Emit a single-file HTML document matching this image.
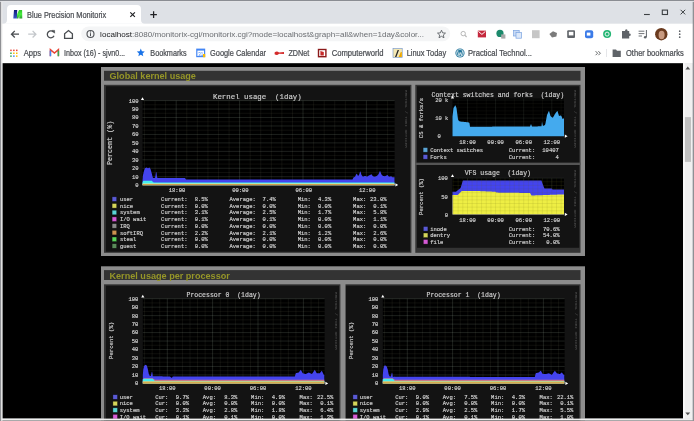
<!DOCTYPE html>
<html><head><meta charset="utf-8"><title>Blue Precision Monitorix</title>
<style>html,body{margin:0;padding:0;width:694px;height:421px;overflow:hidden;background:#8f9094;}
svg text{white-space:pre;} svg{filter:blur(0.35px);}</style></head>
<body>
<svg width="694" height="421" viewBox="0 0 694 421" style="position:absolute;left:0;top:0">
<rect x="0.00" y="0.00" width="694.00" height="421.00" fill="#dee1e6" />
<path d="M3,23.8 Q7,23.8 7,19.8 L7,9 Q7,5 11,5 L137,5 Q141,5 141,9 L141,19.8 Q141,23.8 145,23.8 Z" fill="#ffffff"/>
<rect x="0.00" y="23.70" width="694.00" height="39.50" fill="#ffffff" />
<defs><linearGradient id="fb" x1="0" y1="0" x2="0" y2="1"><stop offset="0" stop-color="#101c7a"/><stop offset="1" stop-color="#3a58c8"/></linearGradient><linearGradient id="fg" x1="0" y1="0" x2="0" y2="1"><stop offset="0" stop-color="#2ec02a"/><stop offset="0.5" stop-color="#48f040"/><stop offset="1" stop-color="#2a9a30"/></linearGradient></defs>
<path d="M13.3,18.6 L14,9.9 L17.2,9.9 L16.9,18.6 Z" fill="url(#fb)"/>
<path d="M17.1,14.2 L19.0,9.9 L22.1,9.9 L22.3,18.6 L19.3,18.6 L19.2,15.2 L18.4,18.6 L16.9,18.6 Z" fill="url(#fg)"/>
<text x="27.10" y="17.80" font-family="Liberation Sans" font-size="8.2" fill="#4a4d52" textLength="79.10" lengthAdjust="spacingAndGlyphs" stroke="#4a4d52" stroke-width="0.22">Blue Precision Monitorix</text>
<path d="M130.3,12.3 L134.9,16.9 M134.9,12.3 L130.3,16.9" stroke="#202124" stroke-width="1.15"/>
<path d="M153.6,11.3 L153.6,17.9 M150.3,14.6 L156.9,14.6" stroke="#202124" stroke-width="1.25"/>
<path d="M644,14.5 L649.8,14.5" stroke="#3c4043" stroke-width="1.1"/>
<rect x="662.3" y="10.1" width="5.2" height="4.4" fill="none" stroke="#3c4043" stroke-width="1.1"/>
<path d="M680.6,9.8 L685.2,14.4 M685.2,9.8 L680.6,14.4" stroke="#3c4043" stroke-width="1"/>
<path d="M19,34.2 L11.6,34.2 M14.8,30.9 L11.5,34.2 L14.8,37.5" stroke="#4a4d51" stroke-width="1.3" fill="none"/>
<path d="M28.2,34.2 L35.8,34.2 M32.6,30.9 L35.9,34.2 L32.6,37.5" stroke="#c4c7cb" stroke-width="1.3" fill="none"/>
<path d="M53.6,32.2 A3.5,3.5 0 1 0 54,35.8" stroke="#4a4d51" stroke-width="1.3" fill="none"/><path d="M51.8,30.4 L54.6,30.4 L54.6,33.2 Z" fill="#4a4d51" stroke="#4a4d51" stroke-width="0.6"/>
<path d="M64.6,38.3 L64.6,33.8 L68.5,30.5 L72.4,33.8 L72.4,38.3 Z" stroke="#4a4d51" stroke-width="1.3" fill="none"/>
<rect x="81.2" y="26.4" width="369" height="14.8" rx="7.4" fill="#f4f5f6"/>
<circle cx="90.5" cy="34" r="3.5" fill="none" stroke="#505357" stroke-width="1.1"/><path d="M90.5,33.2 L90.5,36.2" stroke="#505357" stroke-width="1"/><circle cx="90.5" cy="31.9" r="0.6" fill="#505357"/>
<text x="100.1" y="37.1" font-family="Liberation Sans" font-size="7.95" fill="#6b6e72" textLength="324" lengthAdjust="spacingAndGlyphs"><tspan fill="#202124">localhost</tspan>:8080/monitorix-cgi/monitorix.cgi?mode=localhost&amp;graph=all&amp;when=1day&amp;color...</text>
<polygon points="441.50,30.20 442.61,32.87 445.49,33.10 443.30,34.98 443.97,37.80 441.50,36.29 439.03,37.80 439.70,34.98 437.51,33.10 440.39,32.87" fill="none" stroke="#5f6368" stroke-width="0.9"/>
<circle cx="463.2" cy="33.6" r="2.2" fill="none" stroke="#b8b8b8" stroke-width="1"/><path d="M464.8,35.2 L466.6,37" stroke="#b8b8b8" stroke-width="1.2"/>
<rect x="477.8" y="30.6" width="8.2" height="6.8" fill="#c5283d"/><path d="M478.4,31.4 L481.9,34.4 L485.4,31.4" stroke="#fff" stroke-width="1" fill="none"/>
<circle cx="500" cy="33.4" r="3.6" fill="#1d8a6c"/><rect x="501.2" y="34.4" width="4.2" height="4.2" fill="#a8a8a8"/>
<rect x="513.6" y="30.4" width="5.6" height="5.6" fill="#c8daf5" stroke="#7aa3e0" stroke-width="0.7"/><rect x="516" y="32.6" width="5.6" height="5.6" fill="#dce8f9" stroke="#7aa3e0" stroke-width="0.7"/>
<rect x="532" y="30.2" width="7.6" height="8" fill="#c6c6c6"/>
<path d="M549.4,34 L553,31.2 L557,33 L556.4,36.6 L552,37.6 Z" fill="#7b7b7b"/>
<rect x="567.2" y="30.2" width="7.8" height="7.8" rx="1" fill="#5f6368"/><rect x="568.8" y="31.8" width="4.6" height="3.6" fill="#fff"/>
<rect x="585" y="30.2" width="8.2" height="8" rx="2" fill="#3b7be8"/><rect x="586.8" y="32.6" width="3.6" height="3" fill="#fff"/>
<circle cx="607.1" cy="34.1" r="4" fill="#22b573"/><circle cx="607.1" cy="34.1" r="2" fill="none" stroke="#fff" stroke-width="0.9"/>
<path d="M622,31 L625,31 Q625,29.2 626.3,29.2 Q627.6,29.2 627.6,31 L629.2,31 L629.2,33.4 Q630.8,33.4 630.8,34.7 Q630.8,36 629.2,36 L629.2,38.4 L622,38.4 Z" fill="#5f6368"/>
<path d="M638.6,31.2 L644.4,31.2 M638.6,33.6 L644.4,33.6 M638.6,36 L642,36" stroke="#5f6368" stroke-width="0.9"/><path d="M646.4,30 L646.4,37" stroke="#5f6368" stroke-width="1"/><circle cx="645.2" cy="37.2" r="1.3" fill="#5f6368"/>
<circle cx="661.3" cy="34.2" r="6.2" fill="#6a3a1e"/><ellipse cx="661.6" cy="35" rx="3" ry="4.2" fill="#c89a80"/>
<circle cx="679.7" cy="31.200000000000003" r="0.85" fill="#5f6368"/>
<circle cx="679.7" cy="34.2" r="0.85" fill="#5f6368"/>
<circle cx="679.7" cy="37.2" r="0.85" fill="#5f6368"/>
<rect x="10.20" y="49.60" width="1.5" height="1.5" fill="#ea4335"/>
<rect x="13.10" y="49.60" width="1.5" height="1.5" fill="#ea4335"/>
<rect x="16.00" y="49.60" width="1.5" height="1.5" fill="#ea4335"/>
<rect x="10.20" y="52.50" width="1.5" height="1.5" fill="#34a853"/>
<rect x="13.10" y="52.50" width="1.5" height="1.5" fill="#fbbc05"/>
<rect x="16.00" y="52.50" width="1.5" height="1.5" fill="#fbbc05"/>
<rect x="10.20" y="55.40" width="1.5" height="1.5" fill="#34a853"/>
<rect x="13.10" y="55.40" width="1.5" height="1.5" fill="#4285f4"/>
<rect x="16.00" y="55.40" width="1.5" height="1.5" fill="#fbbc05"/>
<text x="23.70" y="56.10" font-family="Liberation Sans" font-size="8.2" fill="#4a4d52" textLength="17.30" lengthAdjust="spacingAndGlyphs" stroke="#4a4d52" stroke-width="0.22">Apps</text>
<path d="M50.4,56.2 L50.4,49.6 L54.4,53 L58.4,49.6 L58.4,56.2" stroke="#ea4335" stroke-width="1.5" fill="none"/><path d="M50.4,56.2 L50.4,50.6" stroke="#4285f4" stroke-width="1.5"/><path d="M58.4,56.2 L58.4,50.6" stroke="#34a853" stroke-width="1.5"/>
<text x="64.00" y="56.10" font-family="Liberation Sans" font-size="8.2" fill="#4a4d52" textLength="61.10" lengthAdjust="spacingAndGlyphs" stroke="#4a4d52" stroke-width="0.22">Inbox (16) - sjvn0...</text>
<polygon points="140.80,48.60 141.91,51.27 144.79,51.50 142.60,53.38 143.27,56.20 140.80,54.69 138.33,56.20 139.00,53.38 136.81,51.50 139.69,51.27" fill="#1a73e8"/>
<text x="150.30" y="56.10" font-family="Liberation Sans" font-size="8.2" fill="#4a4d52" textLength="36.30" lengthAdjust="spacingAndGlyphs" stroke="#4a4d52" stroke-width="0.22">Bookmarks</text>
<rect x="196.2" y="48.6" width="9" height="8.6" fill="#4285f4"/><rect x="197.4" y="50.6" width="6.6" height="5.4" fill="#fff"/><rect x="203" y="54" width="2.2" height="3.2" fill="#fbbc05"/><text x="198.2" y="55.6" font-family="Liberation Sans" font-size="4.5" fill="#4285f4">31</text>
<text x="210.00" y="56.10" font-family="Liberation Sans" font-size="8.2" fill="#4a4d52" textLength="56.00" lengthAdjust="spacingAndGlyphs" stroke="#4a4d52" stroke-width="0.22">Google Calendar</text>
<path d="M274.6,52.4 Q277,50.6 279,52.4 L284,52 L284,54 L279,53.8 Q277,56 274.6,54.2 Z" fill="#d42a2a"/>
<text x="288.40" y="56.10" font-family="Liberation Sans" font-size="8.2" fill="#4a4d52" textLength="20.80" lengthAdjust="spacingAndGlyphs" stroke="#4a4d52" stroke-width="0.22">ZDNet</text>
<rect x="317.8" y="48.8" width="8.8" height="8.6" fill="#8b1a1a"/><rect x="319.2" y="50.2" width="6" height="5.8" fill="#fff"/><path d="M320.4,51 L320.4,55.4 L323.8,55.4 L323.8,52 Z" fill="#c62828"/>
<text x="331.70" y="56.10" font-family="Liberation Sans" font-size="8.2" fill="#4a4d52" textLength="51.70" lengthAdjust="spacingAndGlyphs" stroke="#4a4d52" stroke-width="0.22">Computerworld</text>
<rect x="393" y="48.6" width="9.2" height="8.8" fill="#f3e7b3" stroke="#6b8fc8" stroke-width="0.6"/><path d="M395,57 L397.6,50 L399,50 L396.4,57 Z" fill="#222"/><path d="M398.6,57 L400.8,52 L401.8,52 L401.8,57 Z" fill="#f0a800"/>
<text x="406.70" y="56.10" font-family="Liberation Sans" font-size="8.2" fill="#4a4d52" textLength="39.50" lengthAdjust="spacingAndGlyphs" stroke="#4a4d52" stroke-width="0.22">Linux Today</text>
<circle cx="460" cy="53" r="4.6" fill="#21759b"/><circle cx="460" cy="53" r="3.6" fill="none" stroke="#fff" stroke-width="0.6"/><path d="M457.6,51 L459,55.6 L460.2,52.4 L461.4,55.6 L462.6,51" stroke="#fff" stroke-width="0.7" fill="none"/>
<text x="468.00" y="56.10" font-family="Liberation Sans" font-size="8.2" fill="#4a4d52" textLength="64.00" lengthAdjust="spacingAndGlyphs" stroke="#4a4d52" stroke-width="0.22">Practical Technol...</text>
<path d="M595.6,51.2 L597.6,53.2 L595.6,55.2 M598.4,51.2 L600.4,53.2 L598.4,55.2" stroke="#3c4043" stroke-width="0.8" fill="none"/>
<rect x="606.20" y="49.00" width="0.70" height="8.00" fill="#dadce0" />
<path d="M612.6,49.6 L616,49.6 L617,50.8 L620.8,50.8 L620.8,57 L612.6,57 Z" fill="#5f6368"/>
<text x="626.00" y="56.10" font-family="Liberation Sans" font-size="8.2" fill="#4a4d52" textLength="57.70" lengthAdjust="spacingAndGlyphs" stroke="#4a4d52" stroke-width="0.22">Other bookmarks</text>
<rect x="2.40" y="63.20" width="680.60" height="355.40" fill="#000000" />
<rect x="683.00" y="63.20" width="9.70" height="355.40" fill="#f0f0f0" />
<rect x="683.20" y="63.20" width="1.60" height="355.40" fill="#fbfbfb" />
<rect x="684.90" y="117.10" width="6.10" height="44.80" fill="#c1c1c1" />
<path d="M685.4,69.4 L690.2,69.4 L687.8,66.6 Z" fill="#505050"/>
<path d="M685.4,412.4 L690.2,412.4 L687.8,415.2 Z" fill="#505050"/>
<rect x="101.00" y="67.00" width="484.00" height="189.00" fill="#8c8c8c" />
<rect x="104.00" y="70.80" width="476.50" height="9.90" fill="#333333" />
<text x="109.50" y="79.40" font-family="Liberation Sans" font-size="9.1" fill="#969628" text-anchor="start" font-weight="bold" >Global kernel usage</text>
<rect x="104.00" y="84.80" width="307.40" height="168.00" fill="#333333" />
<rect x="415.30" y="84.80" width="165.20" height="168.00" fill="#333333" />
<rect x="105.90" y="86.20" width="304.10" height="165.50" fill="#131313" />
<rect x="142.50" y="100.60" width="252.10" height="84.60" fill="#000" />
<path d="M144.49,100.60V185.20 M155.06,100.60V185.20 M165.63,100.60V185.20 M186.77,100.60V185.20 M197.34,100.60V185.20 M207.91,100.60V185.20 M218.48,100.60V185.20 M229.05,100.60V185.20 M250.19,100.60V185.20 M260.76,100.60V185.20 M271.33,100.60V185.20 M281.90,100.60V185.20 M292.47,100.60V185.20 M313.61,100.60V185.20 M324.18,100.60V185.20 M334.75,100.60V185.20 M345.32,100.60V185.20 M355.89,100.60V185.20 M377.03,100.60V185.20 M387.60,100.60V185.20 M142.50,180.97H394.60 M142.50,172.51H394.60 M142.50,164.05H394.60 M142.50,155.59H394.60 M142.50,147.13H394.60 M142.50,138.67H394.60 M142.50,130.21H394.60 M142.50,121.75H394.60 M142.50,113.29H394.60 M142.50,104.83H394.60" stroke="#b0b090" stroke-opacity="0.150" stroke-width="0.6" fill="none"/>
<path d="M176.20,100.60V185.20 M239.60,100.60V185.20 M303.00,100.60V185.20 M366.40,100.60V185.20 M142.50,176.74H394.60 M142.50,168.28H394.60 M142.50,159.82H394.60 M142.50,151.36H394.60 M142.50,142.90H394.60 M142.50,134.44H394.60 M142.50,125.98H394.60 M142.50,117.52H394.60 M142.50,109.06H394.60 M142.50,100.60H394.60" stroke="#b0c0b0" stroke-opacity="0.240" stroke-width="0.7" fill="none"/>
<path d="M142.50,185.20 L142.50,180.12 L143.00,175.05 L143.50,172.93 L144.00,170.82 L144.50,169.55 L145.00,168.28 L145.50,168.02 L146.00,167.75 L146.50,167.49 L147.00,167.72 L147.50,168.07 L148.00,168.17 L148.50,167.91 L149.00,167.65 L149.50,167.57 L150.00,168.28 L150.50,168.98 L151.00,170.63 L151.50,172.51 L152.00,174.62 L152.50,176.47 L153.00,177.92 L153.50,177.92 L154.00,177.92 L154.50,177.92 L155.00,177.92 L155.50,175.52 L156.00,172.09 L156.50,172.51 L157.00,177.02 L157.50,177.92 L158.00,177.92 L158.50,177.92 L159.00,177.92 L159.50,177.92 L160.00,177.92 L160.50,177.92 L161.00,177.92 L161.50,177.92 L162.00,177.92 L162.50,177.92 L163.00,177.92 L163.50,177.92 L164.00,177.92 L164.50,177.92 L165.00,177.92 L165.50,177.92 L166.00,177.92 L166.50,177.92 L167.00,177.92 L167.50,177.92 L168.00,177.92 L168.50,177.92 L169.00,177.92 L169.50,177.92 L170.00,177.92 L170.50,177.92 L171.00,177.92 L171.50,177.92 L172.00,177.92 L172.50,177.92 L173.00,177.92 L173.50,177.92 L174.00,177.92 L174.50,177.92 L175.00,177.92 L175.50,177.92 L176.00,177.92 L176.50,177.92 L177.00,177.92 L177.50,177.92 L178.00,177.92 L178.50,177.92 L179.00,177.92 L179.50,177.92 L180.00,177.92 L180.50,177.92 L181.00,177.92 L181.50,177.92 L182.00,177.92 L182.50,177.92 L183.00,177.92 L183.50,177.92 L184.00,177.92 L184.50,177.92 L185.00,177.92 L185.50,178.77 L186.00,179.62 L186.50,179.62 L187.00,179.62 L187.50,179.62 L188.00,179.62 L188.50,179.62 L189.00,179.62 L189.50,179.62 L190.00,179.62 L190.50,179.62 L191.00,179.62 L191.50,179.62 L192.00,179.62 L192.50,179.62 L193.00,179.62 L193.50,179.62 L194.00,179.62 L194.50,179.62 L195.00,179.62 L195.50,179.62 L196.00,179.62 L196.50,179.62 L197.00,179.62 L197.50,179.62 L198.00,179.62 L198.50,179.62 L199.00,179.62 L199.50,179.62 L200.00,179.62 L200.50,179.62 L201.00,179.62 L201.50,179.62 L202.00,179.62 L202.50,179.62 L203.00,179.62 L203.50,179.62 L204.00,179.62 L204.50,179.62 L205.00,179.62 L205.50,179.62 L206.00,179.62 L206.50,179.62 L207.00,179.62 L207.50,179.62 L208.00,179.62 L208.50,179.62 L209.00,179.62 L209.50,179.62 L210.00,179.62 L210.50,179.62 L211.00,179.62 L211.50,179.62 L212.00,179.62 L212.50,179.62 L213.00,179.62 L213.50,179.62 L214.00,179.62 L214.50,179.62 L215.00,179.62 L215.50,179.62 L216.00,179.62 L216.50,179.62 L217.00,179.62 L217.50,179.62 L218.00,179.62 L218.50,179.62 L219.00,179.62 L219.50,179.62 L220.00,179.62 L220.50,179.62 L221.00,179.62 L221.50,179.62 L222.00,179.62 L222.50,179.62 L223.00,179.62 L223.50,179.62 L224.00,179.62 L224.50,179.62 L225.00,179.62 L225.50,179.62 L226.00,179.62 L226.50,179.62 L227.00,179.62 L227.50,179.62 L228.00,179.62 L228.50,179.62 L229.00,179.62 L229.50,179.62 L230.00,179.62 L230.50,179.62 L231.00,179.62 L231.50,179.62 L232.00,179.62 L232.50,179.62 L233.00,179.62 L233.50,179.62 L234.00,179.62 L234.50,179.62 L235.00,179.62 L235.50,179.62 L236.00,179.62 L236.50,179.62 L237.00,179.62 L237.50,179.62 L238.00,179.62 L238.50,179.62 L239.00,179.62 L239.50,179.62 L240.00,179.62 L240.50,179.62 L241.00,179.62 L241.50,179.62 L242.00,179.62 L242.50,179.62 L243.00,179.62 L243.50,179.62 L244.00,179.62 L244.50,179.62 L245.00,179.62 L245.50,179.62 L246.00,179.62 L246.50,179.62 L247.00,179.62 L247.50,179.62 L248.00,179.62 L248.50,179.62 L249.00,179.62 L249.50,179.62 L250.00,179.62 L250.50,179.62 L251.00,179.62 L251.50,179.62 L252.00,179.62 L252.50,179.62 L253.00,179.62 L253.50,179.62 L254.00,179.62 L254.50,179.62 L255.00,179.62 L255.50,179.62 L256.00,179.62 L256.50,179.62 L257.00,179.62 L257.50,179.62 L258.00,179.62 L258.50,179.62 L259.00,179.62 L259.50,179.62 L260.00,179.62 L260.50,179.62 L261.00,179.62 L261.50,179.62 L262.00,179.62 L262.50,179.62 L263.00,179.62 L263.50,179.62 L264.00,179.62 L264.50,179.62 L265.00,179.62 L265.50,179.62 L266.00,179.62 L266.50,179.62 L267.00,179.62 L267.50,179.62 L268.00,179.62 L268.50,179.62 L269.00,179.62 L269.50,179.62 L270.00,179.62 L270.50,179.62 L271.00,179.62 L271.50,179.62 L272.00,179.62 L272.50,179.62 L273.00,179.62 L273.50,179.62 L274.00,179.62 L274.50,179.62 L275.00,179.62 L275.50,179.62 L276.00,179.62 L276.50,179.62 L277.00,179.62 L277.50,179.62 L278.00,179.62 L278.50,179.62 L279.00,179.62 L279.50,179.62 L280.00,179.62 L280.50,179.62 L281.00,179.62 L281.50,179.62 L282.00,179.62 L282.50,179.62 L283.00,179.62 L283.50,179.62 L284.00,179.62 L284.50,179.62 L285.00,179.62 L285.50,179.62 L286.00,179.62 L286.50,179.62 L287.00,179.62 L287.50,179.62 L288.00,179.62 L288.50,179.62 L289.00,179.62 L289.50,179.62 L290.00,179.62 L290.50,179.62 L291.00,179.62 L291.50,179.62 L292.00,179.62 L292.50,179.62 L293.00,179.62 L293.50,179.62 L294.00,179.62 L294.50,179.62 L295.00,179.62 L295.50,179.62 L296.00,179.62 L296.50,179.62 L297.00,179.62 L297.50,179.62 L298.00,179.62 L298.50,179.62 L299.00,179.62 L299.50,179.62 L300.00,179.62 L300.50,179.62 L301.00,179.62 L301.50,179.62 L302.00,179.62 L302.50,179.62 L303.00,179.62 L303.50,179.62 L304.00,179.62 L304.50,179.62 L305.00,179.62 L305.50,179.62 L306.00,179.62 L306.50,179.62 L307.00,179.62 L307.50,179.62 L308.00,179.62 L308.50,179.62 L309.00,179.62 L309.50,179.62 L310.00,179.62 L310.50,179.62 L311.00,179.62 L311.50,179.62 L312.00,179.62 L312.50,179.62 L313.00,179.62 L313.50,179.62 L314.00,179.62 L314.50,179.62 L315.00,179.62 L315.50,179.62 L316.00,179.62 L316.50,179.62 L317.00,179.62 L317.50,179.62 L318.00,179.62 L318.50,179.62 L319.00,179.62 L319.50,179.62 L320.00,179.62 L320.50,179.62 L321.00,179.62 L321.50,179.62 L322.00,179.62 L322.50,179.62 L323.00,179.62 L323.50,179.62 L324.00,179.62 L324.50,179.62 L325.00,179.62 L325.50,179.62 L326.00,179.62 L326.50,179.62 L327.00,179.62 L327.50,179.62 L328.00,179.62 L328.50,179.62 L329.00,179.62 L329.50,179.62 L330.00,179.62 L330.50,179.62 L331.00,179.62 L331.50,179.62 L332.00,179.62 L332.50,179.62 L333.00,179.62 L333.50,179.62 L334.00,179.62 L334.50,179.62 L335.00,179.62 L335.50,179.62 L336.00,179.62 L336.50,179.62 L337.00,179.62 L337.50,179.62 L338.00,179.62 L338.50,179.62 L339.00,179.62 L339.50,179.62 L340.00,179.62 L340.50,179.62 L341.00,179.62 L341.50,179.62 L342.00,179.62 L342.50,179.62 L343.00,179.62 L343.50,179.62 L344.00,179.62 L344.50,179.62 L345.00,179.62 L345.50,179.62 L346.00,179.62 L346.50,179.62 L347.00,179.62 L347.50,179.62 L348.00,179.62 L348.50,179.62 L349.00,179.62 L349.50,179.62 L350.00,179.62 L350.50,179.62 L351.00,179.62 L351.50,179.62 L352.00,179.62 L352.50,179.62 L353.00,178.60 L353.50,177.59 L354.00,177.30 L354.50,177.02 L355.00,176.74 L355.50,175.74 L356.00,174.75 L356.50,173.75 L357.00,173.94 L357.50,174.92 L358.00,175.89 L358.50,175.47 L359.00,175.05 L359.50,173.42 L360.00,171.79 L360.50,171.52 L361.00,173.29 L361.50,175.05 L362.00,175.61 L362.50,176.18 L363.00,176.74 L363.50,176.53 L364.00,176.32 L364.50,176.11 L365.00,175.89 L365.50,176.11 L366.00,176.32 L366.50,176.53 L367.00,176.74 L367.50,176.42 L368.00,176.11 L368.50,175.79 L369.00,175.47 L369.50,175.21 L370.00,174.94 L370.50,174.68 L371.00,174.41 L371.50,174.33 L372.00,175.00 L372.50,175.66 L373.00,176.32 L373.50,176.42 L374.00,176.53 L374.50,176.63 L375.00,176.74 L375.50,176.53 L376.00,176.32 L376.50,176.11 L377.00,175.89 L377.50,175.33 L378.00,174.77 L378.50,174.20 L379.00,173.07 L379.50,171.95 L380.00,170.82 L380.50,172.09 L381.00,173.36 L381.50,174.62 L382.00,175.05 L382.50,175.47 L383.00,175.89 L383.50,176.00 L384.00,176.11 L384.50,176.21 L385.00,176.32 L385.50,176.06 L386.00,175.81 L386.50,175.56 L387.00,175.30 L387.50,175.05 L388.00,175.61 L388.50,176.18 L389.00,176.74 L389.50,176.63 L390.00,176.53 L390.50,176.42 L391.00,176.32 L391.50,176.60 L392.00,176.88 L392.50,177.16 L393.00,177.16 L393.50,177.16 L394.00,177.16 L394.50,177.16 L394.50,185.20 Z" fill="#4444ee"/>
<path d="M142.50,185.20 L142.50,182.24 L143.00,181.35 L143.50,180.63 L144.00,180.64 L144.50,180.64 L145.00,180.65 L145.50,180.65 L146.00,180.66 L146.50,180.66 L147.00,180.67 L147.50,180.67 L148.00,180.68 L148.50,180.68 L149.00,180.69 L149.50,180.69 L150.00,180.70 L150.50,180.70 L151.00,180.71 L151.50,180.71 L152.00,180.72 L152.50,181.52 L153.00,182.32 L153.50,182.36 L154.00,182.39 L154.50,182.42 L155.00,182.45 L155.50,182.48 L156.00,182.51 L156.50,182.55 L157.00,182.58 L157.50,182.58 L158.00,182.58 L158.50,182.58 L159.00,182.58 L159.50,182.58 L160.00,182.58 L160.50,182.58 L161.00,182.58 L161.50,182.58 L162.00,182.58 L162.50,182.58 L163.00,182.58 L163.50,182.58 L164.00,182.58 L164.50,182.58 L165.00,182.58 L165.50,182.58 L166.00,182.58 L166.50,182.58 L167.00,182.58 L167.50,182.58 L168.00,182.58 L168.50,182.58 L169.00,182.58 L169.50,182.58 L170.00,182.58 L170.50,182.58 L171.00,182.58 L171.50,182.58 L172.00,182.58 L172.50,182.58 L173.00,182.58 L173.50,182.58 L174.00,182.58 L174.50,182.58 L175.00,182.58 L175.50,182.58 L176.00,182.58 L176.50,182.58 L177.00,182.58 L177.50,182.58 L178.00,182.58 L178.50,182.58 L179.00,182.58 L179.50,182.58 L180.00,182.58 L180.50,182.58 L181.00,182.58 L181.50,182.58 L182.00,182.58 L182.50,182.58 L183.00,182.58 L183.50,182.58 L184.00,182.58 L184.50,182.58 L185.00,182.58 L185.50,182.58 L186.00,182.58 L186.50,182.58 L187.00,182.58 L187.50,182.58 L188.00,182.58 L188.50,182.58 L189.00,182.58 L189.50,182.58 L190.00,182.58 L190.50,182.58 L191.00,182.58 L191.50,182.58 L192.00,182.58 L192.50,182.58 L193.00,182.58 L193.50,182.58 L194.00,182.58 L194.50,182.58 L195.00,182.58 L195.50,182.58 L196.00,182.58 L196.50,182.58 L197.00,182.58 L197.50,182.58 L198.00,182.58 L198.50,182.58 L199.00,182.58 L199.50,182.58 L200.00,182.58 L200.50,182.58 L201.00,182.58 L201.50,182.58 L202.00,182.58 L202.50,182.58 L203.00,182.58 L203.50,182.58 L204.00,182.58 L204.50,182.58 L205.00,182.58 L205.50,182.58 L206.00,182.58 L206.50,182.58 L207.00,182.58 L207.50,182.58 L208.00,182.58 L208.50,182.58 L209.00,182.58 L209.50,182.58 L210.00,182.58 L210.50,182.58 L211.00,182.58 L211.50,182.58 L212.00,182.58 L212.50,182.58 L213.00,182.58 L213.50,182.58 L214.00,182.58 L214.50,182.58 L215.00,182.58 L215.50,182.58 L216.00,182.58 L216.50,182.58 L217.00,182.58 L217.50,182.58 L218.00,182.58 L218.50,182.58 L219.00,182.58 L219.50,182.58 L220.00,182.58 L220.50,182.58 L221.00,182.58 L221.50,182.58 L222.00,182.58 L222.50,182.58 L223.00,182.58 L223.50,182.58 L224.00,182.58 L224.50,182.58 L225.00,182.58 L225.50,182.58 L226.00,182.58 L226.50,182.58 L227.00,182.58 L227.50,182.58 L228.00,182.58 L228.50,182.58 L229.00,182.58 L229.50,182.58 L230.00,182.58 L230.50,182.58 L231.00,182.58 L231.50,182.58 L232.00,182.58 L232.50,182.58 L233.00,182.58 L233.50,182.58 L234.00,182.58 L234.50,182.58 L235.00,182.58 L235.50,182.58 L236.00,182.58 L236.50,182.58 L237.00,182.58 L237.50,182.58 L238.00,182.58 L238.50,182.58 L239.00,182.58 L239.50,182.58 L240.00,182.58 L240.50,182.58 L241.00,182.58 L241.50,182.58 L242.00,182.58 L242.50,182.58 L243.00,182.58 L243.50,182.58 L244.00,182.58 L244.50,182.58 L245.00,182.58 L245.50,182.58 L246.00,182.58 L246.50,182.58 L247.00,182.58 L247.50,182.58 L248.00,182.58 L248.50,182.58 L249.00,182.58 L249.50,182.58 L250.00,182.58 L250.50,182.58 L251.00,182.58 L251.50,182.58 L252.00,182.58 L252.50,182.58 L253.00,182.58 L253.50,182.58 L254.00,182.58 L254.50,182.58 L255.00,182.58 L255.50,182.58 L256.00,182.58 L256.50,182.58 L257.00,182.58 L257.50,182.58 L258.00,182.58 L258.50,182.58 L259.00,182.58 L259.50,182.58 L260.00,182.58 L260.50,182.58 L261.00,182.58 L261.50,182.58 L262.00,182.58 L262.50,182.58 L263.00,182.58 L263.50,182.58 L264.00,182.58 L264.50,182.58 L265.00,182.58 L265.50,182.58 L266.00,182.58 L266.50,182.58 L267.00,182.58 L267.50,182.58 L268.00,182.58 L268.50,182.58 L269.00,182.58 L269.50,182.58 L270.00,182.58 L270.50,182.58 L271.00,182.58 L271.50,182.58 L272.00,182.58 L272.50,182.58 L273.00,182.58 L273.50,182.58 L274.00,182.58 L274.50,182.58 L275.00,182.58 L275.50,182.58 L276.00,182.58 L276.50,182.58 L277.00,182.58 L277.50,182.58 L278.00,182.58 L278.50,182.58 L279.00,182.58 L279.50,182.58 L280.00,182.58 L280.50,182.58 L281.00,182.58 L281.50,182.58 L282.00,182.58 L282.50,182.58 L283.00,182.58 L283.50,182.58 L284.00,182.58 L284.50,182.58 L285.00,182.58 L285.50,182.58 L286.00,182.58 L286.50,182.58 L287.00,182.58 L287.50,182.58 L288.00,182.58 L288.50,182.58 L289.00,182.58 L289.50,182.58 L290.00,182.58 L290.50,182.58 L291.00,182.58 L291.50,182.58 L292.00,182.58 L292.50,182.58 L293.00,182.58 L293.50,182.58 L294.00,182.58 L294.50,182.58 L295.00,182.58 L295.50,182.58 L296.00,182.58 L296.50,182.58 L297.00,182.58 L297.50,182.58 L298.00,182.58 L298.50,182.58 L299.00,182.58 L299.50,182.58 L300.00,182.58 L300.50,182.58 L301.00,182.58 L301.50,182.58 L302.00,182.58 L302.50,182.58 L303.00,182.58 L303.50,182.58 L304.00,182.58 L304.50,182.58 L305.00,182.58 L305.50,182.58 L306.00,182.58 L306.50,182.58 L307.00,182.58 L307.50,182.58 L308.00,182.58 L308.50,182.58 L309.00,182.58 L309.50,182.58 L310.00,182.58 L310.50,182.58 L311.00,182.58 L311.50,182.58 L312.00,182.58 L312.50,182.58 L313.00,182.58 L313.50,182.58 L314.00,182.58 L314.50,182.58 L315.00,182.58 L315.50,182.58 L316.00,182.58 L316.50,182.58 L317.00,182.58 L317.50,182.58 L318.00,182.58 L318.50,182.58 L319.00,182.58 L319.50,182.58 L320.00,182.58 L320.50,182.58 L321.00,182.58 L321.50,182.58 L322.00,182.58 L322.50,182.58 L323.00,182.58 L323.50,182.58 L324.00,182.58 L324.50,182.58 L325.00,182.58 L325.50,182.58 L326.00,182.58 L326.50,182.58 L327.00,182.58 L327.50,182.58 L328.00,182.58 L328.50,182.58 L329.00,182.58 L329.50,182.58 L330.00,182.58 L330.50,182.58 L331.00,182.58 L331.50,182.58 L332.00,182.58 L332.50,182.58 L333.00,182.58 L333.50,182.58 L334.00,182.58 L334.50,182.58 L335.00,182.58 L335.50,182.58 L336.00,182.58 L336.50,182.58 L337.00,182.58 L337.50,182.58 L338.00,182.58 L338.50,182.58 L339.00,182.58 L339.50,182.58 L340.00,182.58 L340.50,182.58 L341.00,182.58 L341.50,182.58 L342.00,182.58 L342.50,182.58 L343.00,182.58 L343.50,182.58 L344.00,182.58 L344.50,182.58 L345.00,182.58 L345.50,182.58 L346.00,182.58 L346.50,182.58 L347.00,182.58 L347.50,182.58 L348.00,182.58 L348.50,182.58 L349.00,182.58 L349.50,182.58 L350.00,182.58 L350.50,182.58 L351.00,182.58 L351.50,182.58 L352.00,182.58 L352.50,182.58 L353.00,182.58 L353.50,182.58 L354.00,182.58 L354.50,182.58 L355.00,182.58 L355.50,182.58 L356.00,182.58 L356.50,182.58 L357.00,182.58 L357.50,182.58 L358.00,182.58 L358.50,182.58 L359.00,182.58 L359.50,182.58 L360.00,182.58 L360.50,182.58 L361.00,182.58 L361.50,182.58 L362.00,182.58 L362.50,182.58 L363.00,182.58 L363.50,182.58 L364.00,182.58 L364.50,182.58 L365.00,182.58 L365.50,182.58 L366.00,182.58 L366.50,182.58 L367.00,182.58 L367.50,182.58 L368.00,182.58 L368.50,182.58 L369.00,182.58 L369.50,182.58 L370.00,182.58 L370.50,182.58 L371.00,182.58 L371.50,182.58 L372.00,182.58 L372.50,182.58 L373.00,182.58 L373.50,182.58 L374.00,182.58 L374.50,182.58 L375.00,182.58 L375.50,182.58 L376.00,182.58 L376.50,182.58 L377.00,182.58 L377.50,182.58 L378.00,182.58 L378.50,182.58 L379.00,182.58 L379.50,182.58 L380.00,182.58 L380.50,182.58 L381.00,182.58 L381.50,182.58 L382.00,182.58 L382.50,182.58 L383.00,182.58 L383.50,182.58 L384.00,182.58 L384.50,182.58 L385.00,182.58 L385.50,182.58 L386.00,182.58 L386.50,182.58 L387.00,182.58 L387.50,182.58 L388.00,182.58 L388.50,182.58 L389.00,182.58 L389.50,182.58 L390.00,182.58 L390.50,182.58 L391.00,182.58 L391.50,182.58 L392.00,182.58 L392.50,182.58 L393.00,182.58 L393.50,182.58 L394.00,182.58 L394.50,182.58 L394.50,185.20 Z" fill="#44eeee"/>
<path d="M142.50,185.20 L142.50,183.51 L143.00,183.51 L143.50,183.51 L144.00,183.51 L144.50,183.51 L145.00,183.51 L145.50,183.51 L146.00,183.51 L146.50,183.51 L147.00,183.51 L147.50,183.51 L148.00,183.51 L148.50,183.51 L149.00,183.51 L149.50,183.51 L150.00,183.51 L150.50,183.51 L151.00,183.51 L151.50,183.51 L152.00,183.51 L152.50,183.51 L153.00,183.51 L153.50,183.51 L154.00,183.51 L154.50,183.51 L155.00,183.51 L155.50,183.51 L156.00,183.51 L156.50,183.51 L157.00,183.51 L157.50,183.51 L158.00,183.51 L158.50,183.51 L159.00,183.51 L159.50,183.51 L160.00,183.51 L160.50,183.51 L161.00,183.51 L161.50,183.51 L162.00,183.51 L162.50,183.51 L163.00,183.51 L163.50,183.51 L164.00,183.51 L164.50,183.51 L165.00,183.51 L165.50,183.51 L166.00,183.51 L166.50,183.51 L167.00,183.51 L167.50,183.51 L168.00,183.51 L168.50,183.51 L169.00,183.51 L169.50,183.51 L170.00,183.51 L170.50,183.51 L171.00,183.51 L171.50,183.51 L172.00,183.51 L172.50,183.51 L173.00,183.51 L173.50,183.51 L174.00,183.51 L174.50,183.51 L175.00,183.51 L175.50,183.51 L176.00,183.51 L176.50,183.51 L177.00,183.51 L177.50,183.51 L178.00,183.51 L178.50,183.51 L179.00,183.51 L179.50,183.51 L180.00,183.51 L180.50,183.51 L181.00,183.51 L181.50,183.51 L182.00,183.51 L182.50,183.51 L183.00,183.51 L183.50,183.51 L184.00,183.51 L184.50,183.51 L185.00,183.51 L185.50,183.51 L186.00,183.51 L186.50,183.51 L187.00,183.51 L187.50,183.51 L188.00,183.51 L188.50,183.51 L189.00,183.51 L189.50,183.51 L190.00,183.51 L190.50,183.51 L191.00,183.51 L191.50,183.51 L192.00,183.51 L192.50,183.51 L193.00,183.51 L193.50,183.51 L194.00,183.51 L194.50,183.51 L195.00,183.51 L195.50,183.51 L196.00,183.51 L196.50,183.51 L197.00,183.51 L197.50,183.51 L198.00,183.51 L198.50,183.51 L199.00,183.51 L199.50,183.51 L200.00,183.51 L200.50,183.51 L201.00,183.51 L201.50,183.51 L202.00,183.51 L202.50,183.51 L203.00,183.51 L203.50,183.51 L204.00,183.51 L204.50,183.51 L205.00,183.51 L205.50,183.51 L206.00,183.51 L206.50,183.51 L207.00,183.51 L207.50,183.51 L208.00,183.51 L208.50,183.51 L209.00,183.51 L209.50,183.51 L210.00,183.51 L210.50,183.51 L211.00,183.51 L211.50,183.51 L212.00,183.51 L212.50,183.51 L213.00,183.51 L213.50,183.51 L214.00,183.51 L214.50,183.51 L215.00,183.51 L215.50,183.51 L216.00,183.51 L216.50,183.51 L217.00,183.51 L217.50,183.51 L218.00,183.51 L218.50,183.51 L219.00,183.51 L219.50,183.51 L220.00,183.51 L220.50,183.51 L221.00,183.51 L221.50,183.51 L222.00,183.51 L222.50,183.51 L223.00,183.51 L223.50,183.51 L224.00,183.51 L224.50,183.51 L225.00,183.51 L225.50,183.51 L226.00,183.51 L226.50,183.51 L227.00,183.51 L227.50,183.51 L228.00,183.51 L228.50,183.51 L229.00,183.51 L229.50,183.51 L230.00,183.51 L230.50,183.51 L231.00,183.51 L231.50,183.51 L232.00,183.51 L232.50,183.51 L233.00,183.51 L233.50,183.51 L234.00,183.51 L234.50,183.51 L235.00,183.51 L235.50,183.51 L236.00,183.51 L236.50,183.51 L237.00,183.51 L237.50,183.51 L238.00,183.51 L238.50,183.51 L239.00,183.51 L239.50,183.51 L240.00,183.51 L240.50,183.51 L241.00,183.51 L241.50,183.51 L242.00,183.51 L242.50,183.51 L243.00,183.51 L243.50,183.51 L244.00,183.51 L244.50,183.51 L245.00,183.51 L245.50,183.51 L246.00,183.51 L246.50,183.51 L247.00,183.51 L247.50,183.51 L248.00,183.51 L248.50,183.51 L249.00,183.51 L249.50,183.51 L250.00,183.51 L250.50,183.51 L251.00,183.51 L251.50,183.51 L252.00,183.51 L252.50,183.51 L253.00,183.51 L253.50,183.51 L254.00,183.51 L254.50,183.51 L255.00,183.51 L255.50,183.51 L256.00,183.51 L256.50,183.51 L257.00,183.51 L257.50,183.51 L258.00,183.51 L258.50,183.51 L259.00,183.51 L259.50,183.51 L260.00,183.51 L260.50,183.51 L261.00,183.51 L261.50,183.51 L262.00,183.51 L262.50,183.51 L263.00,183.51 L263.50,183.51 L264.00,183.51 L264.50,183.51 L265.00,183.51 L265.50,183.51 L266.00,183.51 L266.50,183.51 L267.00,183.51 L267.50,183.51 L268.00,183.51 L268.50,183.51 L269.00,183.51 L269.50,183.51 L270.00,183.51 L270.50,183.51 L271.00,183.51 L271.50,183.51 L272.00,183.51 L272.50,183.51 L273.00,183.51 L273.50,183.51 L274.00,183.51 L274.50,183.51 L275.00,183.51 L275.50,183.51 L276.00,183.51 L276.50,183.51 L277.00,183.51 L277.50,183.51 L278.00,183.51 L278.50,183.51 L279.00,183.51 L279.50,183.51 L280.00,183.51 L280.50,183.51 L281.00,183.51 L281.50,183.51 L282.00,183.51 L282.50,183.51 L283.00,183.51 L283.50,183.51 L284.00,183.51 L284.50,183.51 L285.00,183.51 L285.50,183.51 L286.00,183.51 L286.50,183.51 L287.00,183.51 L287.50,183.51 L288.00,183.51 L288.50,183.51 L289.00,183.51 L289.50,183.51 L290.00,183.51 L290.50,183.51 L291.00,183.51 L291.50,183.51 L292.00,183.51 L292.50,183.51 L293.00,183.51 L293.50,183.51 L294.00,183.51 L294.50,183.51 L295.00,183.51 L295.50,183.51 L296.00,183.51 L296.50,183.51 L297.00,183.51 L297.50,183.51 L298.00,183.51 L298.50,183.51 L299.00,183.51 L299.50,183.51 L300.00,183.51 L300.50,183.51 L301.00,183.51 L301.50,183.51 L302.00,183.51 L302.50,183.51 L303.00,183.51 L303.50,183.51 L304.00,183.51 L304.50,183.51 L305.00,183.51 L305.50,183.51 L306.00,183.51 L306.50,183.51 L307.00,183.51 L307.50,183.51 L308.00,183.51 L308.50,183.51 L309.00,183.51 L309.50,183.51 L310.00,183.51 L310.50,183.51 L311.00,183.51 L311.50,183.51 L312.00,183.51 L312.50,183.51 L313.00,183.51 L313.50,183.51 L314.00,183.51 L314.50,183.51 L315.00,183.51 L315.50,183.51 L316.00,183.51 L316.50,183.51 L317.00,183.51 L317.50,183.51 L318.00,183.51 L318.50,183.51 L319.00,183.51 L319.50,183.51 L320.00,183.51 L320.50,183.51 L321.00,183.51 L321.50,183.51 L322.00,183.51 L322.50,183.51 L323.00,183.51 L323.50,183.51 L324.00,183.51 L324.50,183.51 L325.00,183.51 L325.50,183.51 L326.00,183.51 L326.50,183.51 L327.00,183.51 L327.50,183.51 L328.00,183.51 L328.50,183.51 L329.00,183.51 L329.50,183.51 L330.00,183.51 L330.50,183.51 L331.00,183.51 L331.50,183.51 L332.00,183.51 L332.50,183.51 L333.00,183.51 L333.50,183.51 L334.00,183.51 L334.50,183.51 L335.00,183.51 L335.50,183.51 L336.00,183.51 L336.50,183.51 L337.00,183.51 L337.50,183.51 L338.00,183.51 L338.50,183.51 L339.00,183.51 L339.50,183.51 L340.00,183.51 L340.50,183.51 L341.00,183.51 L341.50,183.51 L342.00,183.51 L342.50,183.51 L343.00,183.51 L343.50,183.51 L344.00,183.51 L344.50,183.51 L345.00,183.51 L345.50,183.51 L346.00,183.51 L346.50,183.51 L347.00,183.51 L347.50,183.51 L348.00,183.51 L348.50,183.51 L349.00,183.51 L349.50,183.51 L350.00,183.51 L350.50,183.51 L351.00,183.51 L351.50,183.51 L352.00,183.51 L352.50,183.51 L353.00,183.51 L353.50,183.51 L354.00,183.51 L354.50,183.51 L355.00,183.51 L355.50,183.51 L356.00,183.51 L356.50,183.51 L357.00,183.51 L357.50,183.51 L358.00,183.51 L358.50,183.51 L359.00,183.51 L359.50,183.51 L360.00,183.51 L360.50,183.51 L361.00,183.51 L361.50,183.51 L362.00,183.51 L362.50,183.51 L363.00,183.51 L363.50,183.51 L364.00,183.51 L364.50,183.51 L365.00,183.51 L365.50,183.51 L366.00,183.51 L366.50,183.51 L367.00,183.51 L367.50,183.51 L368.00,183.51 L368.50,183.51 L369.00,183.51 L369.50,183.51 L370.00,183.51 L370.50,183.51 L371.00,183.51 L371.50,183.51 L372.00,183.51 L372.50,183.51 L373.00,183.51 L373.50,183.51 L374.00,183.51 L374.50,183.51 L375.00,183.51 L375.50,183.51 L376.00,183.51 L376.50,183.51 L377.00,183.51 L377.50,183.51 L378.00,183.51 L378.50,183.51 L379.00,183.51 L379.50,183.51 L380.00,183.51 L380.50,183.51 L381.00,183.51 L381.50,183.51 L382.00,183.51 L382.50,183.51 L383.00,183.51 L383.50,183.51 L384.00,183.51 L384.50,183.51 L385.00,183.51 L385.50,183.51 L386.00,183.51 L386.50,183.51 L387.00,183.51 L387.50,183.51 L388.00,183.51 L388.50,183.51 L389.00,183.51 L389.50,183.51 L390.00,183.51 L390.50,183.51 L391.00,183.51 L391.50,183.51 L392.00,183.51 L392.50,183.51 L393.00,183.51 L393.50,183.51 L394.00,183.51 L394.50,183.51 L394.50,185.20 Z" fill="#eeee99"/>
<path d="M142.50,185.20 L142.50,184.35 L143.00,184.35 L143.50,184.35 L144.00,184.35 L144.50,184.35 L145.00,184.35 L145.50,184.35 L146.00,184.35 L146.50,184.35 L147.00,184.35 L147.50,184.35 L148.00,184.35 L148.50,184.35 L149.00,184.35 L149.50,184.35 L150.00,184.35 L150.50,184.35 L151.00,184.35 L151.50,184.35 L152.00,184.35 L152.50,184.35 L153.00,184.35 L153.50,184.35 L154.00,184.35 L154.50,184.35 L155.00,184.35 L155.50,184.35 L156.00,184.35 L156.50,184.35 L157.00,184.35 L157.50,184.35 L158.00,184.35 L158.50,184.35 L159.00,184.35 L159.50,184.35 L160.00,184.35 L160.50,184.35 L161.00,184.35 L161.50,184.35 L162.00,184.35 L162.50,184.35 L163.00,184.35 L163.50,184.35 L164.00,184.35 L164.50,184.35 L165.00,184.35 L165.50,184.35 L166.00,184.35 L166.50,184.35 L167.00,184.35 L167.50,184.35 L168.00,184.35 L168.50,184.35 L169.00,184.35 L169.50,184.35 L170.00,184.35 L170.50,184.35 L171.00,184.35 L171.50,184.35 L172.00,184.35 L172.50,184.35 L173.00,184.35 L173.50,184.35 L174.00,184.35 L174.50,184.35 L175.00,184.35 L175.50,184.35 L176.00,184.35 L176.50,184.35 L177.00,184.35 L177.50,184.35 L178.00,184.35 L178.50,184.35 L179.00,184.35 L179.50,184.35 L180.00,184.35 L180.50,184.35 L181.00,184.35 L181.50,184.35 L182.00,184.35 L182.50,184.35 L183.00,184.35 L183.50,184.35 L184.00,184.35 L184.50,184.35 L185.00,184.35 L185.50,184.35 L186.00,184.35 L186.50,184.35 L187.00,184.35 L187.50,184.35 L188.00,184.35 L188.50,184.35 L189.00,184.35 L189.50,184.35 L190.00,184.35 L190.50,184.35 L191.00,184.35 L191.50,184.35 L192.00,184.35 L192.50,184.35 L193.00,184.35 L193.50,184.35 L194.00,184.35 L194.50,184.35 L195.00,184.35 L195.50,184.35 L196.00,184.35 L196.50,184.35 L197.00,184.35 L197.50,184.35 L198.00,184.35 L198.50,184.35 L199.00,184.35 L199.50,184.35 L200.00,184.35 L200.50,184.35 L201.00,184.35 L201.50,184.35 L202.00,184.35 L202.50,184.35 L203.00,184.35 L203.50,184.35 L204.00,184.35 L204.50,184.35 L205.00,184.35 L205.50,184.35 L206.00,184.35 L206.50,184.35 L207.00,184.35 L207.50,184.35 L208.00,184.35 L208.50,184.35 L209.00,184.35 L209.50,184.35 L210.00,184.35 L210.50,184.35 L211.00,184.35 L211.50,184.35 L212.00,184.35 L212.50,184.35 L213.00,184.35 L213.50,184.35 L214.00,184.35 L214.50,184.35 L215.00,184.35 L215.50,184.35 L216.00,184.35 L216.50,184.35 L217.00,184.35 L217.50,184.35 L218.00,184.35 L218.50,184.35 L219.00,184.35 L219.50,184.35 L220.00,184.35 L220.50,184.35 L221.00,184.35 L221.50,184.35 L222.00,184.35 L222.50,184.35 L223.00,184.35 L223.50,184.35 L224.00,184.35 L224.50,184.35 L225.00,184.35 L225.50,184.35 L226.00,184.35 L226.50,184.35 L227.00,184.35 L227.50,184.35 L228.00,184.35 L228.50,184.35 L229.00,184.35 L229.50,184.35 L230.00,184.35 L230.50,184.35 L231.00,184.35 L231.50,184.35 L232.00,184.35 L232.50,184.35 L233.00,184.35 L233.50,184.35 L234.00,184.35 L234.50,184.35 L235.00,184.35 L235.50,184.35 L236.00,184.35 L236.50,184.35 L237.00,184.35 L237.50,184.35 L238.00,184.35 L238.50,184.35 L239.00,184.35 L239.50,184.35 L240.00,184.35 L240.50,184.35 L241.00,184.35 L241.50,184.35 L242.00,184.35 L242.50,184.35 L243.00,184.35 L243.50,184.35 L244.00,184.35 L244.50,184.35 L245.00,184.35 L245.50,184.35 L246.00,184.35 L246.50,184.35 L247.00,184.35 L247.50,184.35 L248.00,184.35 L248.50,184.35 L249.00,184.35 L249.50,184.35 L250.00,184.35 L250.50,184.35 L251.00,184.35 L251.50,184.35 L252.00,184.35 L252.50,184.35 L253.00,184.35 L253.50,184.35 L254.00,184.35 L254.50,184.35 L255.00,184.35 L255.50,184.35 L256.00,184.35 L256.50,184.35 L257.00,184.35 L257.50,184.35 L258.00,184.35 L258.50,184.35 L259.00,184.35 L259.50,184.35 L260.00,184.35 L260.50,184.35 L261.00,184.35 L261.50,184.35 L262.00,184.35 L262.50,184.35 L263.00,184.35 L263.50,184.35 L264.00,184.35 L264.50,184.35 L265.00,184.35 L265.50,184.35 L266.00,184.35 L266.50,184.35 L267.00,184.35 L267.50,184.35 L268.00,184.35 L268.50,184.35 L269.00,184.35 L269.50,184.35 L270.00,184.35 L270.50,184.35 L271.00,184.35 L271.50,184.35 L272.00,184.35 L272.50,184.35 L273.00,184.35 L273.50,184.35 L274.00,184.35 L274.50,184.35 L275.00,184.35 L275.50,184.35 L276.00,184.35 L276.50,184.35 L277.00,184.35 L277.50,184.35 L278.00,184.35 L278.50,184.35 L279.00,184.35 L279.50,184.35 L280.00,184.35 L280.50,184.35 L281.00,184.35 L281.50,184.35 L282.00,184.35 L282.50,184.35 L283.00,184.35 L283.50,184.35 L284.00,184.35 L284.50,184.35 L285.00,184.35 L285.50,184.35 L286.00,184.35 L286.50,184.35 L287.00,184.35 L287.50,184.35 L288.00,184.35 L288.50,184.35 L289.00,184.35 L289.50,184.35 L290.00,184.35 L290.50,184.35 L291.00,184.35 L291.50,184.35 L292.00,184.35 L292.50,184.35 L293.00,184.35 L293.50,184.35 L294.00,184.35 L294.50,184.35 L295.00,184.35 L295.50,184.35 L296.00,184.35 L296.50,184.35 L297.00,184.35 L297.50,184.35 L298.00,184.35 L298.50,184.35 L299.00,184.35 L299.50,184.35 L300.00,184.35 L300.50,184.35 L301.00,184.35 L301.50,184.35 L302.00,184.35 L302.50,184.35 L303.00,184.35 L303.50,184.35 L304.00,184.35 L304.50,184.35 L305.00,184.35 L305.50,184.35 L306.00,184.35 L306.50,184.35 L307.00,184.35 L307.50,184.35 L308.00,184.35 L308.50,184.35 L309.00,184.35 L309.50,184.35 L310.00,184.35 L310.50,184.35 L311.00,184.35 L311.50,184.35 L312.00,184.35 L312.50,184.35 L313.00,184.35 L313.50,184.35 L314.00,184.35 L314.50,184.35 L315.00,184.35 L315.50,184.35 L316.00,184.35 L316.50,184.35 L317.00,184.35 L317.50,184.35 L318.00,184.35 L318.50,184.35 L319.00,184.35 L319.50,184.35 L320.00,184.35 L320.50,184.35 L321.00,184.35 L321.50,184.35 L322.00,184.35 L322.50,184.35 L323.00,184.35 L323.50,184.35 L324.00,184.35 L324.50,184.35 L325.00,184.35 L325.50,184.35 L326.00,184.35 L326.50,184.35 L327.00,184.35 L327.50,184.35 L328.00,184.35 L328.50,184.35 L329.00,184.35 L329.50,184.35 L330.00,184.35 L330.50,184.35 L331.00,184.35 L331.50,184.35 L332.00,184.35 L332.50,184.35 L333.00,184.35 L333.50,184.35 L334.00,184.35 L334.50,184.35 L335.00,184.35 L335.50,184.35 L336.00,184.35 L336.50,184.35 L337.00,184.35 L337.50,184.35 L338.00,184.35 L338.50,184.35 L339.00,184.35 L339.50,184.35 L340.00,184.35 L340.50,184.35 L341.00,184.35 L341.50,184.35 L342.00,184.35 L342.50,184.35 L343.00,184.35 L343.50,184.35 L344.00,184.35 L344.50,184.35 L345.00,184.35 L345.50,184.35 L346.00,184.35 L346.50,184.35 L347.00,184.35 L347.50,184.35 L348.00,184.35 L348.50,184.35 L349.00,184.35 L349.50,184.35 L350.00,184.35 L350.50,184.35 L351.00,184.35 L351.50,184.35 L352.00,184.35 L352.50,184.35 L353.00,184.35 L353.50,184.35 L354.00,184.35 L354.50,184.35 L355.00,184.35 L355.50,184.35 L356.00,184.35 L356.50,184.35 L357.00,184.35 L357.50,184.35 L358.00,184.35 L358.50,184.35 L359.00,184.35 L359.50,184.35 L360.00,184.35 L360.50,184.35 L361.00,184.35 L361.50,184.35 L362.00,184.35 L362.50,184.35 L363.00,184.35 L363.50,184.35 L364.00,184.35 L364.50,184.35 L365.00,184.35 L365.50,184.35 L366.00,184.35 L366.50,184.35 L367.00,184.35 L367.50,184.35 L368.00,184.35 L368.50,184.35 L369.00,184.35 L369.50,184.35 L370.00,184.35 L370.50,184.35 L371.00,184.35 L371.50,184.35 L372.00,184.35 L372.50,184.35 L373.00,184.35 L373.50,184.35 L374.00,184.35 L374.50,184.35 L375.00,184.35 L375.50,184.35 L376.00,184.35 L376.50,184.35 L377.00,184.35 L377.50,184.35 L378.00,184.35 L378.50,184.35 L379.00,184.35 L379.50,184.35 L380.00,184.35 L380.50,184.35 L381.00,184.35 L381.50,184.35 L382.00,184.35 L382.50,184.35 L383.00,184.35 L383.50,184.35 L384.00,184.35 L384.50,184.35 L385.00,184.35 L385.50,184.35 L386.00,184.35 L386.50,184.35 L387.00,184.35 L387.50,184.35 L388.00,184.35 L388.50,184.35 L389.00,184.35 L389.50,184.35 L390.00,184.35 L390.50,184.35 L391.00,184.35 L391.50,184.35 L392.00,184.35 L392.50,184.35 L393.00,184.35 L393.50,184.35 L394.00,184.35 L394.50,184.35 L394.50,185.20 Z" fill="#c8802e"/>
<path d="M140.90,100.00 L144.10,100.00 L142.50,97.20 Z" fill="#fff"/>
<path d="M395.40,183.30 L395.40,186.50 L398.20,184.90 Z" fill="#fff"/>
<text x="213.00" y="99.20" font-family="Liberation Mono" font-size="7.4" fill="#cdcdcd" text-anchor="start" font-weight="normal" stroke="#cdcdcd" stroke-width="0.18" >Kernel usage  (1day)</text>
<text x="138.60" y="187.10" font-family="Liberation Mono" font-size="5.5" fill="#cdcdcd" text-anchor="end" font-weight="normal" stroke="#cdcdcd" stroke-width="0.18" >0</text>
<text x="138.60" y="178.64" font-family="Liberation Mono" font-size="5.5" fill="#cdcdcd" text-anchor="end" font-weight="normal" stroke="#cdcdcd" stroke-width="0.18" >10</text>
<text x="138.60" y="170.18" font-family="Liberation Mono" font-size="5.5" fill="#cdcdcd" text-anchor="end" font-weight="normal" stroke="#cdcdcd" stroke-width="0.18" >20</text>
<text x="138.60" y="161.72" font-family="Liberation Mono" font-size="5.5" fill="#cdcdcd" text-anchor="end" font-weight="normal" stroke="#cdcdcd" stroke-width="0.18" >30</text>
<text x="138.60" y="153.26" font-family="Liberation Mono" font-size="5.5" fill="#cdcdcd" text-anchor="end" font-weight="normal" stroke="#cdcdcd" stroke-width="0.18" >40</text>
<text x="138.60" y="144.80" font-family="Liberation Mono" font-size="5.5" fill="#cdcdcd" text-anchor="end" font-weight="normal" stroke="#cdcdcd" stroke-width="0.18" >50</text>
<text x="138.60" y="136.34" font-family="Liberation Mono" font-size="5.5" fill="#cdcdcd" text-anchor="end" font-weight="normal" stroke="#cdcdcd" stroke-width="0.18" >60</text>
<text x="138.60" y="127.88" font-family="Liberation Mono" font-size="5.5" fill="#cdcdcd" text-anchor="end" font-weight="normal" stroke="#cdcdcd" stroke-width="0.18" >70</text>
<text x="138.60" y="119.42" font-family="Liberation Mono" font-size="5.5" fill="#cdcdcd" text-anchor="end" font-weight="normal" stroke="#cdcdcd" stroke-width="0.18" >80</text>
<text x="138.60" y="110.96" font-family="Liberation Mono" font-size="5.5" fill="#cdcdcd" text-anchor="end" font-weight="normal" stroke="#cdcdcd" stroke-width="0.18" >90</text>
<text x="138.60" y="102.50" font-family="Liberation Mono" font-size="5.5" fill="#cdcdcd" text-anchor="end" font-weight="normal" stroke="#cdcdcd" stroke-width="0.18" >100</text>
<text x="110.40" y="142.90" font-family="Liberation Mono" font-size="6.7" fill="#cdcdcd" text-anchor="middle" dominant-baseline="central" stroke="#cdcdcd" stroke-width="0.18" transform="rotate(-90 110.40 142.90)">Percent (%)</text>
<text x="177.00" y="192.40" font-family="Liberation Mono" font-size="5.5" fill="#cdcdcd" text-anchor="middle" font-weight="normal" stroke="#cdcdcd" stroke-width="0.18" >18:00</text>
<text x="240.40" y="192.40" font-family="Liberation Mono" font-size="5.5" fill="#cdcdcd" text-anchor="middle" font-weight="normal" stroke="#cdcdcd" stroke-width="0.18" >00:00</text>
<text x="303.80" y="192.40" font-family="Liberation Mono" font-size="5.5" fill="#cdcdcd" text-anchor="middle" font-weight="normal" stroke="#cdcdcd" stroke-width="0.18" >06:00</text>
<text x="367.20" y="192.40" font-family="Liberation Mono" font-size="5.5" fill="#cdcdcd" text-anchor="middle" font-weight="normal" stroke="#cdcdcd" stroke-width="0.18" >12:00</text>
<text x="405.70" y="119.00" font-family="Liberation Mono" font-size="4.4" fill="#c0c0c0" fill-opacity="0.3" text-anchor="middle" transform="rotate(90 405.70 119.00)" dominant-baseline="middle">RRDTOOL / TOBI OETIKER</text>
<rect x="112.10" y="196.80" width="4.6" height="4.6" fill="#5a5ad5" stroke="#000" stroke-opacity="0.55" stroke-width="0.6"/>
<text x="119.90" y="201.00" font-family="Liberation Mono" font-size="5.5" fill="#cdcdcd" text-anchor="start" font-weight="normal" stroke="#cdcdcd" stroke-width="0.18" >user</text>
<text x="161.10" y="201.00" font-family="Liberation Mono" font-size="5.5" fill="#cdcdcd" text-anchor="start" font-weight="normal" stroke="#cdcdcd" stroke-width="0.18" >Current:</text>
<text x="207.90" y="201.00" font-family="Liberation Mono" font-size="5.5" fill="#cdcdcd" text-anchor="end" font-weight="normal" stroke="#cdcdcd" stroke-width="0.18" >8.5%</text>
<text x="229.50" y="201.00" font-family="Liberation Mono" font-size="5.5" fill="#cdcdcd" text-anchor="start" font-weight="normal" stroke="#cdcdcd" stroke-width="0.18" >Average:</text>
<text x="275.80" y="201.00" font-family="Liberation Mono" font-size="5.5" fill="#cdcdcd" text-anchor="end" font-weight="normal" stroke="#cdcdcd" stroke-width="0.18" >7.4%</text>
<text x="297.70" y="201.00" font-family="Liberation Mono" font-size="5.5" fill="#cdcdcd" text-anchor="start" font-weight="normal" stroke="#cdcdcd" stroke-width="0.18" >Min:</text>
<text x="331.20" y="201.00" font-family="Liberation Mono" font-size="5.5" fill="#cdcdcd" text-anchor="end" font-weight="normal" stroke="#cdcdcd" stroke-width="0.18" >4.3%</text>
<text x="353.10" y="201.00" font-family="Liberation Mono" font-size="5.5" fill="#cdcdcd" text-anchor="start" font-weight="normal" stroke="#cdcdcd" stroke-width="0.18" >Max:</text>
<text x="386.50" y="201.00" font-family="Liberation Mono" font-size="5.5" fill="#cdcdcd" text-anchor="end" font-weight="normal" stroke="#cdcdcd" stroke-width="0.18" >23.0%</text>
<rect x="112.10" y="203.50" width="4.6" height="4.6" fill="#d5d55a" stroke="#000" stroke-opacity="0.55" stroke-width="0.6"/>
<text x="119.90" y="207.70" font-family="Liberation Mono" font-size="5.5" fill="#cdcdcd" text-anchor="start" font-weight="normal" stroke="#cdcdcd" stroke-width="0.18" >nice</text>
<text x="161.10" y="207.70" font-family="Liberation Mono" font-size="5.5" fill="#cdcdcd" text-anchor="start" font-weight="normal" stroke="#cdcdcd" stroke-width="0.18" >Current:</text>
<text x="207.90" y="207.70" font-family="Liberation Mono" font-size="5.5" fill="#cdcdcd" text-anchor="end" font-weight="normal" stroke="#cdcdcd" stroke-width="0.18" >0.0%</text>
<text x="229.50" y="207.70" font-family="Liberation Mono" font-size="5.5" fill="#cdcdcd" text-anchor="start" font-weight="normal" stroke="#cdcdcd" stroke-width="0.18" >Average:</text>
<text x="275.80" y="207.70" font-family="Liberation Mono" font-size="5.5" fill="#cdcdcd" text-anchor="end" font-weight="normal" stroke="#cdcdcd" stroke-width="0.18" >0.0%</text>
<text x="297.70" y="207.70" font-family="Liberation Mono" font-size="5.5" fill="#cdcdcd" text-anchor="start" font-weight="normal" stroke="#cdcdcd" stroke-width="0.18" >Min:</text>
<text x="331.20" y="207.70" font-family="Liberation Mono" font-size="5.5" fill="#cdcdcd" text-anchor="end" font-weight="normal" stroke="#cdcdcd" stroke-width="0.18" >0.0%</text>
<text x="353.10" y="207.70" font-family="Liberation Mono" font-size="5.5" fill="#cdcdcd" text-anchor="start" font-weight="normal" stroke="#cdcdcd" stroke-width="0.18" >Max:</text>
<text x="386.50" y="207.70" font-family="Liberation Mono" font-size="5.5" fill="#cdcdcd" text-anchor="end" font-weight="normal" stroke="#cdcdcd" stroke-width="0.18" >0.1%</text>
<rect x="112.10" y="210.20" width="4.6" height="4.6" fill="#5ad5d5" stroke="#000" stroke-opacity="0.55" stroke-width="0.6"/>
<text x="119.90" y="214.40" font-family="Liberation Mono" font-size="5.5" fill="#cdcdcd" text-anchor="start" font-weight="normal" stroke="#cdcdcd" stroke-width="0.18" >system</text>
<text x="161.10" y="214.40" font-family="Liberation Mono" font-size="5.5" fill="#cdcdcd" text-anchor="start" font-weight="normal" stroke="#cdcdcd" stroke-width="0.18" >Current:</text>
<text x="207.90" y="214.40" font-family="Liberation Mono" font-size="5.5" fill="#cdcdcd" text-anchor="end" font-weight="normal" stroke="#cdcdcd" stroke-width="0.18" >3.1%</text>
<text x="229.50" y="214.40" font-family="Liberation Mono" font-size="5.5" fill="#cdcdcd" text-anchor="start" font-weight="normal" stroke="#cdcdcd" stroke-width="0.18" >Average:</text>
<text x="275.80" y="214.40" font-family="Liberation Mono" font-size="5.5" fill="#cdcdcd" text-anchor="end" font-weight="normal" stroke="#cdcdcd" stroke-width="0.18" >2.5%</text>
<text x="297.70" y="214.40" font-family="Liberation Mono" font-size="5.5" fill="#cdcdcd" text-anchor="start" font-weight="normal" stroke="#cdcdcd" stroke-width="0.18" >Min:</text>
<text x="331.20" y="214.40" font-family="Liberation Mono" font-size="5.5" fill="#cdcdcd" text-anchor="end" font-weight="normal" stroke="#cdcdcd" stroke-width="0.18" >1.7%</text>
<text x="353.10" y="214.40" font-family="Liberation Mono" font-size="5.5" fill="#cdcdcd" text-anchor="start" font-weight="normal" stroke="#cdcdcd" stroke-width="0.18" >Max:</text>
<text x="386.50" y="214.40" font-family="Liberation Mono" font-size="5.5" fill="#cdcdcd" text-anchor="end" font-weight="normal" stroke="#cdcdcd" stroke-width="0.18" >5.8%</text>
<rect x="112.10" y="216.90" width="4.6" height="4.6" fill="#d55ad5" stroke="#000" stroke-opacity="0.55" stroke-width="0.6"/>
<text x="119.90" y="221.10" font-family="Liberation Mono" font-size="5.5" fill="#cdcdcd" text-anchor="start" font-weight="normal" stroke="#cdcdcd" stroke-width="0.18" >I/O wait</text>
<text x="161.10" y="221.10" font-family="Liberation Mono" font-size="5.5" fill="#cdcdcd" text-anchor="start" font-weight="normal" stroke="#cdcdcd" stroke-width="0.18" >Current:</text>
<text x="207.90" y="221.10" font-family="Liberation Mono" font-size="5.5" fill="#cdcdcd" text-anchor="end" font-weight="normal" stroke="#cdcdcd" stroke-width="0.18" >0.1%</text>
<text x="229.50" y="221.10" font-family="Liberation Mono" font-size="5.5" fill="#cdcdcd" text-anchor="start" font-weight="normal" stroke="#cdcdcd" stroke-width="0.18" >Average:</text>
<text x="275.80" y="221.10" font-family="Liberation Mono" font-size="5.5" fill="#cdcdcd" text-anchor="end" font-weight="normal" stroke="#cdcdcd" stroke-width="0.18" >0.1%</text>
<text x="297.70" y="221.10" font-family="Liberation Mono" font-size="5.5" fill="#cdcdcd" text-anchor="start" font-weight="normal" stroke="#cdcdcd" stroke-width="0.18" >Min:</text>
<text x="331.20" y="221.10" font-family="Liberation Mono" font-size="5.5" fill="#cdcdcd" text-anchor="end" font-weight="normal" stroke="#cdcdcd" stroke-width="0.18" >0.0%</text>
<text x="353.10" y="221.10" font-family="Liberation Mono" font-size="5.5" fill="#cdcdcd" text-anchor="start" font-weight="normal" stroke="#cdcdcd" stroke-width="0.18" >Max:</text>
<text x="386.50" y="221.10" font-family="Liberation Mono" font-size="5.5" fill="#cdcdcd" text-anchor="end" font-weight="normal" stroke="#cdcdcd" stroke-width="0.18" >1.1%</text>
<rect x="112.10" y="223.60" width="4.6" height="4.6" fill="#8b8b8b" stroke="#000" stroke-opacity="0.55" stroke-width="0.6"/>
<text x="119.90" y="227.80" font-family="Liberation Mono" font-size="5.5" fill="#cdcdcd" text-anchor="start" font-weight="normal" stroke="#cdcdcd" stroke-width="0.18" >IRQ</text>
<text x="161.10" y="227.80" font-family="Liberation Mono" font-size="5.5" fill="#cdcdcd" text-anchor="start" font-weight="normal" stroke="#cdcdcd" stroke-width="0.18" >Current:</text>
<text x="207.90" y="227.80" font-family="Liberation Mono" font-size="5.5" fill="#cdcdcd" text-anchor="end" font-weight="normal" stroke="#cdcdcd" stroke-width="0.18" >0.0%</text>
<text x="229.50" y="227.80" font-family="Liberation Mono" font-size="5.5" fill="#cdcdcd" text-anchor="start" font-weight="normal" stroke="#cdcdcd" stroke-width="0.18" >Average:</text>
<text x="275.80" y="227.80" font-family="Liberation Mono" font-size="5.5" fill="#cdcdcd" text-anchor="end" font-weight="normal" stroke="#cdcdcd" stroke-width="0.18" >0.0%</text>
<text x="297.70" y="227.80" font-family="Liberation Mono" font-size="5.5" fill="#cdcdcd" text-anchor="start" font-weight="normal" stroke="#cdcdcd" stroke-width="0.18" >Min:</text>
<text x="331.20" y="227.80" font-family="Liberation Mono" font-size="5.5" fill="#cdcdcd" text-anchor="end" font-weight="normal" stroke="#cdcdcd" stroke-width="0.18" >0.0%</text>
<text x="353.10" y="227.80" font-family="Liberation Mono" font-size="5.5" fill="#cdcdcd" text-anchor="start" font-weight="normal" stroke="#cdcdcd" stroke-width="0.18" >Max:</text>
<text x="386.50" y="227.80" font-family="Liberation Mono" font-size="5.5" fill="#cdcdcd" text-anchor="end" font-weight="normal" stroke="#cdcdcd" stroke-width="0.18" >0.0%</text>
<rect x="112.10" y="230.30" width="4.6" height="4.6" fill="#cc9250" stroke="#000" stroke-opacity="0.55" stroke-width="0.6"/>
<text x="119.90" y="234.50" font-family="Liberation Mono" font-size="5.5" fill="#cdcdcd" text-anchor="start" font-weight="normal" stroke="#cdcdcd" stroke-width="0.18" >softIRQ</text>
<text x="161.10" y="234.50" font-family="Liberation Mono" font-size="5.5" fill="#cdcdcd" text-anchor="start" font-weight="normal" stroke="#cdcdcd" stroke-width="0.18" >Current:</text>
<text x="207.90" y="234.50" font-family="Liberation Mono" font-size="5.5" fill="#cdcdcd" text-anchor="end" font-weight="normal" stroke="#cdcdcd" stroke-width="0.18" >2.2%</text>
<text x="229.50" y="234.50" font-family="Liberation Mono" font-size="5.5" fill="#cdcdcd" text-anchor="start" font-weight="normal" stroke="#cdcdcd" stroke-width="0.18" >Average:</text>
<text x="275.80" y="234.50" font-family="Liberation Mono" font-size="5.5" fill="#cdcdcd" text-anchor="end" font-weight="normal" stroke="#cdcdcd" stroke-width="0.18" >2.1%</text>
<text x="297.70" y="234.50" font-family="Liberation Mono" font-size="5.5" fill="#cdcdcd" text-anchor="start" font-weight="normal" stroke="#cdcdcd" stroke-width="0.18" >Min:</text>
<text x="331.20" y="234.50" font-family="Liberation Mono" font-size="5.5" fill="#cdcdcd" text-anchor="end" font-weight="normal" stroke="#cdcdcd" stroke-width="0.18" >1.2%</text>
<text x="353.10" y="234.50" font-family="Liberation Mono" font-size="5.5" fill="#cdcdcd" text-anchor="start" font-weight="normal" stroke="#cdcdcd" stroke-width="0.18" >Max:</text>
<text x="386.50" y="234.50" font-family="Liberation Mono" font-size="5.5" fill="#cdcdcd" text-anchor="end" font-weight="normal" stroke="#cdcdcd" stroke-width="0.18" >2.6%</text>
<rect x="112.10" y="237.00" width="4.6" height="4.6" fill="#5ad55a" stroke="#000" stroke-opacity="0.55" stroke-width="0.6"/>
<text x="119.90" y="241.20" font-family="Liberation Mono" font-size="5.5" fill="#cdcdcd" text-anchor="start" font-weight="normal" stroke="#cdcdcd" stroke-width="0.18" >steal</text>
<text x="161.10" y="241.20" font-family="Liberation Mono" font-size="5.5" fill="#cdcdcd" text-anchor="start" font-weight="normal" stroke="#cdcdcd" stroke-width="0.18" >Current:</text>
<text x="207.90" y="241.20" font-family="Liberation Mono" font-size="5.5" fill="#cdcdcd" text-anchor="end" font-weight="normal" stroke="#cdcdcd" stroke-width="0.18" >0.0%</text>
<text x="229.50" y="241.20" font-family="Liberation Mono" font-size="5.5" fill="#cdcdcd" text-anchor="start" font-weight="normal" stroke="#cdcdcd" stroke-width="0.18" >Average:</text>
<text x="275.80" y="241.20" font-family="Liberation Mono" font-size="5.5" fill="#cdcdcd" text-anchor="end" font-weight="normal" stroke="#cdcdcd" stroke-width="0.18" >0.0%</text>
<text x="297.70" y="241.20" font-family="Liberation Mono" font-size="5.5" fill="#cdcdcd" text-anchor="start" font-weight="normal" stroke="#cdcdcd" stroke-width="0.18" >Min:</text>
<text x="331.20" y="241.20" font-family="Liberation Mono" font-size="5.5" fill="#cdcdcd" text-anchor="end" font-weight="normal" stroke="#cdcdcd" stroke-width="0.18" >0.0%</text>
<text x="353.10" y="241.20" font-family="Liberation Mono" font-size="5.5" fill="#cdcdcd" text-anchor="start" font-weight="normal" stroke="#cdcdcd" stroke-width="0.18" >Max:</text>
<text x="386.50" y="241.20" font-family="Liberation Mono" font-size="5.5" fill="#cdcdcd" text-anchor="end" font-weight="normal" stroke="#cdcdcd" stroke-width="0.18" >0.0%</text>
<rect x="112.10" y="243.70" width="4.6" height="4.6" fill="#5a8b5a" stroke="#000" stroke-opacity="0.55" stroke-width="0.6"/>
<text x="119.90" y="247.90" font-family="Liberation Mono" font-size="5.5" fill="#cdcdcd" text-anchor="start" font-weight="normal" stroke="#cdcdcd" stroke-width="0.18" >guest</text>
<text x="161.10" y="247.90" font-family="Liberation Mono" font-size="5.5" fill="#cdcdcd" text-anchor="start" font-weight="normal" stroke="#cdcdcd" stroke-width="0.18" >Current:</text>
<text x="207.90" y="247.90" font-family="Liberation Mono" font-size="5.5" fill="#cdcdcd" text-anchor="end" font-weight="normal" stroke="#cdcdcd" stroke-width="0.18" >0.0%</text>
<text x="229.50" y="247.90" font-family="Liberation Mono" font-size="5.5" fill="#cdcdcd" text-anchor="start" font-weight="normal" stroke="#cdcdcd" stroke-width="0.18" >Average:</text>
<text x="275.80" y="247.90" font-family="Liberation Mono" font-size="5.5" fill="#cdcdcd" text-anchor="end" font-weight="normal" stroke="#cdcdcd" stroke-width="0.18" >0.0%</text>
<text x="297.70" y="247.90" font-family="Liberation Mono" font-size="5.5" fill="#cdcdcd" text-anchor="start" font-weight="normal" stroke="#cdcdcd" stroke-width="0.18" >Min:</text>
<text x="331.20" y="247.90" font-family="Liberation Mono" font-size="5.5" fill="#cdcdcd" text-anchor="end" font-weight="normal" stroke="#cdcdcd" stroke-width="0.18" >0.0%</text>
<text x="353.10" y="247.90" font-family="Liberation Mono" font-size="5.5" fill="#cdcdcd" text-anchor="start" font-weight="normal" stroke="#cdcdcd" stroke-width="0.18" >Max:</text>
<text x="386.50" y="247.90" font-family="Liberation Mono" font-size="5.5" fill="#cdcdcd" text-anchor="end" font-weight="normal" stroke="#cdcdcd" stroke-width="0.18" >0.0%</text>
<rect x="417.00" y="86.20" width="162.20" height="76.60" fill="#131313" />
<rect x="452.50" y="98.60" width="111.50" height="37.60" fill="#000" />
<path d="M458.13,98.60V136.20 M476.87,98.60V136.20 M486.23,98.60V136.20 M504.97,98.60V136.20 M514.33,98.60V136.20 M533.07,98.60V136.20 M542.43,98.60V136.20 M561.17,98.60V136.20 M452.50,132.58H564.00 M452.50,128.96H564.00 M452.50,125.34H564.00 M452.50,121.72H564.00 M452.50,114.48H564.00 M452.50,110.86H564.00 M452.50,107.24H564.00 M452.50,103.62H564.00" stroke="#b0b090" stroke-opacity="0.090" stroke-width="0.6" fill="none"/>
<path d="M467.50,98.60V136.20 M495.60,98.60V136.20 M523.70,98.60V136.20 M551.80,98.60V136.20 M452.50,118.10H564.00 M452.50,100.00H564.00" stroke="#b0c0b0" stroke-opacity="0.144" stroke-width="0.7" fill="none"/>
<path d="M452.50,136.20 L452.50,116.40 L453.00,112.20 L453.50,108.00 L454.00,107.19 L454.50,106.39 L455.00,105.58 L455.50,105.58 L456.00,106.79 L456.50,108.00 L457.00,111.75 L457.50,115.52 L458.00,119.34 L458.50,120.39 L459.00,120.76 L459.50,121.13 L460.00,121.50 L460.50,121.55 L461.00,121.60 L461.50,121.65 L462.00,121.70 L462.50,121.75 L463.00,121.80 L463.50,121.85 L464.00,121.90 L464.50,121.95 L465.00,122.00 L465.50,122.06 L466.00,122.11 L466.50,122.17 L467.00,122.23 L467.50,122.28 L468.00,122.34 L468.50,122.40 L469.00,122.45 L469.50,123.20 L470.00,126.70 L470.50,126.70 L471.00,126.70 L471.50,126.70 L472.00,126.69 L472.50,126.69 L473.00,126.69 L473.50,126.69 L474.00,126.69 L474.50,126.69 L475.00,126.68 L475.50,126.68 L476.00,126.68 L476.50,126.68 L477.00,126.68 L477.50,126.67 L478.00,126.67 L478.50,126.67 L479.00,126.67 L479.50,126.67 L480.00,126.67 L480.50,126.67 L481.00,126.66 L481.50,126.66 L482.00,126.66 L482.50,126.66 L483.00,126.66 L483.50,126.66 L484.00,126.65 L484.50,126.65 L485.00,126.65 L485.50,126.65 L486.00,126.65 L486.50,126.64 L487.00,126.64 L487.50,126.64 L488.00,126.64 L488.50,126.64 L489.00,126.64 L489.50,126.64 L490.00,126.63 L490.50,126.63 L491.00,126.63 L491.50,126.63 L492.00,126.63 L492.50,126.62 L493.00,126.62 L493.50,126.62 L494.00,126.62 L494.50,126.62 L495.00,126.62 L495.50,126.61 L496.00,126.61 L496.50,126.61 L497.00,126.61 L497.50,126.61 L498.00,126.61 L498.50,126.61 L499.00,126.60 L499.50,126.60 L500.00,126.60 L500.50,126.60 L501.00,126.60 L501.50,126.59 L502.00,126.59 L502.50,126.59 L503.00,126.59 L503.50,126.59 L504.00,126.59 L504.50,126.59 L505.00,126.58 L505.50,126.58 L506.00,126.58 L506.50,126.58 L507.00,126.58 L507.50,126.58 L508.00,126.57 L508.50,126.57 L509.00,126.57 L509.50,126.57 L510.00,126.57 L510.50,126.56 L511.00,126.56 L511.50,126.56 L512.00,126.56 L512.50,126.56 L513.00,126.56 L513.50,126.56 L514.00,126.55 L514.50,126.55 L515.00,126.55 L515.50,126.55 L516.00,126.55 L516.50,126.55 L517.00,126.54 L517.50,126.54 L518.00,126.54 L518.50,126.54 L519.00,126.54 L519.50,126.53 L520.00,126.53 L520.50,126.53 L521.00,126.53 L521.50,126.53 L522.00,126.53 L522.50,126.53 L523.00,126.52 L523.50,126.52 L524.00,126.52 L524.50,126.52 L525.00,126.52 L525.50,126.52 L526.00,126.51 L526.50,126.51 L527.00,126.51 L527.50,126.51 L528.00,126.51 L528.50,126.50 L529.00,126.50 L529.50,126.50 L530.00,126.50 L530.50,125.25 L531.00,124.00 L531.50,125.25 L532.00,126.50 L532.50,126.49 L533.00,126.48 L533.50,126.47 L534.00,126.46 L534.50,126.45 L535.00,126.44 L535.50,126.43 L536.00,126.42 L536.50,126.41 L537.00,126.39 L537.50,126.38 L538.00,126.37 L538.50,126.36 L539.00,126.35 L539.50,126.34 L540.00,126.33 L540.50,126.32 L541.00,126.31 L541.50,126.30 L542.00,121.50 L542.50,124.31 L543.00,125.92 L543.50,125.71 L544.00,125.50 L544.50,125.29 L545.00,125.08 L545.50,123.33 L546.00,120.56 L546.50,117.78 L547.00,115.00 L547.50,113.92 L548.00,112.85 L548.50,111.78 L549.00,110.70 L549.50,112.47 L550.00,114.23 L550.50,116.00 L551.00,116.45 L551.50,116.91 L552.00,117.36 L552.50,117.82 L553.00,117.48 L553.50,116.61 L554.00,115.74 L554.50,114.87 L555.00,114.00 L555.50,113.31 L556.00,112.62 L556.50,111.94 L557.00,111.25 L557.50,111.03 L558.00,112.69 L558.50,114.34 L559.00,116.00 L559.50,115.86 L560.00,115.73 L560.50,115.59 L561.00,115.45 L561.50,116.23 L562.00,117.62 L562.50,119.00 L563.00,118.73 L563.50,118.47 L564.00,118.20 L564.00,136.20 Z" fill="#44aaee"/>
<path d="M450.90,98.40 L454.10,98.40 L452.50,95.60 Z" fill="#fff"/>
<path d="M564.80,134.60 L564.80,137.80 L567.60,136.20 Z" fill="#fff"/>
<text x="448.40" y="102.10" font-family="Liberation Mono" font-size="5.5" fill="#cdcdcd" text-anchor="end" font-weight="normal" stroke="#cdcdcd" stroke-width="0.18" >20 k</text>
<text x="448.40" y="120.20" font-family="Liberation Mono" font-size="5.5" fill="#cdcdcd" text-anchor="end" font-weight="normal" stroke="#cdcdcd" stroke-width="0.18" >10 k</text>
<text x="439.20" y="138.30" font-family="Liberation Mono" font-size="5.5" fill="#cdcdcd" text-anchor="middle" font-weight="normal" stroke="#cdcdcd" stroke-width="0.18" >0</text>
<text x="431.50" y="96.90" font-family="Liberation Mono" font-size="6.5" fill="#cdcdcd" text-anchor="start" font-weight="normal" stroke="#cdcdcd" stroke-width="0.18" >Context switches and forks  (1day)</text>
<text x="421.20" y="118.00" font-family="Liberation Mono" font-size="5.6" fill="#cdcdcd" text-anchor="middle" dominant-baseline="central" stroke="#cdcdcd" stroke-width="0.18" transform="rotate(-90 421.20 118.00)">CS &amp; forks/s</text>
<text x="467.50" y="144.00" font-family="Liberation Mono" font-size="5.5" fill="#cdcdcd" text-anchor="middle" font-weight="normal" stroke="#cdcdcd" stroke-width="0.18" >18:00</text>
<text x="495.60" y="144.00" font-family="Liberation Mono" font-size="5.5" fill="#cdcdcd" text-anchor="middle" font-weight="normal" stroke="#cdcdcd" stroke-width="0.18" >00:00</text>
<text x="523.70" y="144.00" font-family="Liberation Mono" font-size="5.5" fill="#cdcdcd" text-anchor="middle" font-weight="normal" stroke="#cdcdcd" stroke-width="0.18" >06:00</text>
<text x="551.80" y="144.00" font-family="Liberation Mono" font-size="5.5" fill="#cdcdcd" text-anchor="middle" font-weight="normal" stroke="#cdcdcd" stroke-width="0.18" >12:00</text>
<text x="575.60" y="119.00" font-family="Liberation Mono" font-size="4.4" fill="#c0c0c0" fill-opacity="0.3" text-anchor="middle" transform="rotate(90 575.60 119.00)" dominant-baseline="middle">RRDTOOL / TOBI OETIKER</text>
<rect x="423.10" y="147.60" width="4.6" height="4.6" fill="#5aa4d5" stroke="#000" stroke-opacity="0.55" stroke-width="0.6"/>
<text x="430.20" y="151.80" font-family="Liberation Mono" font-size="5.5" fill="#cdcdcd" text-anchor="start" font-weight="normal" stroke="#cdcdcd" stroke-width="0.18" >Context switches</text>
<text x="508.80" y="151.80" font-family="Liberation Mono" font-size="5.5" fill="#cdcdcd" text-anchor="start" font-weight="normal" stroke="#cdcdcd" stroke-width="0.18" >Current:</text>
<text x="558.80" y="151.80" font-family="Liberation Mono" font-size="5.5" fill="#cdcdcd" text-anchor="end" font-weight="normal" stroke="#cdcdcd" stroke-width="0.18" >10407</text>
<rect x="423.10" y="154.60" width="4.6" height="4.6" fill="#5a5ad5" stroke="#000" stroke-opacity="0.55" stroke-width="0.6"/>
<text x="430.20" y="158.80" font-family="Liberation Mono" font-size="5.5" fill="#cdcdcd" text-anchor="start" font-weight="normal" stroke="#cdcdcd" stroke-width="0.18" >Forks</text>
<text x="508.80" y="158.80" font-family="Liberation Mono" font-size="5.5" fill="#cdcdcd" text-anchor="start" font-weight="normal" stroke="#cdcdcd" stroke-width="0.18" >Current:</text>
<text x="558.80" y="158.80" font-family="Liberation Mono" font-size="5.5" fill="#cdcdcd" text-anchor="end" font-weight="normal" stroke="#cdcdcd" stroke-width="0.18" >4</text>
<rect x="415.30" y="162.70" width="165.20" height="2.30" fill="#555555" />
<rect x="417.00" y="165.00" width="162.20" height="82.80" fill="#131313" />
<rect x="452.50" y="178.20" width="111.50" height="36.20" fill="#000" />
<path d="M458.13,178.20V214.40 M476.87,178.20V214.40 M486.23,178.20V214.40 M504.97,178.20V214.40 M514.33,178.20V214.40 M533.07,178.20V214.40 M542.43,178.20V214.40 M561.17,178.20V214.40 M452.50,210.78H564.00 M452.50,207.16H564.00 M452.50,203.54H564.00 M452.50,199.92H564.00 M452.50,192.68H564.00 M452.50,189.06H564.00 M452.50,185.44H564.00 M452.50,181.82H564.00" stroke="#b0b090" stroke-opacity="0.090" stroke-width="0.6" fill="none"/>
<path d="M467.50,178.20V214.40 M495.60,178.20V214.40 M523.70,178.20V214.40 M551.80,178.20V214.40 M452.50,196.30H564.00 M452.50,178.20H564.00" stroke="#b0c0b0" stroke-opacity="0.144" stroke-width="0.7" fill="none"/>
<path d="M452.50,214.40 L452.50,191.70 L453.00,191.70 L453.50,191.70 L454.00,191.70 L454.50,191.70 L455.00,191.70 L455.50,191.70 L456.00,191.70 L456.50,191.30 L457.00,190.90 L457.50,190.49 L458.00,190.09 L458.50,189.69 L459.00,189.29 L459.50,188.88 L460.00,188.48 L460.50,188.08 L461.00,186.65 L461.50,184.97 L462.00,183.29 L462.50,181.61 L463.00,180.60 L463.50,180.60 L464.00,180.60 L464.50,180.60 L465.00,180.60 L465.50,180.60 L466.00,180.60 L466.50,180.60 L467.00,180.60 L467.50,180.60 L468.00,180.60 L468.50,180.60 L469.00,180.60 L469.50,180.60 L470.00,180.60 L470.50,180.60 L471.00,180.60 L471.50,180.60 L472.00,180.60 L472.50,180.60 L473.00,180.60 L473.50,180.60 L474.00,180.60 L474.50,180.60 L475.00,180.60 L475.50,180.60 L476.00,180.60 L476.50,180.60 L477.00,180.60 L477.50,180.60 L478.00,180.60 L478.50,180.60 L479.00,180.60 L479.50,180.60 L480.00,180.60 L480.50,180.60 L481.00,180.60 L481.50,180.60 L482.00,180.60 L482.50,180.60 L483.00,180.60 L483.50,180.60 L484.00,180.60 L484.50,180.60 L485.00,180.60 L485.50,180.60 L486.00,180.60 L486.50,180.60 L487.00,180.60 L487.50,180.60 L488.00,180.60 L488.50,180.60 L489.00,180.60 L489.50,180.60 L490.00,180.60 L490.50,180.60 L491.00,180.60 L491.50,180.60 L492.00,180.60 L492.50,180.60 L493.00,180.60 L493.50,180.60 L494.00,180.60 L494.50,180.60 L495.00,180.60 L495.50,180.60 L496.00,180.60 L496.50,180.60 L497.00,180.60 L497.50,180.60 L498.00,180.60 L498.50,180.60 L499.00,180.60 L499.50,180.60 L500.00,180.60 L500.50,180.60 L501.00,180.60 L501.50,180.60 L502.00,180.60 L502.50,180.60 L503.00,180.60 L503.50,180.60 L504.00,180.60 L504.50,180.60 L505.00,180.60 L505.50,180.60 L506.00,180.60 L506.50,180.60 L507.00,180.60 L507.50,180.60 L508.00,180.60 L508.50,180.60 L509.00,180.60 L509.50,180.60 L510.00,180.60 L510.50,180.60 L511.00,180.60 L511.50,180.60 L512.00,180.60 L512.50,180.60 L513.00,180.60 L513.50,180.60 L514.00,180.60 L514.50,180.60 L515.00,180.60 L515.50,180.60 L516.00,180.60 L516.50,180.60 L517.00,180.60 L517.50,180.60 L518.00,180.60 L518.50,180.60 L519.00,180.60 L519.50,180.60 L520.00,180.60 L520.50,180.60 L521.00,180.60 L521.50,180.60 L522.00,180.60 L522.50,180.60 L523.00,180.60 L523.50,180.60 L524.00,180.60 L524.50,180.60 L525.00,180.60 L525.50,180.60 L526.00,180.60 L526.50,180.60 L527.00,180.60 L527.50,180.60 L528.00,180.60 L528.50,180.60 L529.00,180.60 L529.50,180.60 L530.00,180.60 L530.50,180.60 L531.00,180.60 L531.50,180.60 L532.00,180.60 L532.50,180.60 L533.00,180.60 L533.50,180.60 L534.00,180.60 L534.50,180.60 L535.00,180.60 L535.50,180.60 L536.00,180.60 L536.50,180.60 L537.00,180.60 L537.50,180.60 L538.00,180.60 L538.50,180.60 L539.00,180.60 L539.50,180.60 L540.00,180.60 L540.50,180.60 L541.00,180.60 L541.50,180.60 L542.00,181.99 L542.50,183.39 L543.00,184.78 L543.50,186.17 L544.00,187.56 L544.50,188.40 L545.00,188.40 L545.50,188.40 L546.00,188.40 L546.50,188.40 L547.00,188.40 L547.50,188.40 L548.00,188.40 L548.50,188.40 L549.00,188.40 L549.50,188.40 L550.00,188.40 L550.50,188.40 L551.00,188.40 L551.50,188.40 L552.00,188.69 L552.50,189.40 L553.00,189.40 L553.50,189.40 L554.00,189.40 L554.50,189.40 L555.00,189.40 L555.50,189.40 L556.00,189.40 L556.50,189.40 L557.00,189.40 L557.50,189.40 L558.00,189.40 L558.50,189.40 L559.00,189.40 L559.50,189.40 L560.00,189.40 L560.50,189.40 L561.00,189.40 L561.50,189.40 L562.00,189.40 L562.50,189.40 L563.00,189.40 L563.50,189.40 L564.00,189.40 L564.00,214.40 Z" fill="#4444ee"/>
<path d="M452.50,214.40 L452.50,195.00 L453.00,195.00 L453.50,195.00 L454.00,195.00 L454.50,195.00 L455.00,195.00 L455.50,195.00 L456.00,195.00 L456.50,195.00 L457.00,195.00 L457.50,195.00 L458.00,194.80 L458.50,194.30 L459.00,193.80 L459.50,193.30 L460.00,192.80 L460.50,192.30 L461.00,191.80 L461.50,191.30 L462.00,191.10 L462.50,191.10 L463.00,191.10 L463.50,191.10 L464.00,191.10 L464.50,191.10 L465.00,191.10 L465.50,191.10 L466.00,191.10 L466.50,191.10 L467.00,191.10 L467.50,191.10 L468.00,191.10 L468.50,191.10 L469.00,191.10 L469.50,191.10 L470.00,191.10 L470.50,191.10 L471.00,191.10 L471.50,191.10 L472.00,191.10 L472.50,191.10 L473.00,191.10 L473.50,191.10 L474.00,191.10 L474.50,191.10 L475.00,191.10 L475.50,191.10 L476.00,191.10 L476.50,191.10 L477.00,191.10 L477.50,191.10 L478.00,191.10 L478.50,191.10 L479.00,191.10 L479.50,191.10 L480.00,191.11 L480.50,191.14 L481.00,191.16 L481.50,191.18 L482.00,191.20 L482.50,191.22 L483.00,191.25 L483.50,191.27 L484.00,191.29 L484.50,191.31 L485.00,191.33 L485.50,191.36 L486.00,191.38 L486.50,191.40 L487.00,191.42 L487.50,191.45 L488.00,191.47 L488.50,191.49 L489.00,191.51 L489.50,191.53 L490.00,191.56 L490.50,191.58 L491.00,191.60 L491.50,191.62 L492.00,191.64 L492.50,191.67 L493.00,191.69 L493.50,191.71 L494.00,191.73 L494.50,191.76 L495.00,191.78 L495.50,191.80 L496.00,192.37 L496.50,192.60 L497.00,192.61 L497.50,192.62 L498.00,192.62 L498.50,192.63 L499.00,192.63 L499.50,192.64 L500.00,192.64 L500.50,192.65 L501.00,192.66 L501.50,192.66 L502.00,192.67 L502.50,192.67 L503.00,192.68 L503.50,192.69 L504.00,192.69 L504.50,192.70 L505.00,192.70 L505.50,192.71 L506.00,192.72 L506.50,192.72 L507.00,192.73 L507.50,192.73 L508.00,192.74 L508.50,192.75 L509.00,192.75 L509.50,192.76 L510.00,192.76 L510.50,192.77 L511.00,192.78 L511.50,192.78 L512.00,192.79 L512.50,192.79 L513.00,192.80 L513.50,192.80 L514.00,192.81 L514.50,192.82 L515.00,192.82 L515.50,192.83 L516.00,192.83 L516.50,192.84 L517.00,192.85 L517.50,192.85 L518.00,192.86 L518.50,192.86 L519.00,192.87 L519.50,192.88 L520.00,192.88 L520.50,192.89 L521.00,192.89 L521.50,192.90 L522.00,192.91 L522.50,192.91 L523.00,192.92 L523.50,192.92 L524.00,192.93 L524.50,192.93 L525.00,192.94 L525.50,192.95 L526.00,192.95 L526.50,192.96 L527.00,192.96 L527.50,192.97 L528.00,192.98 L528.50,192.98 L529.00,192.99 L529.50,192.99 L530.00,193.00 L530.50,193.83 L531.00,194.67 L531.50,195.50 L532.00,195.48 L532.50,195.47 L533.00,195.45 L533.50,195.43 L534.00,195.42 L534.50,195.40 L535.00,195.38 L535.50,195.36 L536.00,195.35 L536.50,195.33 L537.00,195.31 L537.50,195.30 L538.00,195.28 L538.50,195.26 L539.00,195.25 L539.50,195.23 L540.00,195.21 L540.50,195.20 L541.00,195.18 L541.50,195.16 L542.00,195.14 L542.50,195.13 L543.00,195.11 L543.50,195.09 L544.00,195.08 L544.50,195.06 L545.00,195.04 L545.50,195.03 L546.00,195.01 L546.50,194.99 L547.00,194.98 L547.50,194.96 L548.00,194.94 L548.50,194.92 L549.00,194.91 L549.50,194.89 L550.00,194.87 L550.50,194.86 L551.00,194.84 L551.50,194.82 L552.00,194.81 L552.50,194.79 L553.00,194.77 L553.50,194.76 L554.00,194.74 L554.50,194.72 L555.00,194.70 L555.50,194.69 L556.00,194.67 L556.50,194.65 L557.00,194.64 L557.50,194.62 L558.00,194.60 L558.50,194.59 L559.00,194.57 L559.50,194.55 L560.00,194.54 L560.50,194.52 L561.00,194.50 L561.50,194.48 L562.00,194.47 L562.50,194.45 L563.00,194.43 L563.50,194.42 L564.00,194.40 L564.00,214.40 Z" fill="#eeee44"/>
<path d="M453.45,178.20V214.40 M458.13,178.20V214.40 M462.82,178.20V214.40 M467.50,178.20V214.40 M472.18,178.20V214.40 M476.87,178.20V214.40 M481.55,178.20V214.40 M486.23,178.20V214.40 M490.92,178.20V214.40 M495.60,178.20V214.40 M500.28,178.20V214.40 M504.97,178.20V214.40 M509.65,178.20V214.40 M514.33,178.20V214.40 M519.02,178.20V214.40 M523.70,178.20V214.40 M528.38,178.20V214.40 M533.07,178.20V214.40 M537.75,178.20V214.40 M542.43,178.20V214.40 M547.12,178.20V214.40 M551.80,178.20V214.40 M556.48,178.20V214.40 M561.17,178.20V214.40 M452.50,210.78H564.00 M452.50,207.16H564.00 M452.50,203.54H564.00 M452.50,199.92H564.00 M452.50,196.30H564.00 M452.50,192.68H564.00 M452.50,189.06H564.00 M452.50,185.44H564.00 M452.50,181.82H564.00" stroke="#606010" stroke-opacity="0.22" stroke-width="0.5" fill="none"/>
<path d="M450.90,177.00 L454.10,177.00 L452.50,174.20 Z" fill="#fff"/>
<path d="M564.80,212.80 L564.80,216.00 L567.60,214.40 Z" fill="#fff"/>
<text x="447.80" y="180.10" font-family="Liberation Mono" font-size="5.5" fill="#cdcdcd" text-anchor="end" font-weight="normal" stroke="#cdcdcd" stroke-width="0.18" >100</text>
<text x="447.80" y="198.90" font-family="Liberation Mono" font-size="5.5" fill="#cdcdcd" text-anchor="end" font-weight="normal" stroke="#cdcdcd" stroke-width="0.18" >50</text>
<text x="448.00" y="216.90" font-family="Liberation Mono" font-size="5.5" fill="#cdcdcd" text-anchor="end" font-weight="normal" stroke="#cdcdcd" stroke-width="0.18" >0</text>
<text x="464.70" y="175.20" font-family="Liberation Mono" font-size="6.5" fill="#cdcdcd" text-anchor="start" font-weight="normal" stroke="#cdcdcd" stroke-width="0.18" >VFS usage  (1day)</text>
<text x="421.90" y="196.50" font-family="Liberation Mono" font-size="5.6" fill="#cdcdcd" text-anchor="middle" dominant-baseline="central" stroke="#cdcdcd" stroke-width="0.18" transform="rotate(-90 421.90 196.50)">Percent (%)</text>
<text x="467.50" y="221.90" font-family="Liberation Mono" font-size="5.5" fill="#cdcdcd" text-anchor="middle" font-weight="normal" stroke="#cdcdcd" stroke-width="0.18" >18:00</text>
<text x="495.60" y="221.90" font-family="Liberation Mono" font-size="5.5" fill="#cdcdcd" text-anchor="middle" font-weight="normal" stroke="#cdcdcd" stroke-width="0.18" >00:00</text>
<text x="523.70" y="221.90" font-family="Liberation Mono" font-size="5.5" fill="#cdcdcd" text-anchor="middle" font-weight="normal" stroke="#cdcdcd" stroke-width="0.18" >06:00</text>
<text x="551.80" y="221.90" font-family="Liberation Mono" font-size="5.5" fill="#cdcdcd" text-anchor="middle" font-weight="normal" stroke="#cdcdcd" stroke-width="0.18" >12:00</text>
<text x="575.60" y="199.00" font-family="Liberation Mono" font-size="4.4" fill="#c0c0c0" fill-opacity="0.3" text-anchor="middle" transform="rotate(90 575.60 199.00)" dominant-baseline="middle">RRDTOOL / TOBI OETIKER</text>
<rect x="423.30" y="226.50" width="4.6" height="4.6" fill="#5a5ad5" stroke="#000" stroke-opacity="0.55" stroke-width="0.6"/>
<text x="430.20" y="230.70" font-family="Liberation Mono" font-size="5.5" fill="#cdcdcd" text-anchor="start" font-weight="normal" stroke="#cdcdcd" stroke-width="0.18" >inode</text>
<text x="508.80" y="230.70" font-family="Liberation Mono" font-size="5.5" fill="#cdcdcd" text-anchor="start" font-weight="normal" stroke="#cdcdcd" stroke-width="0.18" >Current:</text>
<text x="559.50" y="230.70" font-family="Liberation Mono" font-size="5.5" fill="#cdcdcd" text-anchor="end" font-weight="normal" stroke="#cdcdcd" stroke-width="0.18" >70.6%</text>
<rect x="423.30" y="233.00" width="4.6" height="4.6" fill="#d5d55a" stroke="#000" stroke-opacity="0.55" stroke-width="0.6"/>
<text x="430.20" y="237.20" font-family="Liberation Mono" font-size="5.5" fill="#cdcdcd" text-anchor="start" font-weight="normal" stroke="#cdcdcd" stroke-width="0.18" >dentry</text>
<text x="508.80" y="237.20" font-family="Liberation Mono" font-size="5.5" fill="#cdcdcd" text-anchor="start" font-weight="normal" stroke="#cdcdcd" stroke-width="0.18" >Current:</text>
<text x="559.50" y="237.20" font-family="Liberation Mono" font-size="5.5" fill="#cdcdcd" text-anchor="end" font-weight="normal" stroke="#cdcdcd" stroke-width="0.18" >54.0%</text>
<rect x="423.30" y="239.50" width="4.6" height="4.6" fill="#d55ad5" stroke="#000" stroke-opacity="0.55" stroke-width="0.6"/>
<text x="430.20" y="243.70" font-family="Liberation Mono" font-size="5.5" fill="#cdcdcd" text-anchor="start" font-weight="normal" stroke="#cdcdcd" stroke-width="0.18" >file</text>
<text x="508.80" y="243.70" font-family="Liberation Mono" font-size="5.5" fill="#cdcdcd" text-anchor="start" font-weight="normal" stroke="#cdcdcd" stroke-width="0.18" >Current:</text>
<text x="559.50" y="243.70" font-family="Liberation Mono" font-size="5.5" fill="#cdcdcd" text-anchor="end" font-weight="normal" stroke="#cdcdcd" stroke-width="0.18" >0.0%</text>
<rect x="101.00" y="266.30" width="484.00" height="163.70" fill="#8c8c8c" />
<rect x="104.00" y="270.10" width="476.50" height="9.90" fill="#333333" />
<text x="109.50" y="279.00" font-family="Liberation Sans" font-size="9.1" fill="#969628" text-anchor="start" font-weight="bold" >Kernel usage per processor</text>
<rect x="104.00" y="284.30" width="236.40" height="145.70" fill="#333333" />
<rect x="345.50" y="284.30" width="235.00" height="145.70" fill="#333333" />
<rect x="105.90" y="285.70" width="233.10" height="144.30" fill="#131313" />
<rect x="142.80" y="298.70" width="181.80" height="84.70" fill="#000" />
<path d="M144.60,298.70V383.40 M152.17,298.70V383.40 M159.73,298.70V383.40 M174.87,298.70V383.40 M182.43,298.70V383.40 M190.00,298.70V383.40 M197.57,298.70V383.40 M205.13,298.70V383.40 M220.27,298.70V383.40 M227.83,298.70V383.40 M235.40,298.70V383.40 M242.97,298.70V383.40 M250.53,298.70V383.40 M265.67,298.70V383.40 M273.23,298.70V383.40 M280.80,298.70V383.40 M288.37,298.70V383.40 M295.93,298.70V383.40 M311.07,298.70V383.40 M318.63,298.70V383.40 M142.80,379.16H324.60 M142.80,370.69H324.60 M142.80,362.22H324.60 M142.80,353.75H324.60 M142.80,345.28H324.60 M142.80,336.81H324.60 M142.80,328.34H324.60 M142.80,319.88H324.60 M142.80,311.40H324.60 M142.80,302.94H324.60" stroke="#b0b090" stroke-opacity="0.150" stroke-width="0.6" fill="none"/>
<path d="M167.30,298.70V383.40 M212.60,298.70V383.40 M258.00,298.70V383.40 M303.40,298.70V383.40 M142.80,374.93H324.60 M142.80,366.46H324.60 M142.80,357.99H324.60 M142.80,349.52H324.60 M142.80,341.05H324.60 M142.80,332.58H324.60 M142.80,324.11H324.60 M142.80,315.64H324.60 M142.80,307.17H324.60 M142.80,298.70H324.60" stroke="#b0c0b0" stroke-opacity="0.240" stroke-width="0.7" fill="none"/>
<path d="M142.80,383.40 L142.80,374.93 L143.30,369.28 L143.80,367.14 L144.30,365.87 L144.80,365.27 L145.30,364.85 L145.80,365.01 L146.30,365.31 L146.80,365.61 L147.30,367.31 L147.80,369.00 L148.30,371.54 L148.80,374.08 L149.30,375.10 L149.80,376.12 L150.30,376.12 L150.80,376.12 L151.30,374.29 L151.80,371.78 L152.30,372.39 L152.80,376.29 L153.30,376.29 L153.80,376.29 L154.30,376.29 L154.80,376.29 L155.30,376.29 L155.80,376.30 L156.30,376.30 L156.80,376.31 L157.30,376.31 L157.80,376.32 L158.30,376.32 L158.80,376.33 L159.30,376.34 L159.80,376.34 L160.30,376.35 L160.80,376.35 L161.30,376.36 L161.80,376.36 L162.30,376.37 L162.80,376.38 L163.30,376.38 L163.80,376.39 L164.30,376.39 L164.80,376.40 L165.30,376.40 L165.80,376.41 L166.30,376.42 L166.80,376.42 L167.30,376.43 L167.80,376.43 L168.30,376.44 L168.80,376.44 L169.30,376.45 L169.80,376.45 L170.30,376.81 L170.80,377.17 L171.30,377.53 L171.80,377.89 L172.30,377.17 L172.80,376.45 L173.30,376.46 L173.80,376.46 L174.30,376.46 L174.80,376.46 L175.30,376.46 L175.80,376.46 L176.30,376.46 L176.80,376.46 L177.30,376.46 L177.80,376.46 L178.30,376.46 L178.80,376.46 L179.30,376.46 L179.80,376.46 L180.30,376.47 L180.80,376.47 L181.30,376.47 L181.80,376.47 L182.30,376.47 L182.80,376.47 L183.30,376.47 L183.80,376.47 L184.30,376.47 L184.80,376.47 L185.30,376.47 L185.80,376.47 L186.30,376.47 L186.80,376.47 L187.30,376.47 L187.80,376.48 L188.30,376.48 L188.80,376.48 L189.30,376.48 L189.80,376.48 L190.30,376.48 L190.80,376.48 L191.30,376.48 L191.80,376.48 L192.30,376.48 L192.80,376.48 L193.30,376.48 L193.80,376.48 L194.30,376.48 L194.80,376.49 L195.30,376.49 L195.80,376.49 L196.30,376.49 L196.80,376.49 L197.30,376.49 L197.80,376.49 L198.30,376.49 L198.80,376.49 L199.30,376.49 L199.80,376.49 L200.30,376.49 L200.80,376.49 L201.30,376.49 L201.80,376.49 L202.30,376.50 L202.80,376.50 L203.30,376.50 L203.80,376.50 L204.30,376.50 L204.80,376.50 L205.30,376.50 L205.80,376.50 L206.30,376.50 L206.80,376.50 L207.30,376.50 L207.80,376.50 L208.30,376.50 L208.80,376.50 L209.30,376.51 L209.80,376.51 L210.30,376.51 L210.80,376.51 L211.30,376.51 L211.80,376.51 L212.30,376.51 L212.80,376.51 L213.30,376.51 L213.80,376.51 L214.30,376.51 L214.80,376.51 L215.30,376.51 L215.80,376.51 L216.30,376.52 L216.80,376.52 L217.30,376.52 L217.80,376.52 L218.30,376.52 L218.80,376.52 L219.30,376.52 L219.80,376.52 L220.30,376.52 L220.80,376.52 L221.30,376.52 L221.80,376.52 L222.30,376.52 L222.80,376.52 L223.30,376.52 L223.80,376.53 L224.30,376.53 L224.80,376.53 L225.30,376.53 L225.80,376.53 L226.30,376.53 L226.80,376.53 L227.30,376.53 L227.80,376.53 L228.30,376.53 L228.80,376.53 L229.30,376.53 L229.80,376.53 L230.30,376.53 L230.80,376.54 L231.30,376.54 L231.80,376.54 L232.30,376.54 L232.80,376.54 L233.30,376.54 L233.80,376.54 L234.30,376.54 L234.80,376.54 L235.30,376.54 L235.80,376.54 L236.30,376.54 L236.80,376.54 L237.30,376.54 L237.80,376.54 L238.30,376.55 L238.80,376.55 L239.30,376.55 L239.80,376.55 L240.30,376.55 L240.80,376.55 L241.30,376.55 L241.80,376.55 L242.30,376.55 L242.80,376.55 L243.30,376.55 L243.80,376.55 L244.30,376.55 L244.80,376.55 L245.30,376.56 L245.80,376.56 L246.30,376.56 L246.80,376.56 L247.30,376.56 L247.80,376.56 L248.30,376.56 L248.80,376.56 L249.30,376.56 L249.80,376.56 L250.30,376.56 L250.80,376.56 L251.30,376.56 L251.80,376.56 L252.30,376.56 L252.80,376.57 L253.30,376.57 L253.80,376.57 L254.30,376.57 L254.80,376.57 L255.30,376.57 L255.80,376.57 L256.30,376.57 L256.80,376.57 L257.30,376.57 L257.80,376.57 L258.30,376.57 L258.80,376.57 L259.30,376.57 L259.80,376.58 L260.30,376.58 L260.80,376.58 L261.30,376.58 L261.80,376.58 L262.30,376.58 L262.80,376.58 L263.30,376.58 L263.80,376.58 L264.30,376.58 L264.80,376.58 L265.30,376.58 L265.80,376.58 L266.30,376.58 L266.80,376.59 L267.30,376.59 L267.80,376.59 L268.30,376.59 L268.80,376.59 L269.30,376.59 L269.80,376.59 L270.30,376.59 L270.80,376.59 L271.30,376.59 L271.80,376.59 L272.30,376.59 L272.80,376.59 L273.30,376.59 L273.80,376.59 L274.30,376.60 L274.80,376.60 L275.30,376.60 L275.80,376.60 L276.30,376.60 L276.80,376.60 L277.30,376.60 L277.80,376.60 L278.30,376.60 L278.80,376.60 L279.30,376.60 L279.80,376.60 L280.30,376.60 L280.80,376.60 L281.30,376.61 L281.80,376.61 L282.30,376.61 L282.80,376.61 L283.30,376.61 L283.80,376.61 L284.30,376.61 L284.80,376.61 L285.30,376.61 L285.80,376.61 L286.30,376.61 L286.80,376.61 L287.30,376.61 L287.80,376.61 L288.30,376.61 L288.80,376.62 L289.30,376.62 L289.80,376.62 L290.30,376.62 L290.80,376.62 L291.30,376.62 L291.80,376.62 L292.30,376.62 L292.80,376.62 L293.30,376.62 L293.80,376.62 L294.30,376.62 L294.80,376.62 L295.30,374.93 L295.80,373.24 L296.30,373.09 L296.80,372.95 L297.30,372.81 L297.80,372.67 L298.30,372.53 L298.80,372.39 L299.30,371.75 L299.80,371.12 L300.30,370.48 L300.80,369.85 L301.30,370.69 L301.80,371.54 L302.30,372.39 L302.80,373.24 L303.30,373.38 L303.80,373.52 L304.30,373.66 L304.80,373.80 L305.30,373.94 L305.80,374.08 L306.30,373.80 L306.80,373.52 L307.30,373.24 L307.80,372.95 L308.30,372.67 L308.80,372.39 L309.30,372.67 L309.80,372.95 L310.30,373.24 L310.80,373.52 L311.30,373.80 L311.80,374.08 L312.30,373.38 L312.80,372.67 L313.30,371.97 L313.80,371.26 L314.30,370.55 L314.80,369.85 L315.30,370.69 L315.80,371.54 L316.30,372.39 L316.80,373.24 L317.30,373.24 L317.80,373.24 L318.30,373.24 L318.80,373.24 L319.30,373.24 L319.80,373.24 L320.30,372.60 L320.80,371.97 L321.30,371.33 L321.80,370.69 L322.30,371.75 L322.80,372.81 L323.30,373.87 L323.80,374.93 L324.30,374.93 L324.30,383.40 Z" fill="#4444ee"/>
<path d="M142.80,383.40 L142.80,379.16 L143.30,378.74 L143.80,378.32 L144.30,378.32 L144.80,378.32 L145.30,378.32 L145.80,378.32 L146.30,378.32 L146.80,378.32 L147.30,378.32 L147.80,378.32 L148.30,378.32 L148.80,378.32 L149.30,378.32 L149.80,378.32 L150.30,378.32 L150.80,378.32 L151.30,378.32 L151.80,378.32 L152.30,378.32 L152.80,378.32 L153.30,378.66 L153.80,379.00 L154.30,379.33 L154.80,379.67 L155.30,379.67 L155.80,379.67 L156.30,379.67 L156.80,379.68 L157.30,379.68 L157.80,379.68 L158.30,379.68 L158.80,379.68 L159.30,379.68 L159.80,379.68 L160.30,379.68 L160.80,379.68 L161.30,379.68 L161.80,379.68 L162.30,379.68 L162.80,379.68 L163.30,379.68 L163.80,379.68 L164.30,379.68 L164.80,379.68 L165.30,379.68 L165.80,379.68 L166.30,379.68 L166.80,379.69 L167.30,379.69 L167.80,379.69 L168.30,379.69 L168.80,379.69 L169.30,379.69 L169.80,379.69 L170.30,379.69 L170.80,379.69 L171.30,379.69 L171.80,379.69 L172.30,379.69 L172.80,379.69 L173.30,379.69 L173.80,379.69 L174.30,379.69 L174.80,379.69 L175.30,379.69 L175.80,379.69 L176.30,379.69 L176.80,379.70 L177.30,379.70 L177.80,379.70 L178.30,379.70 L178.80,379.70 L179.30,379.70 L179.80,379.70 L180.30,379.70 L180.80,379.70 L181.30,379.70 L181.80,379.70 L182.30,379.70 L182.80,379.70 L183.30,379.70 L183.80,379.70 L184.30,379.70 L184.80,379.70 L185.30,379.70 L185.80,379.70 L186.30,379.70 L186.80,379.71 L187.30,379.71 L187.80,379.71 L188.30,379.71 L188.80,379.71 L189.30,379.71 L189.80,379.71 L190.30,379.71 L190.80,379.71 L191.30,379.71 L191.80,379.71 L192.30,379.71 L192.80,379.71 L193.30,379.71 L193.80,379.71 L194.30,379.71 L194.80,379.71 L195.30,379.71 L195.80,379.71 L196.30,379.71 L196.80,379.72 L197.30,379.72 L197.80,379.72 L198.30,379.72 L198.80,379.72 L199.30,379.72 L199.80,379.72 L200.30,379.72 L200.80,379.72 L201.30,379.72 L201.80,379.72 L202.30,379.72 L202.80,379.72 L203.30,379.72 L203.80,379.72 L204.30,379.72 L204.80,379.72 L205.30,379.72 L205.80,379.72 L206.30,379.72 L206.80,379.73 L207.30,379.73 L207.80,379.73 L208.30,379.73 L208.80,379.73 L209.30,379.73 L209.80,379.73 L210.30,379.73 L210.80,379.73 L211.30,379.73 L211.80,379.73 L212.30,379.73 L212.80,379.73 L213.30,379.73 L213.80,379.73 L214.30,379.73 L214.80,379.73 L215.30,379.73 L215.80,379.73 L216.30,379.73 L216.80,379.74 L217.30,379.74 L217.80,379.74 L218.30,379.74 L218.80,379.74 L219.30,379.74 L219.80,379.74 L220.30,379.74 L220.80,379.74 L221.30,379.74 L221.80,379.74 L222.30,379.74 L222.80,379.74 L223.30,379.74 L223.80,379.74 L224.30,379.74 L224.80,379.74 L225.30,379.74 L225.80,379.74 L226.30,379.74 L226.80,379.75 L227.30,379.75 L227.80,379.75 L228.30,379.75 L228.80,379.75 L229.30,379.75 L229.80,379.75 L230.30,379.75 L230.80,379.75 L231.30,379.75 L231.80,379.75 L232.30,379.75 L232.80,379.75 L233.30,379.75 L233.80,379.75 L234.30,379.75 L234.80,379.75 L235.30,379.75 L235.80,379.75 L236.30,379.75 L236.80,379.76 L237.30,379.76 L237.80,379.76 L238.30,379.76 L238.80,379.76 L239.30,379.76 L239.80,379.76 L240.30,379.76 L240.80,379.76 L241.30,379.76 L241.80,379.76 L242.30,379.76 L242.80,379.76 L243.30,379.76 L243.80,379.76 L244.30,379.76 L244.80,379.76 L245.30,379.76 L245.80,379.76 L246.30,379.76 L246.80,379.76 L247.30,379.77 L247.80,379.77 L248.30,379.77 L248.80,379.77 L249.30,379.77 L249.80,379.77 L250.30,379.77 L250.80,379.77 L251.30,379.77 L251.80,379.77 L252.30,379.77 L252.80,379.77 L253.30,379.77 L253.80,379.77 L254.30,379.77 L254.80,379.77 L255.30,379.77 L255.80,379.77 L256.30,379.77 L256.80,379.77 L257.30,379.78 L257.80,379.78 L258.30,379.78 L258.80,379.78 L259.30,379.78 L259.80,379.78 L260.30,379.78 L260.80,379.78 L261.30,379.78 L261.80,379.78 L262.30,379.78 L262.80,379.78 L263.30,379.78 L263.80,379.78 L264.30,379.78 L264.80,379.78 L265.30,379.78 L265.80,379.78 L266.30,379.78 L266.80,379.78 L267.30,379.79 L267.80,379.79 L268.30,379.79 L268.80,379.79 L269.30,379.79 L269.80,379.79 L270.30,379.79 L270.80,379.79 L271.30,379.79 L271.80,379.79 L272.30,379.79 L272.80,379.79 L273.30,379.79 L273.80,379.79 L274.30,379.79 L274.80,379.79 L275.30,379.79 L275.80,379.79 L276.30,379.79 L276.80,379.79 L277.30,379.80 L277.80,379.80 L278.30,379.80 L278.80,379.80 L279.30,379.80 L279.80,379.80 L280.30,379.80 L280.80,379.80 L281.30,379.80 L281.80,379.80 L282.30,379.80 L282.80,379.80 L283.30,379.80 L283.80,379.80 L284.30,379.80 L284.80,379.80 L285.30,379.80 L285.80,379.80 L286.30,379.80 L286.80,379.80 L287.30,379.81 L287.80,379.81 L288.30,379.81 L288.80,379.81 L289.30,379.81 L289.80,379.81 L290.30,379.81 L290.80,379.81 L291.30,379.81 L291.80,379.81 L292.30,379.81 L292.80,379.81 L293.30,379.81 L293.80,379.81 L294.30,379.81 L294.80,379.81 L295.30,379.81 L295.80,379.81 L296.30,379.81 L296.80,379.81 L297.30,379.82 L297.80,379.82 L298.30,379.82 L298.80,379.82 L299.30,379.82 L299.80,379.82 L300.30,379.82 L300.80,379.82 L301.30,379.82 L301.80,379.82 L302.30,379.82 L302.80,379.82 L303.30,379.82 L303.80,379.82 L304.30,379.82 L304.80,379.82 L305.30,379.82 L305.80,379.82 L306.30,379.82 L306.80,379.82 L307.30,379.83 L307.80,379.83 L308.30,379.83 L308.80,379.83 L309.30,379.83 L309.80,379.83 L310.30,379.83 L310.80,379.83 L311.30,379.83 L311.80,379.83 L312.30,379.83 L312.80,379.83 L313.30,379.83 L313.80,379.83 L314.30,379.83 L314.80,379.83 L315.30,379.83 L315.80,379.83 L316.30,379.83 L316.80,379.83 L317.30,379.84 L317.80,379.84 L318.30,379.84 L318.80,379.84 L319.30,379.84 L319.80,379.84 L320.30,379.84 L320.80,379.84 L321.30,379.84 L321.80,379.84 L322.30,379.84 L322.80,379.84 L323.30,379.84 L323.80,379.84 L324.30,379.84 L324.30,383.40 Z" fill="#c87a8a"/>
<path d="M142.80,383.40 L142.80,379.50 L143.30,379.12 L143.80,378.74 L144.30,378.74 L144.80,378.74 L145.30,378.74 L145.80,378.74 L146.30,378.74 L146.80,378.74 L147.30,378.74 L147.80,378.74 L148.30,378.74 L148.80,378.74 L149.30,378.74 L149.80,378.74 L150.30,378.74 L150.80,378.74 L151.30,378.74 L151.80,378.74 L152.30,378.74 L152.80,378.74 L153.30,379.31 L153.80,379.88 L154.30,380.46 L154.80,381.03 L155.30,381.03 L155.80,381.03 L156.30,381.03 L156.80,381.03 L157.30,381.03 L157.80,381.03 L158.30,381.03 L158.80,381.03 L159.30,381.03 L159.80,381.03 L160.30,381.03 L160.80,381.03 L161.30,381.03 L161.80,381.03 L162.30,381.03 L162.80,381.03 L163.30,381.03 L163.80,381.03 L164.30,381.03 L164.80,381.03 L165.30,381.03 L165.80,381.03 L166.30,381.03 L166.80,381.03 L167.30,381.03 L167.80,381.03 L168.30,381.04 L168.80,381.04 L169.30,381.04 L169.80,381.04 L170.30,381.04 L170.80,381.04 L171.30,381.04 L171.80,381.04 L172.30,381.04 L172.80,381.04 L173.30,381.04 L173.80,381.04 L174.30,381.04 L174.80,381.04 L175.30,381.04 L175.80,381.04 L176.30,381.04 L176.80,381.04 L177.30,381.04 L177.80,381.04 L178.30,381.04 L178.80,381.04 L179.30,381.04 L179.80,381.04 L180.30,381.04 L180.80,381.04 L181.30,381.04 L181.80,381.04 L182.30,381.04 L182.80,381.04 L183.30,381.04 L183.80,381.04 L184.30,381.04 L184.80,381.04 L185.30,381.04 L185.80,381.04 L186.30,381.04 L186.80,381.04 L187.30,381.04 L187.80,381.04 L188.30,381.05 L188.80,381.05 L189.30,381.05 L189.80,381.05 L190.30,381.05 L190.80,381.05 L191.30,381.05 L191.80,381.05 L192.30,381.05 L192.80,381.05 L193.30,381.05 L193.80,381.05 L194.30,381.05 L194.80,381.05 L195.30,381.05 L195.80,381.05 L196.30,381.05 L196.80,381.05 L197.30,381.05 L197.80,381.05 L198.30,381.05 L198.80,381.05 L199.30,381.05 L199.80,381.05 L200.30,381.05 L200.80,381.05 L201.30,381.05 L201.80,381.05 L202.30,381.05 L202.80,381.05 L203.30,381.05 L203.80,381.05 L204.30,381.05 L204.80,381.05 L205.30,381.05 L205.80,381.05 L206.30,381.05 L206.80,381.05 L207.30,381.05 L207.80,381.05 L208.30,381.06 L208.80,381.06 L209.30,381.06 L209.80,381.06 L210.30,381.06 L210.80,381.06 L211.30,381.06 L211.80,381.06 L212.30,381.06 L212.80,381.06 L213.30,381.06 L213.80,381.06 L214.30,381.06 L214.80,381.06 L215.30,381.06 L215.80,381.06 L216.30,381.06 L216.80,381.06 L217.30,381.06 L217.80,381.06 L218.30,381.06 L218.80,381.06 L219.30,381.06 L219.80,381.06 L220.30,381.06 L220.80,381.06 L221.30,381.06 L221.80,381.06 L222.30,381.06 L222.80,381.06 L223.30,381.06 L223.80,381.06 L224.30,381.06 L224.80,381.06 L225.30,381.06 L225.80,381.06 L226.30,381.06 L226.80,381.06 L227.30,381.06 L227.80,381.06 L228.30,381.07 L228.80,381.07 L229.30,381.07 L229.80,381.07 L230.30,381.07 L230.80,381.07 L231.30,381.07 L231.80,381.07 L232.30,381.07 L232.80,381.07 L233.30,381.07 L233.80,381.07 L234.30,381.07 L234.80,381.07 L235.30,381.07 L235.80,381.07 L236.30,381.07 L236.80,381.07 L237.30,381.07 L237.80,381.07 L238.30,381.07 L238.80,381.07 L239.30,381.07 L239.80,381.07 L240.30,381.07 L240.80,381.07 L241.30,381.07 L241.80,381.07 L242.30,381.07 L242.80,381.07 L243.30,381.07 L243.80,381.07 L244.30,381.07 L244.80,381.07 L245.30,381.07 L245.80,381.07 L246.30,381.07 L246.80,381.07 L247.30,381.07 L247.80,381.07 L248.30,381.08 L248.80,381.08 L249.30,381.08 L249.80,381.08 L250.30,381.08 L250.80,381.08 L251.30,381.08 L251.80,381.08 L252.30,381.08 L252.80,381.08 L253.30,381.08 L253.80,381.08 L254.30,381.08 L254.80,381.08 L255.30,381.08 L255.80,381.08 L256.30,381.08 L256.80,381.08 L257.30,381.08 L257.80,381.08 L258.30,381.08 L258.80,381.08 L259.30,381.08 L259.80,381.08 L260.30,381.08 L260.80,381.08 L261.30,381.08 L261.80,381.08 L262.30,381.08 L262.80,381.08 L263.30,381.08 L263.80,381.08 L264.30,381.08 L264.80,381.08 L265.30,381.08 L265.80,381.08 L266.30,381.08 L266.80,381.08 L267.30,381.08 L267.80,381.08 L268.30,381.09 L268.80,381.09 L269.30,381.09 L269.80,381.09 L270.30,381.09 L270.80,381.09 L271.30,381.09 L271.80,381.09 L272.30,381.09 L272.80,381.09 L273.30,381.09 L273.80,381.09 L274.30,381.09 L274.80,381.09 L275.30,381.09 L275.80,381.09 L276.30,381.09 L276.80,381.09 L277.30,381.09 L277.80,381.09 L278.30,381.09 L278.80,381.09 L279.30,381.09 L279.80,381.09 L280.30,381.09 L280.80,381.09 L281.30,381.09 L281.80,381.09 L282.30,381.09 L282.80,381.09 L283.30,381.09 L283.80,381.09 L284.30,381.09 L284.80,381.09 L285.30,381.09 L285.80,381.09 L286.30,381.09 L286.80,381.09 L287.30,381.09 L287.80,381.09 L288.30,381.09 L288.80,381.10 L289.30,381.10 L289.80,381.10 L290.30,381.10 L290.80,381.10 L291.30,381.10 L291.80,381.10 L292.30,381.10 L292.80,381.10 L293.30,381.10 L293.80,381.10 L294.30,381.10 L294.80,381.10 L295.30,381.10 L295.80,381.10 L296.30,381.10 L296.80,381.10 L297.30,381.10 L297.80,381.10 L298.30,381.10 L298.80,381.10 L299.30,381.10 L299.80,381.10 L300.30,381.10 L300.80,381.10 L301.30,381.10 L301.80,381.10 L302.30,381.10 L302.80,381.10 L303.30,381.10 L303.80,381.10 L304.30,381.10 L304.80,381.10 L305.30,381.10 L305.80,381.10 L306.30,381.10 L306.80,381.10 L307.30,381.10 L307.80,381.10 L308.30,381.10 L308.80,381.11 L309.30,381.11 L309.80,381.11 L310.30,381.11 L310.80,381.11 L311.30,381.11 L311.80,381.11 L312.30,381.11 L312.80,381.11 L313.30,381.11 L313.80,381.11 L314.30,381.11 L314.80,381.11 L315.30,381.11 L315.80,381.11 L316.30,381.11 L316.80,381.11 L317.30,381.11 L317.80,381.11 L318.30,381.11 L318.80,381.11 L319.30,381.11 L319.80,381.11 L320.30,381.11 L320.80,381.11 L321.30,381.11 L321.80,381.11 L322.30,381.11 L322.80,381.11 L323.30,381.11 L323.80,381.11 L324.30,381.11 L324.30,383.40 Z" fill="#44eeee"/>
<path d="M142.80,383.40 L142.80,381.11 L143.30,381.11 L143.80,381.11 L144.30,381.11 L144.80,381.11 L145.30,381.11 L145.80,381.11 L146.30,381.11 L146.80,381.11 L147.30,381.11 L147.80,381.11 L148.30,381.11 L148.80,381.11 L149.30,381.11 L149.80,381.11 L150.30,381.11 L150.80,381.11 L151.30,381.11 L151.80,381.11 L152.30,381.11 L152.80,381.11 L153.30,381.11 L153.80,381.11 L154.30,381.11 L154.80,381.11 L155.30,381.11 L155.80,381.11 L156.30,381.11 L156.80,381.11 L157.30,381.11 L157.80,381.11 L158.30,381.11 L158.80,381.11 L159.30,381.11 L159.80,381.11 L160.30,381.11 L160.80,381.11 L161.30,381.11 L161.80,381.11 L162.30,381.11 L162.80,381.11 L163.30,381.11 L163.80,381.11 L164.30,381.11 L164.80,381.11 L165.30,381.11 L165.80,381.11 L166.30,381.11 L166.80,381.11 L167.30,381.11 L167.80,381.11 L168.30,381.11 L168.80,381.11 L169.30,381.11 L169.80,381.11 L170.30,381.11 L170.80,381.11 L171.30,381.11 L171.80,381.11 L172.30,381.11 L172.80,381.11 L173.30,381.11 L173.80,381.11 L174.30,381.11 L174.80,381.11 L175.30,381.11 L175.80,381.11 L176.30,381.11 L176.80,381.11 L177.30,381.11 L177.80,381.11 L178.30,381.11 L178.80,381.11 L179.30,381.11 L179.80,381.11 L180.30,381.11 L180.80,381.11 L181.30,381.11 L181.80,381.11 L182.30,381.11 L182.80,381.11 L183.30,381.11 L183.80,381.11 L184.30,381.11 L184.80,381.11 L185.30,381.11 L185.80,381.11 L186.30,381.11 L186.80,381.11 L187.30,381.11 L187.80,381.11 L188.30,381.11 L188.80,381.11 L189.30,381.11 L189.80,381.11 L190.30,381.11 L190.80,381.11 L191.30,381.11 L191.80,381.11 L192.30,381.11 L192.80,381.11 L193.30,381.11 L193.80,381.11 L194.30,381.11 L194.80,381.11 L195.30,381.11 L195.80,381.11 L196.30,381.11 L196.80,381.11 L197.30,381.11 L197.80,381.11 L198.30,381.11 L198.80,381.11 L199.30,381.11 L199.80,381.11 L200.30,381.11 L200.80,381.11 L201.30,381.11 L201.80,381.11 L202.30,381.11 L202.80,381.11 L203.30,381.11 L203.80,381.11 L204.30,381.11 L204.80,381.11 L205.30,381.11 L205.80,381.11 L206.30,381.11 L206.80,381.11 L207.30,381.11 L207.80,381.11 L208.30,381.11 L208.80,381.11 L209.30,381.11 L209.80,381.11 L210.30,381.11 L210.80,381.11 L211.30,381.11 L211.80,381.11 L212.30,381.11 L212.80,381.11 L213.30,381.11 L213.80,381.11 L214.30,381.11 L214.80,381.11 L215.30,381.11 L215.80,381.11 L216.30,381.11 L216.80,381.11 L217.30,381.11 L217.80,381.11 L218.30,381.11 L218.80,381.11 L219.30,381.11 L219.80,381.11 L220.30,381.11 L220.80,381.11 L221.30,381.11 L221.80,381.11 L222.30,381.11 L222.80,381.11 L223.30,381.11 L223.80,381.11 L224.30,381.11 L224.80,381.11 L225.30,381.11 L225.80,381.11 L226.30,381.11 L226.80,381.11 L227.30,381.11 L227.80,381.11 L228.30,381.11 L228.80,381.11 L229.30,381.11 L229.80,381.11 L230.30,381.11 L230.80,381.11 L231.30,381.11 L231.80,381.11 L232.30,381.11 L232.80,381.11 L233.30,381.11 L233.80,381.11 L234.30,381.11 L234.80,381.11 L235.30,381.11 L235.80,381.11 L236.30,381.11 L236.80,381.11 L237.30,381.11 L237.80,381.11 L238.30,381.11 L238.80,381.11 L239.30,381.11 L239.80,381.11 L240.30,381.11 L240.80,381.11 L241.30,381.11 L241.80,381.11 L242.30,381.11 L242.80,381.11 L243.30,381.11 L243.80,381.11 L244.30,381.11 L244.80,381.11 L245.30,381.11 L245.80,381.11 L246.30,381.11 L246.80,381.11 L247.30,381.11 L247.80,381.11 L248.30,381.11 L248.80,381.11 L249.30,381.11 L249.80,381.11 L250.30,381.11 L250.80,381.11 L251.30,381.11 L251.80,381.11 L252.30,381.11 L252.80,381.11 L253.30,381.11 L253.80,381.11 L254.30,381.11 L254.80,381.11 L255.30,381.11 L255.80,381.11 L256.30,381.11 L256.80,381.11 L257.30,381.11 L257.80,381.11 L258.30,381.11 L258.80,381.11 L259.30,381.11 L259.80,381.11 L260.30,381.11 L260.80,381.11 L261.30,381.11 L261.80,381.11 L262.30,381.11 L262.80,381.11 L263.30,381.11 L263.80,381.11 L264.30,381.11 L264.80,381.11 L265.30,381.11 L265.80,381.11 L266.30,381.11 L266.80,381.11 L267.30,381.11 L267.80,381.11 L268.30,381.11 L268.80,381.11 L269.30,381.11 L269.80,381.11 L270.30,381.11 L270.80,381.11 L271.30,381.11 L271.80,381.11 L272.30,381.11 L272.80,381.11 L273.30,381.11 L273.80,381.11 L274.30,381.11 L274.80,381.11 L275.30,381.11 L275.80,381.11 L276.30,381.11 L276.80,381.11 L277.30,381.11 L277.80,381.11 L278.30,381.11 L278.80,381.11 L279.30,381.11 L279.80,381.11 L280.30,381.11 L280.80,381.11 L281.30,381.11 L281.80,381.11 L282.30,381.11 L282.80,381.11 L283.30,381.11 L283.80,381.11 L284.30,381.11 L284.80,381.11 L285.30,381.11 L285.80,381.11 L286.30,381.11 L286.80,381.11 L287.30,381.11 L287.80,381.11 L288.30,381.11 L288.80,381.11 L289.30,381.11 L289.80,381.11 L290.30,381.11 L290.80,381.11 L291.30,381.11 L291.80,381.11 L292.30,381.11 L292.80,381.11 L293.30,381.11 L293.80,381.11 L294.30,381.11 L294.80,381.11 L295.30,381.11 L295.80,381.11 L296.30,381.11 L296.80,381.11 L297.30,381.11 L297.80,381.11 L298.30,381.11 L298.80,381.11 L299.30,381.11 L299.80,381.11 L300.30,381.11 L300.80,381.11 L301.30,381.11 L301.80,381.11 L302.30,381.11 L302.80,381.11 L303.30,381.11 L303.80,381.11 L304.30,381.11 L304.80,381.11 L305.30,381.11 L305.80,381.11 L306.30,381.11 L306.80,381.11 L307.30,381.11 L307.80,381.11 L308.30,381.11 L308.80,381.11 L309.30,381.11 L309.80,381.11 L310.30,381.11 L310.80,381.11 L311.30,381.11 L311.80,381.11 L312.30,381.11 L312.80,381.11 L313.30,381.11 L313.80,381.11 L314.30,381.11 L314.80,381.11 L315.30,381.11 L315.80,381.11 L316.30,381.11 L316.80,381.11 L317.30,381.11 L317.80,381.11 L318.30,381.11 L318.80,381.11 L319.30,381.11 L319.80,381.11 L320.30,381.11 L320.80,381.11 L321.30,381.11 L321.80,381.11 L322.30,381.11 L322.80,381.11 L323.30,381.11 L323.80,381.11 L324.30,381.11 L324.30,383.40 Z" fill="#b8d090"/>
<path d="M142.80,383.40 L142.80,382.21 L143.30,382.21 L143.80,382.21 L144.30,382.21 L144.80,382.21 L145.30,382.21 L145.80,382.21 L146.30,382.21 L146.80,382.21 L147.30,382.21 L147.80,382.21 L148.30,382.21 L148.80,382.21 L149.30,382.21 L149.80,382.21 L150.30,382.21 L150.80,382.21 L151.30,382.21 L151.80,382.21 L152.30,382.21 L152.80,382.21 L153.30,382.21 L153.80,382.21 L154.30,382.21 L154.80,382.21 L155.30,382.21 L155.80,382.21 L156.30,382.21 L156.80,382.21 L157.30,382.21 L157.80,382.21 L158.30,382.21 L158.80,382.21 L159.30,382.21 L159.80,382.21 L160.30,382.21 L160.80,382.21 L161.30,382.21 L161.80,382.21 L162.30,382.21 L162.80,382.21 L163.30,382.21 L163.80,382.21 L164.30,382.21 L164.80,382.21 L165.30,382.21 L165.80,382.21 L166.30,382.21 L166.80,382.21 L167.30,382.21 L167.80,382.21 L168.30,382.21 L168.80,382.21 L169.30,382.21 L169.80,382.21 L170.30,382.21 L170.80,382.21 L171.30,382.21 L171.80,382.21 L172.30,382.21 L172.80,382.21 L173.30,382.21 L173.80,382.21 L174.30,382.21 L174.80,382.21 L175.30,382.21 L175.80,382.21 L176.30,382.21 L176.80,382.21 L177.30,382.21 L177.80,382.21 L178.30,382.21 L178.80,382.21 L179.30,382.21 L179.80,382.21 L180.30,382.21 L180.80,382.21 L181.30,382.21 L181.80,382.21 L182.30,382.21 L182.80,382.21 L183.30,382.21 L183.80,382.21 L184.30,382.21 L184.80,382.21 L185.30,382.21 L185.80,382.21 L186.30,382.21 L186.80,382.21 L187.30,382.21 L187.80,382.21 L188.30,382.21 L188.80,382.21 L189.30,382.21 L189.80,382.21 L190.30,382.21 L190.80,382.21 L191.30,382.21 L191.80,382.21 L192.30,382.21 L192.80,382.21 L193.30,382.21 L193.80,382.21 L194.30,382.21 L194.80,382.21 L195.30,382.21 L195.80,382.21 L196.30,382.21 L196.80,382.21 L197.30,382.21 L197.80,382.21 L198.30,382.21 L198.80,382.21 L199.30,382.21 L199.80,382.21 L200.30,382.21 L200.80,382.21 L201.30,382.21 L201.80,382.21 L202.30,382.21 L202.80,382.21 L203.30,382.21 L203.80,382.21 L204.30,382.21 L204.80,382.21 L205.30,382.21 L205.80,382.21 L206.30,382.21 L206.80,382.21 L207.30,382.21 L207.80,382.21 L208.30,382.21 L208.80,382.21 L209.30,382.21 L209.80,382.21 L210.30,382.21 L210.80,382.21 L211.30,382.21 L211.80,382.21 L212.30,382.21 L212.80,382.21 L213.30,382.21 L213.80,382.21 L214.30,382.21 L214.80,382.21 L215.30,382.21 L215.80,382.21 L216.30,382.21 L216.80,382.21 L217.30,382.21 L217.80,382.21 L218.30,382.21 L218.80,382.21 L219.30,382.21 L219.80,382.21 L220.30,382.21 L220.80,382.21 L221.30,382.21 L221.80,382.21 L222.30,382.21 L222.80,382.21 L223.30,382.21 L223.80,382.21 L224.30,382.21 L224.80,382.21 L225.30,382.21 L225.80,382.21 L226.30,382.21 L226.80,382.21 L227.30,382.21 L227.80,382.21 L228.30,382.21 L228.80,382.21 L229.30,382.21 L229.80,382.21 L230.30,382.21 L230.80,382.21 L231.30,382.21 L231.80,382.21 L232.30,382.21 L232.80,382.21 L233.30,382.21 L233.80,382.21 L234.30,382.21 L234.80,382.21 L235.30,382.21 L235.80,382.21 L236.30,382.21 L236.80,382.21 L237.30,382.21 L237.80,382.21 L238.30,382.21 L238.80,382.21 L239.30,382.21 L239.80,382.21 L240.30,382.21 L240.80,382.21 L241.30,382.21 L241.80,382.21 L242.30,382.21 L242.80,382.21 L243.30,382.21 L243.80,382.21 L244.30,382.21 L244.80,382.21 L245.30,382.21 L245.80,382.21 L246.30,382.21 L246.80,382.21 L247.30,382.21 L247.80,382.21 L248.30,382.21 L248.80,382.21 L249.30,382.21 L249.80,382.21 L250.30,382.21 L250.80,382.21 L251.30,382.21 L251.80,382.21 L252.30,382.21 L252.80,382.21 L253.30,382.21 L253.80,382.21 L254.30,382.21 L254.80,382.21 L255.30,382.21 L255.80,382.21 L256.30,382.21 L256.80,382.21 L257.30,382.21 L257.80,382.21 L258.30,382.21 L258.80,382.21 L259.30,382.21 L259.80,382.21 L260.30,382.21 L260.80,382.21 L261.30,382.21 L261.80,382.21 L262.30,382.21 L262.80,382.21 L263.30,382.21 L263.80,382.21 L264.30,382.21 L264.80,382.21 L265.30,382.21 L265.80,382.21 L266.30,382.21 L266.80,382.21 L267.30,382.21 L267.80,382.21 L268.30,382.21 L268.80,382.21 L269.30,382.21 L269.80,382.21 L270.30,382.21 L270.80,382.21 L271.30,382.21 L271.80,382.21 L272.30,382.21 L272.80,382.21 L273.30,382.21 L273.80,382.21 L274.30,382.21 L274.80,382.21 L275.30,382.21 L275.80,382.21 L276.30,382.21 L276.80,382.21 L277.30,382.21 L277.80,382.21 L278.30,382.21 L278.80,382.21 L279.30,382.21 L279.80,382.21 L280.30,382.21 L280.80,382.21 L281.30,382.21 L281.80,382.21 L282.30,382.21 L282.80,382.21 L283.30,382.21 L283.80,382.21 L284.30,382.21 L284.80,382.21 L285.30,382.21 L285.80,382.21 L286.30,382.21 L286.80,382.21 L287.30,382.21 L287.80,382.21 L288.30,382.21 L288.80,382.21 L289.30,382.21 L289.80,382.21 L290.30,382.21 L290.80,382.21 L291.30,382.21 L291.80,382.21 L292.30,382.21 L292.80,382.21 L293.30,382.21 L293.80,382.21 L294.30,382.21 L294.80,382.21 L295.30,382.21 L295.80,382.21 L296.30,382.21 L296.80,382.21 L297.30,382.21 L297.80,382.21 L298.30,382.21 L298.80,382.21 L299.30,382.21 L299.80,382.21 L300.30,382.21 L300.80,382.21 L301.30,382.21 L301.80,382.21 L302.30,382.21 L302.80,382.21 L303.30,382.21 L303.80,382.21 L304.30,382.21 L304.80,382.21 L305.30,382.21 L305.80,382.21 L306.30,382.21 L306.80,382.21 L307.30,382.21 L307.80,382.21 L308.30,382.21 L308.80,382.21 L309.30,382.21 L309.80,382.21 L310.30,382.21 L310.80,382.21 L311.30,382.21 L311.80,382.21 L312.30,382.21 L312.80,382.21 L313.30,382.21 L313.80,382.21 L314.30,382.21 L314.80,382.21 L315.30,382.21 L315.80,382.21 L316.30,382.21 L316.80,382.21 L317.30,382.21 L317.80,382.21 L318.30,382.21 L318.80,382.21 L319.30,382.21 L319.80,382.21 L320.30,382.21 L320.80,382.21 L321.30,382.21 L321.80,382.21 L322.30,382.21 L322.80,382.21 L323.30,382.21 L323.80,382.21 L324.30,382.21 L324.30,383.40 Z" fill="#e2a036"/>
<path d="M141.20,297.50 L144.40,297.50 L142.80,294.70 Z" fill="#fff"/>
<path d="M325.40,381.80 L325.40,385.00 L328.20,383.40 Z" fill="#fff"/>
<text x="138.30" y="385.30" font-family="Liberation Mono" font-size="5.5" fill="#cdcdcd" text-anchor="end" font-weight="normal" stroke="#cdcdcd" stroke-width="0.18" >0</text>
<text x="138.30" y="376.83" font-family="Liberation Mono" font-size="5.5" fill="#cdcdcd" text-anchor="end" font-weight="normal" stroke="#cdcdcd" stroke-width="0.18" >10</text>
<text x="138.30" y="368.36" font-family="Liberation Mono" font-size="5.5" fill="#cdcdcd" text-anchor="end" font-weight="normal" stroke="#cdcdcd" stroke-width="0.18" >20</text>
<text x="138.30" y="359.89" font-family="Liberation Mono" font-size="5.5" fill="#cdcdcd" text-anchor="end" font-weight="normal" stroke="#cdcdcd" stroke-width="0.18" >30</text>
<text x="138.30" y="351.42" font-family="Liberation Mono" font-size="5.5" fill="#cdcdcd" text-anchor="end" font-weight="normal" stroke="#cdcdcd" stroke-width="0.18" >40</text>
<text x="138.30" y="342.95" font-family="Liberation Mono" font-size="5.5" fill="#cdcdcd" text-anchor="end" font-weight="normal" stroke="#cdcdcd" stroke-width="0.18" >50</text>
<text x="138.30" y="334.48" font-family="Liberation Mono" font-size="5.5" fill="#cdcdcd" text-anchor="end" font-weight="normal" stroke="#cdcdcd" stroke-width="0.18" >60</text>
<text x="138.30" y="326.01" font-family="Liberation Mono" font-size="5.5" fill="#cdcdcd" text-anchor="end" font-weight="normal" stroke="#cdcdcd" stroke-width="0.18" >70</text>
<text x="138.30" y="317.54" font-family="Liberation Mono" font-size="5.5" fill="#cdcdcd" text-anchor="end" font-weight="normal" stroke="#cdcdcd" stroke-width="0.18" >80</text>
<text x="138.30" y="309.07" font-family="Liberation Mono" font-size="5.5" fill="#cdcdcd" text-anchor="end" font-weight="normal" stroke="#cdcdcd" stroke-width="0.18" >90</text>
<text x="138.30" y="300.60" font-family="Liberation Mono" font-size="5.5" fill="#cdcdcd" text-anchor="end" font-weight="normal" stroke="#cdcdcd" stroke-width="0.18" >100</text>
<text x="186.50" y="296.60" font-family="Liberation Mono" font-size="6.5" fill="#cdcdcd" text-anchor="start" font-weight="normal" stroke="#cdcdcd" stroke-width="0.18" >Processor 0  (1day)</text>
<text x="111.60" y="340.40" font-family="Liberation Mono" font-size="5.6" fill="#cdcdcd" text-anchor="middle" dominant-baseline="central" stroke="#cdcdcd" stroke-width="0.18" transform="rotate(-90 111.60 340.40)">Percent (%)</text>
<text x="167.30" y="389.80" font-family="Liberation Mono" font-size="5.5" fill="#cdcdcd" text-anchor="middle" font-weight="normal" stroke="#cdcdcd" stroke-width="0.18" >18:00</text>
<text x="212.60" y="389.80" font-family="Liberation Mono" font-size="5.5" fill="#cdcdcd" text-anchor="middle" font-weight="normal" stroke="#cdcdcd" stroke-width="0.18" >00:00</text>
<text x="258.00" y="389.80" font-family="Liberation Mono" font-size="5.5" fill="#cdcdcd" text-anchor="middle" font-weight="normal" stroke="#cdcdcd" stroke-width="0.18" >06:00</text>
<text x="303.40" y="389.80" font-family="Liberation Mono" font-size="5.5" fill="#cdcdcd" text-anchor="middle" font-weight="normal" stroke="#cdcdcd" stroke-width="0.18" >12:00</text>
<text x="336.10" y="321.00" font-family="Liberation Mono" font-size="4.4" fill="#c0c0c0" fill-opacity="0.3" text-anchor="middle" transform="rotate(90 336.10 321.00)" dominant-baseline="middle">RRDTOOL / TOBI OETIKER</text>
<rect x="112.90" y="394.70" width="4.6" height="4.6" fill="#5a5ad5" stroke="#000" stroke-opacity="0.55" stroke-width="0.6"/>
<text x="119.70" y="398.90" font-family="Liberation Mono" font-size="5.5" fill="#cdcdcd" text-anchor="start" font-weight="normal" stroke="#cdcdcd" stroke-width="0.18" >user</text>
<text x="155.20" y="398.90" font-family="Liberation Mono" font-size="5.5" fill="#cdcdcd" text-anchor="start" font-weight="normal" stroke="#cdcdcd" stroke-width="0.18" >Cur:</text>
<text x="189.00" y="398.90" font-family="Liberation Mono" font-size="5.5" fill="#cdcdcd" text-anchor="end" font-weight="normal" stroke="#cdcdcd" stroke-width="0.18" >9.7%</text>
<text x="202.80" y="398.90" font-family="Liberation Mono" font-size="5.5" fill="#cdcdcd" text-anchor="start" font-weight="normal" stroke="#cdcdcd" stroke-width="0.18" >Avg:</text>
<text x="237.40" y="398.90" font-family="Liberation Mono" font-size="5.5" fill="#cdcdcd" text-anchor="end" font-weight="normal" stroke="#cdcdcd" stroke-width="0.18" >8.3%</text>
<text x="251.10" y="398.90" font-family="Liberation Mono" font-size="5.5" fill="#cdcdcd" text-anchor="start" font-weight="normal" stroke="#cdcdcd" stroke-width="0.18" >Min:</text>
<text x="285.00" y="398.90" font-family="Liberation Mono" font-size="5.5" fill="#cdcdcd" text-anchor="end" font-weight="normal" stroke="#cdcdcd" stroke-width="0.18" >4.9%</text>
<text x="299.60" y="398.90" font-family="Liberation Mono" font-size="5.5" fill="#cdcdcd" text-anchor="start" font-weight="normal" stroke="#cdcdcd" stroke-width="0.18" >Max:</text>
<text x="333.40" y="398.90" font-family="Liberation Mono" font-size="5.5" fill="#cdcdcd" text-anchor="end" font-weight="normal" stroke="#cdcdcd" stroke-width="0.18" >22.5%</text>
<rect x="112.90" y="401.25" width="4.6" height="4.6" fill="#d5d55a" stroke="#000" stroke-opacity="0.55" stroke-width="0.6"/>
<text x="119.70" y="405.45" font-family="Liberation Mono" font-size="5.5" fill="#cdcdcd" text-anchor="start" font-weight="normal" stroke="#cdcdcd" stroke-width="0.18" >nice</text>
<text x="155.20" y="405.45" font-family="Liberation Mono" font-size="5.5" fill="#cdcdcd" text-anchor="start" font-weight="normal" stroke="#cdcdcd" stroke-width="0.18" >Cur:</text>
<text x="189.00" y="405.45" font-family="Liberation Mono" font-size="5.5" fill="#cdcdcd" text-anchor="end" font-weight="normal" stroke="#cdcdcd" stroke-width="0.18" >0.0%</text>
<text x="202.80" y="405.45" font-family="Liberation Mono" font-size="5.5" fill="#cdcdcd" text-anchor="start" font-weight="normal" stroke="#cdcdcd" stroke-width="0.18" >Avg:</text>
<text x="237.40" y="405.45" font-family="Liberation Mono" font-size="5.5" fill="#cdcdcd" text-anchor="end" font-weight="normal" stroke="#cdcdcd" stroke-width="0.18" >0.0%</text>
<text x="251.10" y="405.45" font-family="Liberation Mono" font-size="5.5" fill="#cdcdcd" text-anchor="start" font-weight="normal" stroke="#cdcdcd" stroke-width="0.18" >Min:</text>
<text x="285.00" y="405.45" font-family="Liberation Mono" font-size="5.5" fill="#cdcdcd" text-anchor="end" font-weight="normal" stroke="#cdcdcd" stroke-width="0.18" >0.0%</text>
<text x="299.60" y="405.45" font-family="Liberation Mono" font-size="5.5" fill="#cdcdcd" text-anchor="start" font-weight="normal" stroke="#cdcdcd" stroke-width="0.18" >Max:</text>
<text x="333.40" y="405.45" font-family="Liberation Mono" font-size="5.5" fill="#cdcdcd" text-anchor="end" font-weight="normal" stroke="#cdcdcd" stroke-width="0.18" >0.1%</text>
<rect x="112.90" y="407.80" width="4.6" height="4.6" fill="#5ad5d5" stroke="#000" stroke-opacity="0.55" stroke-width="0.6"/>
<text x="119.70" y="412.00" font-family="Liberation Mono" font-size="5.5" fill="#cdcdcd" text-anchor="start" font-weight="normal" stroke="#cdcdcd" stroke-width="0.18" >system</text>
<text x="155.20" y="412.00" font-family="Liberation Mono" font-size="5.5" fill="#cdcdcd" text-anchor="start" font-weight="normal" stroke="#cdcdcd" stroke-width="0.18" >Cur:</text>
<text x="189.00" y="412.00" font-family="Liberation Mono" font-size="5.5" fill="#cdcdcd" text-anchor="end" font-weight="normal" stroke="#cdcdcd" stroke-width="0.18" >3.3%</text>
<text x="202.80" y="412.00" font-family="Liberation Mono" font-size="5.5" fill="#cdcdcd" text-anchor="start" font-weight="normal" stroke="#cdcdcd" stroke-width="0.18" >Avg:</text>
<text x="237.40" y="412.00" font-family="Liberation Mono" font-size="5.5" fill="#cdcdcd" text-anchor="end" font-weight="normal" stroke="#cdcdcd" stroke-width="0.18" >2.8%</text>
<text x="251.10" y="412.00" font-family="Liberation Mono" font-size="5.5" fill="#cdcdcd" text-anchor="start" font-weight="normal" stroke="#cdcdcd" stroke-width="0.18" >Min:</text>
<text x="285.00" y="412.00" font-family="Liberation Mono" font-size="5.5" fill="#cdcdcd" text-anchor="end" font-weight="normal" stroke="#cdcdcd" stroke-width="0.18" >1.8%</text>
<text x="299.60" y="412.00" font-family="Liberation Mono" font-size="5.5" fill="#cdcdcd" text-anchor="start" font-weight="normal" stroke="#cdcdcd" stroke-width="0.18" >Max:</text>
<text x="333.40" y="412.00" font-family="Liberation Mono" font-size="5.5" fill="#cdcdcd" text-anchor="end" font-weight="normal" stroke="#cdcdcd" stroke-width="0.18" >6.4%</text>
<rect x="112.90" y="414.35" width="4.6" height="4.6" fill="#d55ad5" stroke="#000" stroke-opacity="0.55" stroke-width="0.6"/>
<text x="119.70" y="418.55" font-family="Liberation Mono" font-size="5.5" fill="#cdcdcd" text-anchor="start" font-weight="normal" stroke="#cdcdcd" stroke-width="0.18" >I/O wait</text>
<text x="155.20" y="418.55" font-family="Liberation Mono" font-size="5.5" fill="#cdcdcd" text-anchor="start" font-weight="normal" stroke="#cdcdcd" stroke-width="0.18" >Cur:</text>
<text x="189.00" y="418.55" font-family="Liberation Mono" font-size="5.5" fill="#cdcdcd" text-anchor="end" font-weight="normal" stroke="#cdcdcd" stroke-width="0.18" >0.1%</text>
<text x="202.80" y="418.55" font-family="Liberation Mono" font-size="5.5" fill="#cdcdcd" text-anchor="start" font-weight="normal" stroke="#cdcdcd" stroke-width="0.18" >Avg:</text>
<text x="237.40" y="418.55" font-family="Liberation Mono" font-size="5.5" fill="#cdcdcd" text-anchor="end" font-weight="normal" stroke="#cdcdcd" stroke-width="0.18" >0.1%</text>
<text x="251.10" y="418.55" font-family="Liberation Mono" font-size="5.5" fill="#cdcdcd" text-anchor="start" font-weight="normal" stroke="#cdcdcd" stroke-width="0.18" >Min:</text>
<text x="285.00" y="418.55" font-family="Liberation Mono" font-size="5.5" fill="#cdcdcd" text-anchor="end" font-weight="normal" stroke="#cdcdcd" stroke-width="0.18" >0.0%</text>
<text x="299.60" y="418.55" font-family="Liberation Mono" font-size="5.5" fill="#cdcdcd" text-anchor="start" font-weight="normal" stroke="#cdcdcd" stroke-width="0.18" >Max:</text>
<text x="333.40" y="418.55" font-family="Liberation Mono" font-size="5.5" fill="#cdcdcd" text-anchor="end" font-weight="normal" stroke="#cdcdcd" stroke-width="0.18" >1.3%</text>
<rect x="345.90" y="285.70" width="233.10" height="144.30" fill="#131313" />
<rect x="382.80" y="298.70" width="181.80" height="84.70" fill="#000" />
<path d="M384.60,298.70V383.40 M392.17,298.70V383.40 M399.73,298.70V383.40 M414.87,298.70V383.40 M422.43,298.70V383.40 M430.00,298.70V383.40 M437.57,298.70V383.40 M445.13,298.70V383.40 M460.27,298.70V383.40 M467.83,298.70V383.40 M475.40,298.70V383.40 M482.97,298.70V383.40 M490.53,298.70V383.40 M505.67,298.70V383.40 M513.23,298.70V383.40 M520.80,298.70V383.40 M528.37,298.70V383.40 M535.93,298.70V383.40 M551.07,298.70V383.40 M558.63,298.70V383.40 M382.80,379.16H564.60 M382.80,370.69H564.60 M382.80,362.22H564.60 M382.80,353.75H564.60 M382.80,345.28H564.60 M382.80,336.81H564.60 M382.80,328.34H564.60 M382.80,319.88H564.60 M382.80,311.40H564.60 M382.80,302.94H564.60" stroke="#b0b090" stroke-opacity="0.150" stroke-width="0.6" fill="none"/>
<path d="M407.30,298.70V383.40 M452.60,298.70V383.40 M498.00,298.70V383.40 M543.40,298.70V383.40 M382.80,374.93H564.60 M382.80,366.46H564.60 M382.80,357.99H564.60 M382.80,349.52H564.60 M382.80,341.05H564.60 M382.80,332.58H564.60 M382.80,324.11H564.60 M382.80,315.64H564.60 M382.80,307.17H564.60 M382.80,298.70H564.60" stroke="#b0c0b0" stroke-opacity="0.240" stroke-width="0.7" fill="none"/>
<path d="M382.80,383.40 L382.80,374.93 L383.30,369.28 L383.80,367.14 L384.30,365.87 L384.80,365.61 L385.30,365.61 L385.80,365.85 L386.30,366.16 L386.80,366.46 L387.30,368.15 L387.80,369.85 L388.30,372.39 L388.80,374.93 L389.30,375.78 L389.80,376.62 L390.30,376.62 L390.80,376.62 L391.30,374.93 L391.80,372.63 L392.30,373.24 L392.80,376.79 L393.30,376.75 L393.80,376.71 L394.30,376.67 L394.80,376.62 L395.30,376.63 L395.80,376.64 L396.30,376.64 L396.80,376.65 L397.30,376.65 L397.80,376.66 L398.30,376.66 L398.80,376.67 L399.30,376.67 L399.80,376.68 L400.30,376.69 L400.80,376.69 L401.30,376.70 L401.80,376.70 L402.30,376.71 L402.80,376.71 L403.30,376.72 L403.80,376.73 L404.30,376.73 L404.80,376.74 L405.30,376.74 L405.80,376.75 L406.30,376.75 L406.80,376.76 L407.30,376.77 L407.80,376.77 L408.30,376.78 L408.80,376.78 L409.30,376.79 L409.80,376.79 L410.30,376.79 L410.80,376.79 L411.30,376.80 L411.80,376.80 L412.30,376.80 L412.80,376.80 L413.30,376.80 L413.80,376.80 L414.30,376.80 L414.80,376.80 L415.30,376.80 L415.80,376.80 L416.30,376.80 L416.80,376.80 L417.30,376.80 L417.80,376.80 L418.30,376.80 L418.80,376.81 L419.30,376.81 L419.80,376.81 L420.30,376.81 L420.80,376.81 L421.30,376.81 L421.80,376.81 L422.30,376.81 L422.80,376.81 L423.30,376.81 L423.80,376.81 L424.30,376.81 L424.80,376.81 L425.30,376.81 L425.80,376.82 L426.30,376.82 L426.80,376.82 L427.30,376.82 L427.80,376.82 L428.30,376.82 L428.80,376.82 L429.30,376.82 L429.80,376.82 L430.30,376.82 L430.80,376.82 L431.30,376.82 L431.80,376.82 L432.30,376.82 L432.80,376.82 L433.30,376.83 L433.80,376.83 L434.30,376.83 L434.80,376.83 L435.30,376.83 L435.80,376.83 L436.30,376.83 L436.80,376.83 L437.30,376.83 L437.80,376.83 L438.30,376.83 L438.80,376.83 L439.30,376.83 L439.80,376.83 L440.30,376.83 L440.80,376.84 L441.30,376.84 L441.80,376.84 L442.30,376.84 L442.80,376.84 L443.30,376.84 L443.80,376.84 L444.30,376.84 L444.80,376.84 L445.30,376.84 L445.80,376.84 L446.30,376.84 L446.80,376.84 L447.30,376.84 L447.80,376.84 L448.30,376.85 L448.80,376.85 L449.30,376.85 L449.80,376.85 L450.30,376.85 L450.80,376.85 L451.30,376.85 L451.80,376.85 L452.30,376.85 L452.80,376.85 L453.30,376.85 L453.80,376.85 L454.30,376.85 L454.80,376.85 L455.30,376.86 L455.80,376.86 L456.30,376.86 L456.80,376.86 L457.30,376.86 L457.80,376.86 L458.30,376.86 L458.80,376.86 L459.30,376.86 L459.80,376.86 L460.30,376.86 L460.80,376.86 L461.30,376.86 L461.80,376.86 L462.30,376.86 L462.80,376.87 L463.30,376.87 L463.80,376.87 L464.30,376.87 L464.80,376.87 L465.30,376.87 L465.80,376.87 L466.30,376.87 L466.80,376.87 L467.30,376.87 L467.80,376.87 L468.30,376.87 L468.80,376.87 L469.30,376.87 L469.80,376.87 L470.30,376.88 L470.80,376.88 L471.30,376.88 L471.80,376.88 L472.30,376.88 L472.80,376.88 L473.30,376.88 L473.80,376.88 L474.30,376.88 L474.80,376.88 L475.30,376.88 L475.80,376.88 L476.30,376.88 L476.80,376.88 L477.30,376.88 L477.80,376.89 L478.30,376.89 L478.80,376.89 L479.30,376.89 L479.80,376.89 L480.30,376.89 L480.80,376.89 L481.30,376.89 L481.80,376.89 L482.30,376.89 L482.80,376.89 L483.30,376.89 L483.80,376.89 L484.30,376.89 L484.80,376.90 L485.30,376.90 L485.80,376.90 L486.30,376.90 L486.80,376.90 L487.30,376.90 L487.80,376.90 L488.30,376.90 L488.80,376.90 L489.30,376.90 L489.80,376.90 L490.30,376.90 L490.80,376.90 L491.30,376.90 L491.80,376.90 L492.30,376.91 L492.80,376.91 L493.30,376.91 L493.80,376.91 L494.30,376.91 L494.80,376.91 L495.30,376.91 L495.80,376.91 L496.30,376.91 L496.80,376.91 L497.30,376.91 L497.80,376.91 L498.30,376.91 L498.80,376.91 L499.30,376.91 L499.80,376.92 L500.30,376.92 L500.80,376.92 L501.30,376.92 L501.80,376.92 L502.30,376.92 L502.80,376.92 L503.30,376.92 L503.80,376.92 L504.30,376.92 L504.80,376.92 L505.30,376.92 L505.80,376.92 L506.30,376.92 L506.80,376.92 L507.30,376.93 L507.80,376.93 L508.30,376.93 L508.80,376.93 L509.30,376.93 L509.80,376.93 L510.30,376.93 L510.80,376.93 L511.30,376.93 L511.80,376.93 L512.30,376.93 L512.80,376.93 L513.30,376.93 L513.80,376.93 L514.30,376.94 L514.80,376.94 L515.30,376.94 L515.80,376.94 L516.30,376.94 L516.80,376.94 L517.30,376.94 L517.80,376.94 L518.30,376.94 L518.80,376.94 L519.30,376.94 L519.80,376.94 L520.30,376.94 L520.80,376.94 L521.30,376.94 L521.80,376.95 L522.30,376.95 L522.80,376.95 L523.30,376.95 L523.80,376.95 L524.30,376.95 L524.80,376.95 L525.30,376.95 L525.80,376.95 L526.30,376.95 L526.80,376.95 L527.30,376.95 L527.80,376.95 L528.30,376.95 L528.80,376.95 L529.30,376.96 L529.80,376.96 L530.30,376.96 L530.80,376.96 L531.30,376.96 L531.80,376.96 L532.30,376.96 L532.80,376.96 L533.30,376.96 L533.80,376.96 L534.30,376.96 L534.80,376.96 L535.30,375.10 L535.80,373.24 L536.30,373.09 L536.80,372.95 L537.30,372.81 L537.80,372.67 L538.30,372.53 L538.80,372.39 L539.30,371.97 L539.80,371.54 L540.30,371.12 L540.80,370.69 L541.30,371.54 L541.80,372.39 L542.30,373.24 L542.80,374.08 L543.30,374.08 L543.80,374.08 L544.30,374.08 L544.80,374.08 L545.30,374.08 L545.80,374.08 L546.30,373.94 L546.80,373.80 L547.30,373.66 L547.80,373.52 L548.30,373.38 L548.80,373.24 L549.30,373.52 L549.80,373.80 L550.30,374.08 L550.80,374.37 L551.30,374.65 L551.80,374.93 L552.30,374.22 L552.80,373.52 L553.30,372.81 L553.80,372.11 L554.30,371.40 L554.80,370.69 L555.30,371.33 L555.80,371.97 L556.30,372.60 L556.80,373.24 L557.30,373.38 L557.80,373.52 L558.30,373.66 L558.80,373.80 L559.30,373.94 L559.80,374.08 L560.30,373.66 L560.80,373.24 L561.30,372.81 L561.80,372.39 L562.30,373.02 L562.80,373.66 L563.30,374.29 L563.80,374.93 L564.30,374.93 L564.30,383.40 Z" fill="#4444ee"/>
<path d="M382.80,383.40 L382.80,379.16 L383.30,378.74 L383.80,378.32 L384.30,378.32 L384.80,378.32 L385.30,378.32 L385.80,378.32 L386.30,378.32 L386.80,378.32 L387.30,378.32 L387.80,378.32 L388.30,378.32 L388.80,378.32 L389.30,378.32 L389.80,378.32 L390.30,378.32 L390.80,378.32 L391.30,378.32 L391.80,378.32 L392.30,378.32 L392.80,378.32 L393.30,378.66 L393.80,379.00 L394.30,379.33 L394.80,379.67 L395.30,379.67 L395.80,379.67 L396.30,379.67 L396.80,379.68 L397.30,379.68 L397.80,379.68 L398.30,379.68 L398.80,379.68 L399.30,379.68 L399.80,379.68 L400.30,379.68 L400.80,379.68 L401.30,379.68 L401.80,379.68 L402.30,379.68 L402.80,379.68 L403.30,379.68 L403.80,379.68 L404.30,379.68 L404.80,379.68 L405.30,379.68 L405.80,379.68 L406.30,379.68 L406.80,379.69 L407.30,379.69 L407.80,379.69 L408.30,379.69 L408.80,379.69 L409.30,379.69 L409.80,379.69 L410.30,379.69 L410.80,379.69 L411.30,379.69 L411.80,379.69 L412.30,379.69 L412.80,379.69 L413.30,379.69 L413.80,379.69 L414.30,379.69 L414.80,379.69 L415.30,379.69 L415.80,379.69 L416.30,379.69 L416.80,379.70 L417.30,379.70 L417.80,379.70 L418.30,379.70 L418.80,379.70 L419.30,379.70 L419.80,379.70 L420.30,379.70 L420.80,379.70 L421.30,379.70 L421.80,379.70 L422.30,379.70 L422.80,379.70 L423.30,379.70 L423.80,379.70 L424.30,379.70 L424.80,379.70 L425.30,379.70 L425.80,379.70 L426.30,379.70 L426.80,379.71 L427.30,379.71 L427.80,379.71 L428.30,379.71 L428.80,379.71 L429.30,379.71 L429.80,379.71 L430.30,379.71 L430.80,379.71 L431.30,379.71 L431.80,379.71 L432.30,379.71 L432.80,379.71 L433.30,379.71 L433.80,379.71 L434.30,379.71 L434.80,379.71 L435.30,379.71 L435.80,379.71 L436.30,379.71 L436.80,379.72 L437.30,379.72 L437.80,379.72 L438.30,379.72 L438.80,379.72 L439.30,379.72 L439.80,379.72 L440.30,379.72 L440.80,379.72 L441.30,379.72 L441.80,379.72 L442.30,379.72 L442.80,379.72 L443.30,379.72 L443.80,379.72 L444.30,379.72 L444.80,379.72 L445.30,379.72 L445.80,379.72 L446.30,379.72 L446.80,379.73 L447.30,379.73 L447.80,379.73 L448.30,379.73 L448.80,379.73 L449.30,379.73 L449.80,379.73 L450.30,379.73 L450.80,379.73 L451.30,379.73 L451.80,379.73 L452.30,379.73 L452.80,379.73 L453.30,379.73 L453.80,379.73 L454.30,379.73 L454.80,379.73 L455.30,379.73 L455.80,379.73 L456.30,379.73 L456.80,379.74 L457.30,379.74 L457.80,379.74 L458.30,379.74 L458.80,379.74 L459.30,379.74 L459.80,379.74 L460.30,379.74 L460.80,379.74 L461.30,379.74 L461.80,379.74 L462.30,379.74 L462.80,379.74 L463.30,379.74 L463.80,379.74 L464.30,379.74 L464.80,379.74 L465.30,379.74 L465.80,379.74 L466.30,379.74 L466.80,379.75 L467.30,379.75 L467.80,379.75 L468.30,379.75 L468.80,379.75 L469.30,379.75 L469.80,379.75 L470.30,379.75 L470.80,379.75 L471.30,379.75 L471.80,379.75 L472.30,379.75 L472.80,379.75 L473.30,379.75 L473.80,379.75 L474.30,379.75 L474.80,379.75 L475.30,379.75 L475.80,379.75 L476.30,379.75 L476.80,379.76 L477.30,379.76 L477.80,379.76 L478.30,379.76 L478.80,379.76 L479.30,379.76 L479.80,379.76 L480.30,379.76 L480.80,379.76 L481.30,379.76 L481.80,379.76 L482.30,379.76 L482.80,379.76 L483.30,379.76 L483.80,379.76 L484.30,379.76 L484.80,379.76 L485.30,379.76 L485.80,379.76 L486.30,379.76 L486.80,379.76 L487.30,379.77 L487.80,379.77 L488.30,379.77 L488.80,379.77 L489.30,379.77 L489.80,379.77 L490.30,379.77 L490.80,379.77 L491.30,379.77 L491.80,379.77 L492.30,379.77 L492.80,379.77 L493.30,379.77 L493.80,379.77 L494.30,379.77 L494.80,379.77 L495.30,379.77 L495.80,379.77 L496.30,379.77 L496.80,379.77 L497.30,379.78 L497.80,379.78 L498.30,379.78 L498.80,379.78 L499.30,379.78 L499.80,379.78 L500.30,379.78 L500.80,379.78 L501.30,379.78 L501.80,379.78 L502.30,379.78 L502.80,379.78 L503.30,379.78 L503.80,379.78 L504.30,379.78 L504.80,379.78 L505.30,379.78 L505.80,379.78 L506.30,379.78 L506.80,379.78 L507.30,379.79 L507.80,379.79 L508.30,379.79 L508.80,379.79 L509.30,379.79 L509.80,379.79 L510.30,379.79 L510.80,379.79 L511.30,379.79 L511.80,379.79 L512.30,379.79 L512.80,379.79 L513.30,379.79 L513.80,379.79 L514.30,379.79 L514.80,379.79 L515.30,379.79 L515.80,379.79 L516.30,379.79 L516.80,379.79 L517.30,379.80 L517.80,379.80 L518.30,379.80 L518.80,379.80 L519.30,379.80 L519.80,379.80 L520.30,379.80 L520.80,379.80 L521.30,379.80 L521.80,379.80 L522.30,379.80 L522.80,379.80 L523.30,379.80 L523.80,379.80 L524.30,379.80 L524.80,379.80 L525.30,379.80 L525.80,379.80 L526.30,379.80 L526.80,379.80 L527.30,379.81 L527.80,379.81 L528.30,379.81 L528.80,379.81 L529.30,379.81 L529.80,379.81 L530.30,379.81 L530.80,379.81 L531.30,379.81 L531.80,379.81 L532.30,379.81 L532.80,379.81 L533.30,379.81 L533.80,379.81 L534.30,379.81 L534.80,379.81 L535.30,379.81 L535.80,379.81 L536.30,379.81 L536.80,379.81 L537.30,379.82 L537.80,379.82 L538.30,379.82 L538.80,379.82 L539.30,379.82 L539.80,379.82 L540.30,379.82 L540.80,379.82 L541.30,379.82 L541.80,379.82 L542.30,379.82 L542.80,379.82 L543.30,379.82 L543.80,379.82 L544.30,379.82 L544.80,379.82 L545.30,379.82 L545.80,379.82 L546.30,379.82 L546.80,379.82 L547.30,379.83 L547.80,379.83 L548.30,379.83 L548.80,379.83 L549.30,379.83 L549.80,379.83 L550.30,379.83 L550.80,379.83 L551.30,379.83 L551.80,379.83 L552.30,379.83 L552.80,379.83 L553.30,379.83 L553.80,379.83 L554.30,379.83 L554.80,379.83 L555.30,379.83 L555.80,379.83 L556.30,379.83 L556.80,379.83 L557.30,379.84 L557.80,379.84 L558.30,379.84 L558.80,379.84 L559.30,379.84 L559.80,379.84 L560.30,379.84 L560.80,379.84 L561.30,379.84 L561.80,379.84 L562.30,379.84 L562.80,379.84 L563.30,379.84 L563.80,379.84 L564.30,379.84 L564.30,383.40 Z" fill="#c87a8a"/>
<path d="M382.80,383.40 L382.80,379.50 L383.30,379.12 L383.80,378.74 L384.30,378.74 L384.80,378.74 L385.30,378.74 L385.80,378.74 L386.30,378.74 L386.80,378.74 L387.30,378.74 L387.80,378.74 L388.30,378.74 L388.80,378.74 L389.30,378.74 L389.80,378.74 L390.30,378.74 L390.80,378.74 L391.30,378.74 L391.80,378.74 L392.30,378.74 L392.80,378.74 L393.30,379.31 L393.80,379.88 L394.30,380.46 L394.80,381.03 L395.30,381.03 L395.80,381.03 L396.30,381.03 L396.80,381.03 L397.30,381.03 L397.80,381.03 L398.30,381.03 L398.80,381.03 L399.30,381.03 L399.80,381.03 L400.30,381.03 L400.80,381.03 L401.30,381.03 L401.80,381.03 L402.30,381.03 L402.80,381.03 L403.30,381.03 L403.80,381.03 L404.30,381.03 L404.80,381.03 L405.30,381.03 L405.80,381.03 L406.30,381.03 L406.80,381.03 L407.30,381.03 L407.80,381.03 L408.30,381.04 L408.80,381.04 L409.30,381.04 L409.80,381.04 L410.30,381.04 L410.80,381.04 L411.30,381.04 L411.80,381.04 L412.30,381.04 L412.80,381.04 L413.30,381.04 L413.80,381.04 L414.30,381.04 L414.80,381.04 L415.30,381.04 L415.80,381.04 L416.30,381.04 L416.80,381.04 L417.30,381.04 L417.80,381.04 L418.30,381.04 L418.80,381.04 L419.30,381.04 L419.80,381.04 L420.30,381.04 L420.80,381.04 L421.30,381.04 L421.80,381.04 L422.30,381.04 L422.80,381.04 L423.30,381.04 L423.80,381.04 L424.30,381.04 L424.80,381.04 L425.30,381.04 L425.80,381.04 L426.30,381.04 L426.80,381.04 L427.30,381.04 L427.80,381.04 L428.30,381.05 L428.80,381.05 L429.30,381.05 L429.80,381.05 L430.30,381.05 L430.80,381.05 L431.30,381.05 L431.80,381.05 L432.30,381.05 L432.80,381.05 L433.30,381.05 L433.80,381.05 L434.30,381.05 L434.80,381.05 L435.30,381.05 L435.80,381.05 L436.30,381.05 L436.80,381.05 L437.30,381.05 L437.80,381.05 L438.30,381.05 L438.80,381.05 L439.30,381.05 L439.80,381.05 L440.30,381.05 L440.80,381.05 L441.30,381.05 L441.80,381.05 L442.30,381.05 L442.80,381.05 L443.30,381.05 L443.80,381.05 L444.30,381.05 L444.80,381.05 L445.30,381.05 L445.80,381.05 L446.30,381.05 L446.80,381.05 L447.30,381.05 L447.80,381.05 L448.30,381.06 L448.80,381.06 L449.30,381.06 L449.80,381.06 L450.30,381.06 L450.80,381.06 L451.30,381.06 L451.80,381.06 L452.30,381.06 L452.80,381.06 L453.30,381.06 L453.80,381.06 L454.30,381.06 L454.80,381.06 L455.30,381.06 L455.80,381.06 L456.30,381.06 L456.80,381.06 L457.30,381.06 L457.80,381.06 L458.30,381.06 L458.80,381.06 L459.30,381.06 L459.80,381.06 L460.30,381.06 L460.80,381.06 L461.30,381.06 L461.80,381.06 L462.30,381.06 L462.80,381.06 L463.30,381.06 L463.80,381.06 L464.30,381.06 L464.80,381.06 L465.30,381.06 L465.80,381.06 L466.30,381.06 L466.80,381.06 L467.30,381.06 L467.80,381.06 L468.30,381.07 L468.80,381.07 L469.30,381.07 L469.80,381.07 L470.30,381.07 L470.80,381.07 L471.30,381.07 L471.80,381.07 L472.30,381.07 L472.80,381.07 L473.30,381.07 L473.80,381.07 L474.30,381.07 L474.80,381.07 L475.30,381.07 L475.80,381.07 L476.30,381.07 L476.80,381.07 L477.30,381.07 L477.80,381.07 L478.30,381.07 L478.80,381.07 L479.30,381.07 L479.80,381.07 L480.30,381.07 L480.80,381.07 L481.30,381.07 L481.80,381.07 L482.30,381.07 L482.80,381.07 L483.30,381.07 L483.80,381.07 L484.30,381.07 L484.80,381.07 L485.30,381.07 L485.80,381.07 L486.30,381.07 L486.80,381.07 L487.30,381.07 L487.80,381.07 L488.30,381.08 L488.80,381.08 L489.30,381.08 L489.80,381.08 L490.30,381.08 L490.80,381.08 L491.30,381.08 L491.80,381.08 L492.30,381.08 L492.80,381.08 L493.30,381.08 L493.80,381.08 L494.30,381.08 L494.80,381.08 L495.30,381.08 L495.80,381.08 L496.30,381.08 L496.80,381.08 L497.30,381.08 L497.80,381.08 L498.30,381.08 L498.80,381.08 L499.30,381.08 L499.80,381.08 L500.30,381.08 L500.80,381.08 L501.30,381.08 L501.80,381.08 L502.30,381.08 L502.80,381.08 L503.30,381.08 L503.80,381.08 L504.30,381.08 L504.80,381.08 L505.30,381.08 L505.80,381.08 L506.30,381.08 L506.80,381.08 L507.30,381.08 L507.80,381.08 L508.30,381.09 L508.80,381.09 L509.30,381.09 L509.80,381.09 L510.30,381.09 L510.80,381.09 L511.30,381.09 L511.80,381.09 L512.30,381.09 L512.80,381.09 L513.30,381.09 L513.80,381.09 L514.30,381.09 L514.80,381.09 L515.30,381.09 L515.80,381.09 L516.30,381.09 L516.80,381.09 L517.30,381.09 L517.80,381.09 L518.30,381.09 L518.80,381.09 L519.30,381.09 L519.80,381.09 L520.30,381.09 L520.80,381.09 L521.30,381.09 L521.80,381.09 L522.30,381.09 L522.80,381.09 L523.30,381.09 L523.80,381.09 L524.30,381.09 L524.80,381.09 L525.30,381.09 L525.80,381.09 L526.30,381.09 L526.80,381.09 L527.30,381.09 L527.80,381.09 L528.30,381.09 L528.80,381.10 L529.30,381.10 L529.80,381.10 L530.30,381.10 L530.80,381.10 L531.30,381.10 L531.80,381.10 L532.30,381.10 L532.80,381.10 L533.30,381.10 L533.80,381.10 L534.30,381.10 L534.80,381.10 L535.30,381.10 L535.80,381.10 L536.30,381.10 L536.80,381.10 L537.30,381.10 L537.80,381.10 L538.30,381.10 L538.80,381.10 L539.30,381.10 L539.80,381.10 L540.30,381.10 L540.80,381.10 L541.30,381.10 L541.80,381.10 L542.30,381.10 L542.80,381.10 L543.30,381.10 L543.80,381.10 L544.30,381.10 L544.80,381.10 L545.30,381.10 L545.80,381.10 L546.30,381.10 L546.80,381.10 L547.30,381.10 L547.80,381.10 L548.30,381.10 L548.80,381.11 L549.30,381.11 L549.80,381.11 L550.30,381.11 L550.80,381.11 L551.30,381.11 L551.80,381.11 L552.30,381.11 L552.80,381.11 L553.30,381.11 L553.80,381.11 L554.30,381.11 L554.80,381.11 L555.30,381.11 L555.80,381.11 L556.30,381.11 L556.80,381.11 L557.30,381.11 L557.80,381.11 L558.30,381.11 L558.80,381.11 L559.30,381.11 L559.80,381.11 L560.30,381.11 L560.80,381.11 L561.30,381.11 L561.80,381.11 L562.30,381.11 L562.80,381.11 L563.30,381.11 L563.80,381.11 L564.30,381.11 L564.30,383.40 Z" fill="#44eeee"/>
<path d="M382.80,383.40 L382.80,381.11 L383.30,381.11 L383.80,381.11 L384.30,381.11 L384.80,381.11 L385.30,381.11 L385.80,381.11 L386.30,381.11 L386.80,381.11 L387.30,381.11 L387.80,381.11 L388.30,381.11 L388.80,381.11 L389.30,381.11 L389.80,381.11 L390.30,381.11 L390.80,381.11 L391.30,381.11 L391.80,381.11 L392.30,381.11 L392.80,381.11 L393.30,381.11 L393.80,381.11 L394.30,381.11 L394.80,381.11 L395.30,381.11 L395.80,381.11 L396.30,381.11 L396.80,381.11 L397.30,381.11 L397.80,381.11 L398.30,381.11 L398.80,381.11 L399.30,381.11 L399.80,381.11 L400.30,381.11 L400.80,381.11 L401.30,381.11 L401.80,381.11 L402.30,381.11 L402.80,381.11 L403.30,381.11 L403.80,381.11 L404.30,381.11 L404.80,381.11 L405.30,381.11 L405.80,381.11 L406.30,381.11 L406.80,381.11 L407.30,381.11 L407.80,381.11 L408.30,381.11 L408.80,381.11 L409.30,381.11 L409.80,381.11 L410.30,381.11 L410.80,381.11 L411.30,381.11 L411.80,381.11 L412.30,381.11 L412.80,381.11 L413.30,381.11 L413.80,381.11 L414.30,381.11 L414.80,381.11 L415.30,381.11 L415.80,381.11 L416.30,381.11 L416.80,381.11 L417.30,381.11 L417.80,381.11 L418.30,381.11 L418.80,381.11 L419.30,381.11 L419.80,381.11 L420.30,381.11 L420.80,381.11 L421.30,381.11 L421.80,381.11 L422.30,381.11 L422.80,381.11 L423.30,381.11 L423.80,381.11 L424.30,381.11 L424.80,381.11 L425.30,381.11 L425.80,381.11 L426.30,381.11 L426.80,381.11 L427.30,381.11 L427.80,381.11 L428.30,381.11 L428.80,381.11 L429.30,381.11 L429.80,381.11 L430.30,381.11 L430.80,381.11 L431.30,381.11 L431.80,381.11 L432.30,381.11 L432.80,381.11 L433.30,381.11 L433.80,381.11 L434.30,381.11 L434.80,381.11 L435.30,381.11 L435.80,381.11 L436.30,381.11 L436.80,381.11 L437.30,381.11 L437.80,381.11 L438.30,381.11 L438.80,381.11 L439.30,381.11 L439.80,381.11 L440.30,381.11 L440.80,381.11 L441.30,381.11 L441.80,381.11 L442.30,381.11 L442.80,381.11 L443.30,381.11 L443.80,381.11 L444.30,381.11 L444.80,381.11 L445.30,381.11 L445.80,381.11 L446.30,381.11 L446.80,381.11 L447.30,381.11 L447.80,381.11 L448.30,381.11 L448.80,381.11 L449.30,381.11 L449.80,381.11 L450.30,381.11 L450.80,381.11 L451.30,381.11 L451.80,381.11 L452.30,381.11 L452.80,381.11 L453.30,381.11 L453.80,381.11 L454.30,381.11 L454.80,381.11 L455.30,381.11 L455.80,381.11 L456.30,381.11 L456.80,381.11 L457.30,381.11 L457.80,381.11 L458.30,381.11 L458.80,381.11 L459.30,381.11 L459.80,381.11 L460.30,381.11 L460.80,381.11 L461.30,381.11 L461.80,381.11 L462.30,381.11 L462.80,381.11 L463.30,381.11 L463.80,381.11 L464.30,381.11 L464.80,381.11 L465.30,381.11 L465.80,381.11 L466.30,381.11 L466.80,381.11 L467.30,381.11 L467.80,381.11 L468.30,381.11 L468.80,381.11 L469.30,381.11 L469.80,381.11 L470.30,381.11 L470.80,381.11 L471.30,381.11 L471.80,381.11 L472.30,381.11 L472.80,381.11 L473.30,381.11 L473.80,381.11 L474.30,381.11 L474.80,381.11 L475.30,381.11 L475.80,381.11 L476.30,381.11 L476.80,381.11 L477.30,381.11 L477.80,381.11 L478.30,381.11 L478.80,381.11 L479.30,381.11 L479.80,381.11 L480.30,381.11 L480.80,381.11 L481.30,381.11 L481.80,381.11 L482.30,381.11 L482.80,381.11 L483.30,381.11 L483.80,381.11 L484.30,381.11 L484.80,381.11 L485.30,381.11 L485.80,381.11 L486.30,381.11 L486.80,381.11 L487.30,381.11 L487.80,381.11 L488.30,381.11 L488.80,381.11 L489.30,381.11 L489.80,381.11 L490.30,381.11 L490.80,381.11 L491.30,381.11 L491.80,381.11 L492.30,381.11 L492.80,381.11 L493.30,381.11 L493.80,381.11 L494.30,381.11 L494.80,381.11 L495.30,381.11 L495.80,381.11 L496.30,381.11 L496.80,381.11 L497.30,381.11 L497.80,381.11 L498.30,381.11 L498.80,381.11 L499.30,381.11 L499.80,381.11 L500.30,381.11 L500.80,381.11 L501.30,381.11 L501.80,381.11 L502.30,381.11 L502.80,381.11 L503.30,381.11 L503.80,381.11 L504.30,381.11 L504.80,381.11 L505.30,381.11 L505.80,381.11 L506.30,381.11 L506.80,381.11 L507.30,381.11 L507.80,381.11 L508.30,381.11 L508.80,381.11 L509.30,381.11 L509.80,381.11 L510.30,381.11 L510.80,381.11 L511.30,381.11 L511.80,381.11 L512.30,381.11 L512.80,381.11 L513.30,381.11 L513.80,381.11 L514.30,381.11 L514.80,381.11 L515.30,381.11 L515.80,381.11 L516.30,381.11 L516.80,381.11 L517.30,381.11 L517.80,381.11 L518.30,381.11 L518.80,381.11 L519.30,381.11 L519.80,381.11 L520.30,381.11 L520.80,381.11 L521.30,381.11 L521.80,381.11 L522.30,381.11 L522.80,381.11 L523.30,381.11 L523.80,381.11 L524.30,381.11 L524.80,381.11 L525.30,381.11 L525.80,381.11 L526.30,381.11 L526.80,381.11 L527.30,381.11 L527.80,381.11 L528.30,381.11 L528.80,381.11 L529.30,381.11 L529.80,381.11 L530.30,381.11 L530.80,381.11 L531.30,381.11 L531.80,381.11 L532.30,381.11 L532.80,381.11 L533.30,381.11 L533.80,381.11 L534.30,381.11 L534.80,381.11 L535.30,381.11 L535.80,381.11 L536.30,381.11 L536.80,381.11 L537.30,381.11 L537.80,381.11 L538.30,381.11 L538.80,381.11 L539.30,381.11 L539.80,381.11 L540.30,381.11 L540.80,381.11 L541.30,381.11 L541.80,381.11 L542.30,381.11 L542.80,381.11 L543.30,381.11 L543.80,381.11 L544.30,381.11 L544.80,381.11 L545.30,381.11 L545.80,381.11 L546.30,381.11 L546.80,381.11 L547.30,381.11 L547.80,381.11 L548.30,381.11 L548.80,381.11 L549.30,381.11 L549.80,381.11 L550.30,381.11 L550.80,381.11 L551.30,381.11 L551.80,381.11 L552.30,381.11 L552.80,381.11 L553.30,381.11 L553.80,381.11 L554.30,381.11 L554.80,381.11 L555.30,381.11 L555.80,381.11 L556.30,381.11 L556.80,381.11 L557.30,381.11 L557.80,381.11 L558.30,381.11 L558.80,381.11 L559.30,381.11 L559.80,381.11 L560.30,381.11 L560.80,381.11 L561.30,381.11 L561.80,381.11 L562.30,381.11 L562.80,381.11 L563.30,381.11 L563.80,381.11 L564.30,381.11 L564.30,383.40 Z" fill="#b8d090"/>
<path d="M382.80,383.40 L382.80,382.21 L383.30,382.21 L383.80,382.21 L384.30,382.21 L384.80,382.21 L385.30,382.21 L385.80,382.21 L386.30,382.21 L386.80,382.21 L387.30,382.21 L387.80,382.21 L388.30,382.21 L388.80,382.21 L389.30,382.21 L389.80,382.21 L390.30,382.21 L390.80,382.21 L391.30,382.21 L391.80,382.21 L392.30,382.21 L392.80,382.21 L393.30,382.21 L393.80,382.21 L394.30,382.21 L394.80,382.21 L395.30,382.21 L395.80,382.21 L396.30,382.21 L396.80,382.21 L397.30,382.21 L397.80,382.21 L398.30,382.21 L398.80,382.21 L399.30,382.21 L399.80,382.21 L400.30,382.21 L400.80,382.21 L401.30,382.21 L401.80,382.21 L402.30,382.21 L402.80,382.21 L403.30,382.21 L403.80,382.21 L404.30,382.21 L404.80,382.21 L405.30,382.21 L405.80,382.21 L406.30,382.21 L406.80,382.21 L407.30,382.21 L407.80,382.21 L408.30,382.21 L408.80,382.21 L409.30,382.21 L409.80,382.21 L410.30,382.21 L410.80,382.21 L411.30,382.21 L411.80,382.21 L412.30,382.21 L412.80,382.21 L413.30,382.21 L413.80,382.21 L414.30,382.21 L414.80,382.21 L415.30,382.21 L415.80,382.21 L416.30,382.21 L416.80,382.21 L417.30,382.21 L417.80,382.21 L418.30,382.21 L418.80,382.21 L419.30,382.21 L419.80,382.21 L420.30,382.21 L420.80,382.21 L421.30,382.21 L421.80,382.21 L422.30,382.21 L422.80,382.21 L423.30,382.21 L423.80,382.21 L424.30,382.21 L424.80,382.21 L425.30,382.21 L425.80,382.21 L426.30,382.21 L426.80,382.21 L427.30,382.21 L427.80,382.21 L428.30,382.21 L428.80,382.21 L429.30,382.21 L429.80,382.21 L430.30,382.21 L430.80,382.21 L431.30,382.21 L431.80,382.21 L432.30,382.21 L432.80,382.21 L433.30,382.21 L433.80,382.21 L434.30,382.21 L434.80,382.21 L435.30,382.21 L435.80,382.21 L436.30,382.21 L436.80,382.21 L437.30,382.21 L437.80,382.21 L438.30,382.21 L438.80,382.21 L439.30,382.21 L439.80,382.21 L440.30,382.21 L440.80,382.21 L441.30,382.21 L441.80,382.21 L442.30,382.21 L442.80,382.21 L443.30,382.21 L443.80,382.21 L444.30,382.21 L444.80,382.21 L445.30,382.21 L445.80,382.21 L446.30,382.21 L446.80,382.21 L447.30,382.21 L447.80,382.21 L448.30,382.21 L448.80,382.21 L449.30,382.21 L449.80,382.21 L450.30,382.21 L450.80,382.21 L451.30,382.21 L451.80,382.21 L452.30,382.21 L452.80,382.21 L453.30,382.21 L453.80,382.21 L454.30,382.21 L454.80,382.21 L455.30,382.21 L455.80,382.21 L456.30,382.21 L456.80,382.21 L457.30,382.21 L457.80,382.21 L458.30,382.21 L458.80,382.21 L459.30,382.21 L459.80,382.21 L460.30,382.21 L460.80,382.21 L461.30,382.21 L461.80,382.21 L462.30,382.21 L462.80,382.21 L463.30,382.21 L463.80,382.21 L464.30,382.21 L464.80,382.21 L465.30,382.21 L465.80,382.21 L466.30,382.21 L466.80,382.21 L467.30,382.21 L467.80,382.21 L468.30,382.21 L468.80,382.21 L469.30,382.21 L469.80,382.21 L470.30,382.21 L470.80,382.21 L471.30,382.21 L471.80,382.21 L472.30,382.21 L472.80,382.21 L473.30,382.21 L473.80,382.21 L474.30,382.21 L474.80,382.21 L475.30,382.21 L475.80,382.21 L476.30,382.21 L476.80,382.21 L477.30,382.21 L477.80,382.21 L478.30,382.21 L478.80,382.21 L479.30,382.21 L479.80,382.21 L480.30,382.21 L480.80,382.21 L481.30,382.21 L481.80,382.21 L482.30,382.21 L482.80,382.21 L483.30,382.21 L483.80,382.21 L484.30,382.21 L484.80,382.21 L485.30,382.21 L485.80,382.21 L486.30,382.21 L486.80,382.21 L487.30,382.21 L487.80,382.21 L488.30,382.21 L488.80,382.21 L489.30,382.21 L489.80,382.21 L490.30,382.21 L490.80,382.21 L491.30,382.21 L491.80,382.21 L492.30,382.21 L492.80,382.21 L493.30,382.21 L493.80,382.21 L494.30,382.21 L494.80,382.21 L495.30,382.21 L495.80,382.21 L496.30,382.21 L496.80,382.21 L497.30,382.21 L497.80,382.21 L498.30,382.21 L498.80,382.21 L499.30,382.21 L499.80,382.21 L500.30,382.21 L500.80,382.21 L501.30,382.21 L501.80,382.21 L502.30,382.21 L502.80,382.21 L503.30,382.21 L503.80,382.21 L504.30,382.21 L504.80,382.21 L505.30,382.21 L505.80,382.21 L506.30,382.21 L506.80,382.21 L507.30,382.21 L507.80,382.21 L508.30,382.21 L508.80,382.21 L509.30,382.21 L509.80,382.21 L510.30,382.21 L510.80,382.21 L511.30,382.21 L511.80,382.21 L512.30,382.21 L512.80,382.21 L513.30,382.21 L513.80,382.21 L514.30,382.21 L514.80,382.21 L515.30,382.21 L515.80,382.21 L516.30,382.21 L516.80,382.21 L517.30,382.21 L517.80,382.21 L518.30,382.21 L518.80,382.21 L519.30,382.21 L519.80,382.21 L520.30,382.21 L520.80,382.21 L521.30,382.21 L521.80,382.21 L522.30,382.21 L522.80,382.21 L523.30,382.21 L523.80,382.21 L524.30,382.21 L524.80,382.21 L525.30,382.21 L525.80,382.21 L526.30,382.21 L526.80,382.21 L527.30,382.21 L527.80,382.21 L528.30,382.21 L528.80,382.21 L529.30,382.21 L529.80,382.21 L530.30,382.21 L530.80,382.21 L531.30,382.21 L531.80,382.21 L532.30,382.21 L532.80,382.21 L533.30,382.21 L533.80,382.21 L534.30,382.21 L534.80,382.21 L535.30,382.21 L535.80,382.21 L536.30,382.21 L536.80,382.21 L537.30,382.21 L537.80,382.21 L538.30,382.21 L538.80,382.21 L539.30,382.21 L539.80,382.21 L540.30,382.21 L540.80,382.21 L541.30,382.21 L541.80,382.21 L542.30,382.21 L542.80,382.21 L543.30,382.21 L543.80,382.21 L544.30,382.21 L544.80,382.21 L545.30,382.21 L545.80,382.21 L546.30,382.21 L546.80,382.21 L547.30,382.21 L547.80,382.21 L548.30,382.21 L548.80,382.21 L549.30,382.21 L549.80,382.21 L550.30,382.21 L550.80,382.21 L551.30,382.21 L551.80,382.21 L552.30,382.21 L552.80,382.21 L553.30,382.21 L553.80,382.21 L554.30,382.21 L554.80,382.21 L555.30,382.21 L555.80,382.21 L556.30,382.21 L556.80,382.21 L557.30,382.21 L557.80,382.21 L558.30,382.21 L558.80,382.21 L559.30,382.21 L559.80,382.21 L560.30,382.21 L560.80,382.21 L561.30,382.21 L561.80,382.21 L562.30,382.21 L562.80,382.21 L563.30,382.21 L563.80,382.21 L564.30,382.21 L564.30,383.40 Z" fill="#e2a036"/>
<path d="M381.20,297.50 L384.40,297.50 L382.80,294.70 Z" fill="#fff"/>
<path d="M565.40,381.80 L565.40,385.00 L568.20,383.40 Z" fill="#fff"/>
<text x="378.30" y="385.30" font-family="Liberation Mono" font-size="5.5" fill="#cdcdcd" text-anchor="end" font-weight="normal" stroke="#cdcdcd" stroke-width="0.18" >0</text>
<text x="378.30" y="376.83" font-family="Liberation Mono" font-size="5.5" fill="#cdcdcd" text-anchor="end" font-weight="normal" stroke="#cdcdcd" stroke-width="0.18" >10</text>
<text x="378.30" y="368.36" font-family="Liberation Mono" font-size="5.5" fill="#cdcdcd" text-anchor="end" font-weight="normal" stroke="#cdcdcd" stroke-width="0.18" >20</text>
<text x="378.30" y="359.89" font-family="Liberation Mono" font-size="5.5" fill="#cdcdcd" text-anchor="end" font-weight="normal" stroke="#cdcdcd" stroke-width="0.18" >30</text>
<text x="378.30" y="351.42" font-family="Liberation Mono" font-size="5.5" fill="#cdcdcd" text-anchor="end" font-weight="normal" stroke="#cdcdcd" stroke-width="0.18" >40</text>
<text x="378.30" y="342.95" font-family="Liberation Mono" font-size="5.5" fill="#cdcdcd" text-anchor="end" font-weight="normal" stroke="#cdcdcd" stroke-width="0.18" >50</text>
<text x="378.30" y="334.48" font-family="Liberation Mono" font-size="5.5" fill="#cdcdcd" text-anchor="end" font-weight="normal" stroke="#cdcdcd" stroke-width="0.18" >60</text>
<text x="378.30" y="326.01" font-family="Liberation Mono" font-size="5.5" fill="#cdcdcd" text-anchor="end" font-weight="normal" stroke="#cdcdcd" stroke-width="0.18" >70</text>
<text x="378.30" y="317.54" font-family="Liberation Mono" font-size="5.5" fill="#cdcdcd" text-anchor="end" font-weight="normal" stroke="#cdcdcd" stroke-width="0.18" >80</text>
<text x="378.30" y="309.07" font-family="Liberation Mono" font-size="5.5" fill="#cdcdcd" text-anchor="end" font-weight="normal" stroke="#cdcdcd" stroke-width="0.18" >90</text>
<text x="378.30" y="300.60" font-family="Liberation Mono" font-size="5.5" fill="#cdcdcd" text-anchor="end" font-weight="normal" stroke="#cdcdcd" stroke-width="0.18" >100</text>
<text x="426.50" y="296.60" font-family="Liberation Mono" font-size="6.5" fill="#cdcdcd" text-anchor="start" font-weight="normal" stroke="#cdcdcd" stroke-width="0.18" >Processor 1  (1day)</text>
<text x="351.60" y="340.40" font-family="Liberation Mono" font-size="5.6" fill="#cdcdcd" text-anchor="middle" dominant-baseline="central" stroke="#cdcdcd" stroke-width="0.18" transform="rotate(-90 351.60 340.40)">Percent (%)</text>
<text x="407.30" y="389.80" font-family="Liberation Mono" font-size="5.5" fill="#cdcdcd" text-anchor="middle" font-weight="normal" stroke="#cdcdcd" stroke-width="0.18" >18:00</text>
<text x="452.60" y="389.80" font-family="Liberation Mono" font-size="5.5" fill="#cdcdcd" text-anchor="middle" font-weight="normal" stroke="#cdcdcd" stroke-width="0.18" >00:00</text>
<text x="498.00" y="389.80" font-family="Liberation Mono" font-size="5.5" fill="#cdcdcd" text-anchor="middle" font-weight="normal" stroke="#cdcdcd" stroke-width="0.18" >06:00</text>
<text x="543.40" y="389.80" font-family="Liberation Mono" font-size="5.5" fill="#cdcdcd" text-anchor="middle" font-weight="normal" stroke="#cdcdcd" stroke-width="0.18" >12:00</text>
<text x="576.10" y="321.00" font-family="Liberation Mono" font-size="4.4" fill="#c0c0c0" fill-opacity="0.3" text-anchor="middle" transform="rotate(90 576.10 321.00)" dominant-baseline="middle">RRDTOOL / TOBI OETIKER</text>
<rect x="352.90" y="394.70" width="4.6" height="4.6" fill="#5a5ad5" stroke="#000" stroke-opacity="0.55" stroke-width="0.6"/>
<text x="359.70" y="398.90" font-family="Liberation Mono" font-size="5.5" fill="#cdcdcd" text-anchor="start" font-weight="normal" stroke="#cdcdcd" stroke-width="0.18" >user</text>
<text x="395.20" y="398.90" font-family="Liberation Mono" font-size="5.5" fill="#cdcdcd" text-anchor="start" font-weight="normal" stroke="#cdcdcd" stroke-width="0.18" >Cur:</text>
<text x="429.00" y="398.90" font-family="Liberation Mono" font-size="5.5" fill="#cdcdcd" text-anchor="end" font-weight="normal" stroke="#cdcdcd" stroke-width="0.18" >9.0%</text>
<text x="442.80" y="398.90" font-family="Liberation Mono" font-size="5.5" fill="#cdcdcd" text-anchor="start" font-weight="normal" stroke="#cdcdcd" stroke-width="0.18" >Avg:</text>
<text x="477.40" y="398.90" font-family="Liberation Mono" font-size="5.5" fill="#cdcdcd" text-anchor="end" font-weight="normal" stroke="#cdcdcd" stroke-width="0.18" >7.5%</text>
<text x="491.10" y="398.90" font-family="Liberation Mono" font-size="5.5" fill="#cdcdcd" text-anchor="start" font-weight="normal" stroke="#cdcdcd" stroke-width="0.18" >Min:</text>
<text x="525.00" y="398.90" font-family="Liberation Mono" font-size="5.5" fill="#cdcdcd" text-anchor="end" font-weight="normal" stroke="#cdcdcd" stroke-width="0.18" >4.3%</text>
<text x="539.60" y="398.90" font-family="Liberation Mono" font-size="5.5" fill="#cdcdcd" text-anchor="start" font-weight="normal" stroke="#cdcdcd" stroke-width="0.18" >Max:</text>
<text x="573.40" y="398.90" font-family="Liberation Mono" font-size="5.5" fill="#cdcdcd" text-anchor="end" font-weight="normal" stroke="#cdcdcd" stroke-width="0.18" >22.1%</text>
<rect x="352.90" y="401.25" width="4.6" height="4.6" fill="#d5d55a" stroke="#000" stroke-opacity="0.55" stroke-width="0.6"/>
<text x="359.70" y="405.45" font-family="Liberation Mono" font-size="5.5" fill="#cdcdcd" text-anchor="start" font-weight="normal" stroke="#cdcdcd" stroke-width="0.18" >nice</text>
<text x="395.20" y="405.45" font-family="Liberation Mono" font-size="5.5" fill="#cdcdcd" text-anchor="start" font-weight="normal" stroke="#cdcdcd" stroke-width="0.18" >Cur:</text>
<text x="429.00" y="405.45" font-family="Liberation Mono" font-size="5.5" fill="#cdcdcd" text-anchor="end" font-weight="normal" stroke="#cdcdcd" stroke-width="0.18" >0.0%</text>
<text x="442.80" y="405.45" font-family="Liberation Mono" font-size="5.5" fill="#cdcdcd" text-anchor="start" font-weight="normal" stroke="#cdcdcd" stroke-width="0.18" >Avg:</text>
<text x="477.40" y="405.45" font-family="Liberation Mono" font-size="5.5" fill="#cdcdcd" text-anchor="end" font-weight="normal" stroke="#cdcdcd" stroke-width="0.18" >0.0%</text>
<text x="491.10" y="405.45" font-family="Liberation Mono" font-size="5.5" fill="#cdcdcd" text-anchor="start" font-weight="normal" stroke="#cdcdcd" stroke-width="0.18" >Min:</text>
<text x="525.00" y="405.45" font-family="Liberation Mono" font-size="5.5" fill="#cdcdcd" text-anchor="end" font-weight="normal" stroke="#cdcdcd" stroke-width="0.18" >0.0%</text>
<text x="539.60" y="405.45" font-family="Liberation Mono" font-size="5.5" fill="#cdcdcd" text-anchor="start" font-weight="normal" stroke="#cdcdcd" stroke-width="0.18" >Max:</text>
<text x="573.40" y="405.45" font-family="Liberation Mono" font-size="5.5" fill="#cdcdcd" text-anchor="end" font-weight="normal" stroke="#cdcdcd" stroke-width="0.18" >0.1%</text>
<rect x="352.90" y="407.80" width="4.6" height="4.6" fill="#5ad5d5" stroke="#000" stroke-opacity="0.55" stroke-width="0.6"/>
<text x="359.70" y="412.00" font-family="Liberation Mono" font-size="5.5" fill="#cdcdcd" text-anchor="start" font-weight="normal" stroke="#cdcdcd" stroke-width="0.18" >system</text>
<text x="395.20" y="412.00" font-family="Liberation Mono" font-size="5.5" fill="#cdcdcd" text-anchor="start" font-weight="normal" stroke="#cdcdcd" stroke-width="0.18" >Cur:</text>
<text x="429.00" y="412.00" font-family="Liberation Mono" font-size="5.5" fill="#cdcdcd" text-anchor="end" font-weight="normal" stroke="#cdcdcd" stroke-width="0.18" >2.9%</text>
<text x="442.80" y="412.00" font-family="Liberation Mono" font-size="5.5" fill="#cdcdcd" text-anchor="start" font-weight="normal" stroke="#cdcdcd" stroke-width="0.18" >Avg:</text>
<text x="477.40" y="412.00" font-family="Liberation Mono" font-size="5.5" fill="#cdcdcd" text-anchor="end" font-weight="normal" stroke="#cdcdcd" stroke-width="0.18" >2.5%</text>
<text x="491.10" y="412.00" font-family="Liberation Mono" font-size="5.5" fill="#cdcdcd" text-anchor="start" font-weight="normal" stroke="#cdcdcd" stroke-width="0.18" >Min:</text>
<text x="525.00" y="412.00" font-family="Liberation Mono" font-size="5.5" fill="#cdcdcd" text-anchor="end" font-weight="normal" stroke="#cdcdcd" stroke-width="0.18" >1.7%</text>
<text x="539.60" y="412.00" font-family="Liberation Mono" font-size="5.5" fill="#cdcdcd" text-anchor="start" font-weight="normal" stroke="#cdcdcd" stroke-width="0.18" >Max:</text>
<text x="573.40" y="412.00" font-family="Liberation Mono" font-size="5.5" fill="#cdcdcd" text-anchor="end" font-weight="normal" stroke="#cdcdcd" stroke-width="0.18" >5.5%</text>
<rect x="352.90" y="414.35" width="4.6" height="4.6" fill="#d55ad5" stroke="#000" stroke-opacity="0.55" stroke-width="0.6"/>
<text x="359.70" y="418.55" font-family="Liberation Mono" font-size="5.5" fill="#cdcdcd" text-anchor="start" font-weight="normal" stroke="#cdcdcd" stroke-width="0.18" >I/O wait</text>
<text x="395.20" y="418.55" font-family="Liberation Mono" font-size="5.5" fill="#cdcdcd" text-anchor="start" font-weight="normal" stroke="#cdcdcd" stroke-width="0.18" >Cur:</text>
<text x="429.00" y="418.55" font-family="Liberation Mono" font-size="5.5" fill="#cdcdcd" text-anchor="end" font-weight="normal" stroke="#cdcdcd" stroke-width="0.18" >0.1%</text>
<text x="442.80" y="418.55" font-family="Liberation Mono" font-size="5.5" fill="#cdcdcd" text-anchor="start" font-weight="normal" stroke="#cdcdcd" stroke-width="0.18" >Avg:</text>
<text x="477.40" y="418.55" font-family="Liberation Mono" font-size="5.5" fill="#cdcdcd" text-anchor="end" font-weight="normal" stroke="#cdcdcd" stroke-width="0.18" >0.1%</text>
<text x="491.10" y="418.55" font-family="Liberation Mono" font-size="5.5" fill="#cdcdcd" text-anchor="start" font-weight="normal" stroke="#cdcdcd" stroke-width="0.18" >Min:</text>
<text x="525.00" y="418.55" font-family="Liberation Mono" font-size="5.5" fill="#cdcdcd" text-anchor="end" font-weight="normal" stroke="#cdcdcd" stroke-width="0.18" >0.0%</text>
<text x="539.60" y="418.55" font-family="Liberation Mono" font-size="5.5" fill="#cdcdcd" text-anchor="start" font-weight="normal" stroke="#cdcdcd" stroke-width="0.18" >Max:</text>
<text x="573.40" y="418.55" font-family="Liberation Mono" font-size="5.5" fill="#cdcdcd" text-anchor="end" font-weight="normal" stroke="#cdcdcd" stroke-width="0.18" >1.0%</text>
<rect x="0.00" y="418.60" width="694.00" height="1.60" fill="#f0f0f0" />
<rect x="0.00" y="420.20" width="694.00" height="0.80" fill="#9a9a9a" />
<rect x="1.10" y="1.90" width="1.30" height="419.10" fill="#eaeaea" />
<rect x="0.00" y="0.00" width="1.10" height="421.00" fill="#8f9094" />
<rect x="692.70" y="0.00" width="1.30" height="421.00" fill="#8f9094" />
<rect x="0.00" y="0.00" width="694.00" height="1.10" fill="#8a8d93" />
<rect x="0.00" y="1.10" width="694.00" height="0.80" fill="#e6e7ea" />
</svg>
</body></html>
